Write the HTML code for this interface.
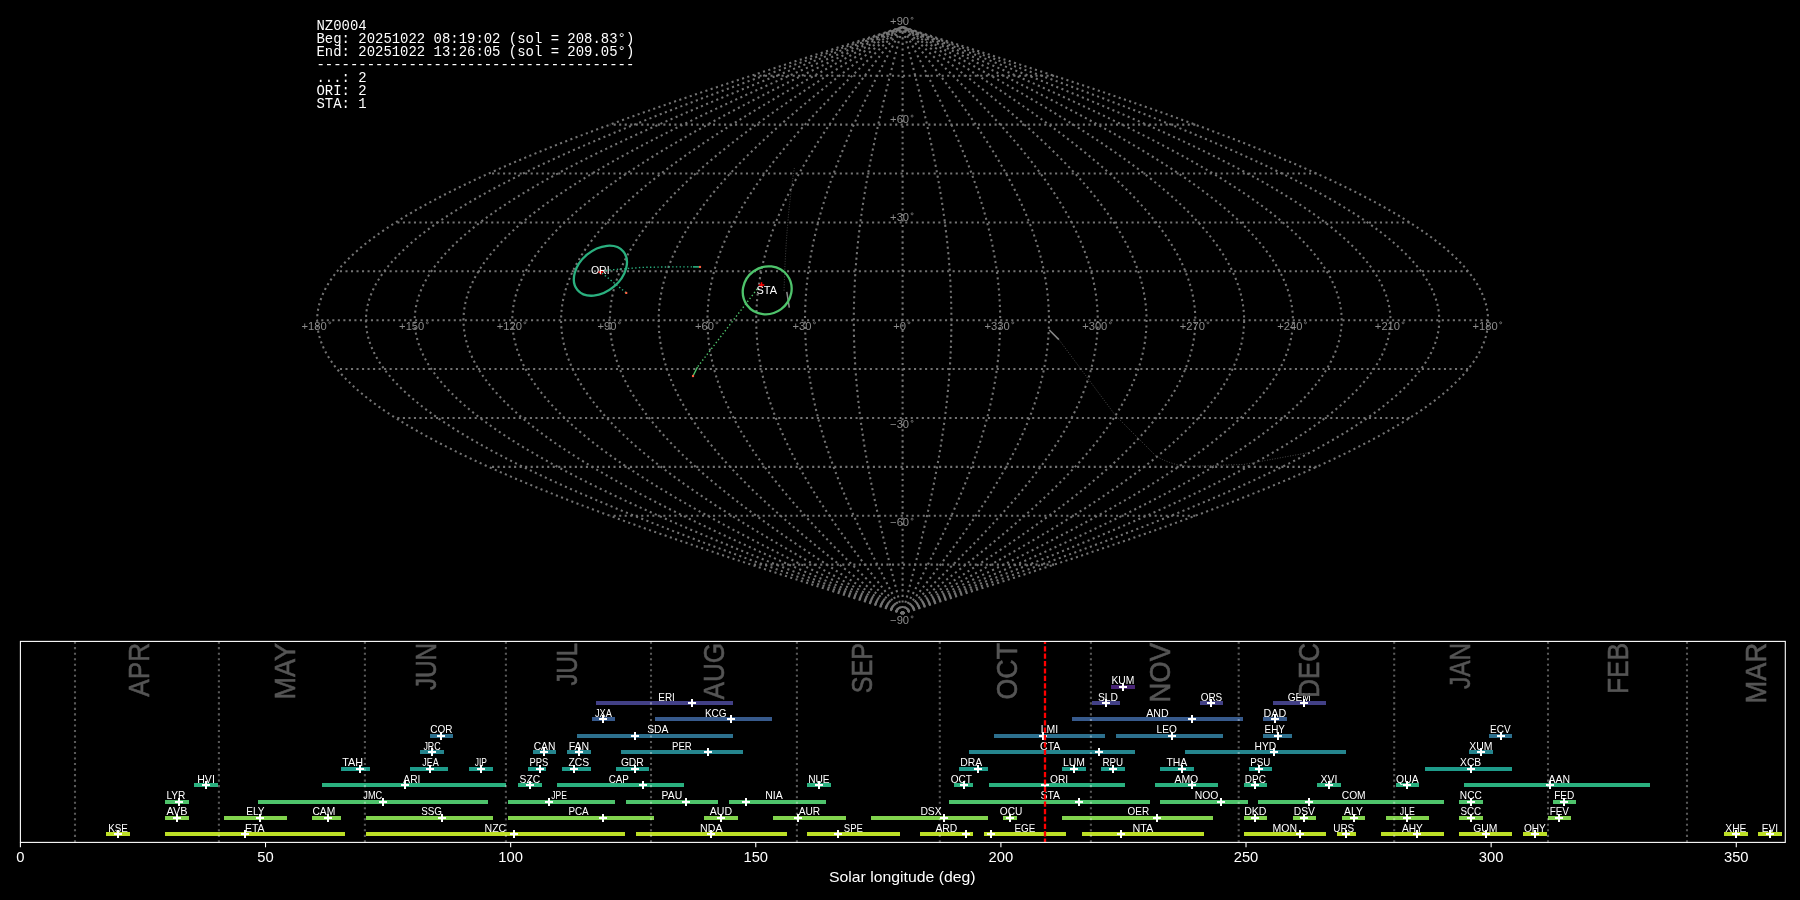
<!DOCTYPE html>
<html><head><meta charset="utf-8"><style>
html,body{margin:0;padding:0;background:#000;width:1800px;height:900px;overflow:hidden}
svg{display:block;will-change:transform}
text{font-family:"Liberation Sans",sans-serif}
</style></head><body>
<svg width="1800" height="900" viewBox="0 0 1800 900">
<rect width="1800" height="900" fill="#000"/>
<g fill="none" stroke="#737373" stroke-width="2.08" stroke-dasharray="2.08 3.44">
<path d="M902.60 613.51 L907.71 611.88 L912.82 610.25 L917.93 608.62 L923.03 606.99 L928.14 605.36 L933.24 603.73 L938.34 602.10 L943.44 600.47 L948.53 598.84 L953.63 597.21 L958.71 595.59 L963.80 593.96 L968.87 592.33 L973.95 590.70 L979.02 589.07 L984.08 587.44 L989.14 585.81 L994.18 584.18 L999.23 582.55 L1004.26 580.92 L1009.29 579.29 L1014.31 577.66 L1019.32 576.03 L1024.32 574.40 L1029.31 572.77 L1034.30 571.14 L1039.27 569.51 L1044.23 567.88 L1049.18 566.25 L1054.13 564.62 L1059.05 563.00 L1063.97 561.37 L1068.88 559.74 L1073.77 558.11 L1078.65 556.48 L1083.51 554.85 L1088.37 553.22 L1093.20 551.59 L1098.03 549.96 L1102.84 548.33 L1107.63 546.70 L1112.41 545.07 L1117.17 543.44 L1121.91 541.81 L1126.64 540.18 L1131.35 538.55 L1136.05 536.92 L1140.72 535.29 L1145.38 533.66 L1150.02 532.03 L1154.64 530.41 L1159.24 528.78 L1163.83 527.15 L1168.39 525.52 L1172.93 523.89 L1177.45 522.26 L1181.95 520.63 L1186.43 519.00 L1190.89 517.37 L1195.33 515.74 L1199.74 514.11 L1204.13 512.48 L1208.50 510.85 L1212.84 509.22 L1217.16 507.59 L1221.46 505.96 L1225.73 504.33 L1229.98 502.70 L1234.20 501.07 L1238.40 499.44 L1242.57 497.82 L1246.72 496.19 L1250.84 494.56 L1254.93 492.93 L1259.00 491.30 L1263.04 489.67 L1267.05 488.04 L1271.04 486.41 L1274.99 484.78 L1278.92 483.15 L1282.82 481.52 L1286.69 479.89 L1290.53 478.26 L1294.34 476.63 L1298.12 475.00 L1301.88 473.37 L1305.60 471.74 L1309.29 470.11 L1312.95 468.48 L1316.58 466.86 L1320.17 465.23 L1323.74 463.60 L1327.27 461.97 L1330.77 460.34 L1334.24 458.71 L1337.67 457.08 L1341.08 455.45 L1344.44 453.82 L1347.78 452.19 L1351.08 450.56 L1354.35 448.93 L1357.58 447.30 L1360.78 445.67 L1363.94 444.04 L1367.07 442.41 L1370.16 440.78 L1373.22 439.15 L1376.24 437.52 L1379.22 435.89 L1382.17 434.26 L1385.08 432.64 L1387.96 431.01 L1390.80 429.38 L1393.60 427.75 L1396.36 426.12 L1399.09 424.49 L1401.78 422.86 L1404.43 421.23 L1407.04 419.60 L1409.61 417.97 L1412.15 416.34 L1414.65 414.71 L1417.10 413.08 L1419.52 411.45 L1421.90 409.82 L1424.24 408.19 L1426.54 406.56 L1428.80 404.93 L1431.02 403.30 L1433.20 401.67 L1435.34 400.05 L1437.44 398.42 L1439.49 396.79 L1441.51 395.16 L1443.49 393.53 L1445.42 391.90 L1447.31 390.27 L1449.16 388.64 L1450.97 387.01 L1452.74 385.38 L1454.47 383.75 L1456.15 382.12 L1457.80 380.49 L1459.40 378.86 L1460.95 377.23 L1462.47 375.60 L1463.94 373.97 L1465.37 372.34 L1466.76 370.71 L1468.10 369.08 L1469.40 367.46 L1470.66 365.83 L1471.87 364.20 L1473.04 362.57 L1474.17 360.94 L1475.26 359.31 L1476.30 357.68 L1477.29 356.05 L1478.25 354.42 L1479.16 352.79 L1480.02 351.16 L1480.84 349.53 L1481.62 347.90 L1482.35 346.27 L1483.04 344.64 L1483.69 343.01 L1484.29 341.38 L1484.84 339.75 L1485.35 338.12 L1485.82 336.50 L1486.25 334.87 L1486.62 333.24 L1486.96 331.61 L1487.25 329.98 L1487.49 328.35 L1487.69 326.72 L1487.85 325.09 L1487.96 323.46 L1488.03 321.83 L1488.05 320.20 L1488.03 318.57 L1487.96 316.94 L1487.85 315.31 L1487.69 313.68 L1487.49 312.05 L1487.25 310.42 L1486.96 308.79 L1486.62 307.16 L1486.25 305.53 L1485.82 303.90 L1485.35 302.28 L1484.84 300.65 L1484.29 299.02 L1483.69 297.39 L1483.04 295.76 L1482.35 294.13 L1481.62 292.50 L1480.84 290.87 L1480.02 289.24 L1479.16 287.61 L1478.25 285.98 L1477.29 284.35 L1476.30 282.72 L1475.26 281.09 L1474.17 279.46 L1473.04 277.83 L1471.87 276.20 L1470.66 274.57 L1469.40 272.94 L1468.10 271.31 L1466.76 269.69 L1465.37 268.06 L1463.94 266.43 L1462.47 264.80 L1460.95 263.17 L1459.40 261.54 L1457.80 259.91 L1456.15 258.28 L1454.47 256.65 L1452.74 255.02 L1450.97 253.39 L1449.16 251.76 L1447.31 250.13 L1445.42 248.50 L1443.49 246.87 L1441.51 245.24 L1439.49 243.61 L1437.44 241.98 L1435.34 240.35 L1433.20 238.72 L1431.02 237.10 L1428.80 235.47 L1426.54 233.84 L1424.24 232.21 L1421.90 230.58 L1419.52 228.95 L1417.10 227.32 L1414.65 225.69 L1412.15 224.06 L1409.61 222.43 L1407.04 220.80 L1404.43 219.17 L1401.78 217.54 L1399.09 215.91 L1396.36 214.28 L1393.60 212.65 L1390.80 211.02 L1387.96 209.39 L1385.08 207.76 L1382.17 206.13 L1379.22 204.51 L1376.24 202.88 L1373.22 201.25 L1370.16 199.62 L1367.07 197.99 L1363.94 196.36 L1360.78 194.73 L1357.58 193.10 L1354.35 191.47 L1351.08 189.84 L1347.78 188.21 L1344.44 186.58 L1341.08 184.95 L1337.67 183.32 L1334.24 181.69 L1330.77 180.06 L1327.27 178.43 L1323.74 176.80 L1320.17 175.17 L1316.58 173.54 L1312.95 171.92 L1309.29 170.29 L1305.60 168.66 L1301.88 167.03 L1298.12 165.40 L1294.34 163.77 L1290.53 162.14 L1286.69 160.51 L1282.82 158.88 L1278.92 157.25 L1274.99 155.62 L1271.04 153.99 L1267.05 152.36 L1263.04 150.73 L1259.00 149.10 L1254.93 147.47 L1250.84 145.84 L1246.72 144.21 L1242.57 142.58 L1238.40 140.95 L1234.20 139.33 L1229.98 137.70 L1225.73 136.07 L1221.46 134.44 L1217.16 132.81 L1212.84 131.18 L1208.50 129.55 L1204.13 127.92 L1199.74 126.29 L1195.33 124.66 L1190.89 123.03 L1186.43 121.40 L1181.95 119.77 L1177.45 118.14 L1172.93 116.51 L1168.39 114.88 L1163.83 113.25 L1159.24 111.62 L1154.64 109.99 L1150.02 108.37 L1145.38 106.74 L1140.72 105.11 L1136.05 103.48 L1131.35 101.85 L1126.64 100.22 L1121.91 98.59 L1117.17 96.96 L1112.41 95.33 L1107.63 93.70 L1102.84 92.07 L1098.03 90.44 L1093.20 88.81 L1088.37 87.18 L1083.51 85.55 L1078.65 83.92 L1073.77 82.29 L1068.88 80.66 L1063.97 79.03 L1059.05 77.40 L1054.13 75.78 L1049.18 74.15 L1044.23 72.52 L1039.27 70.89 L1034.30 69.26 L1029.31 67.63 L1024.32 66.00 L1019.32 64.37 L1014.31 62.74 L1009.29 61.11 L1004.26 59.48 L999.23 57.85 L994.18 56.22 L989.14 54.59 L984.08 52.96 L979.02 51.33 L973.95 49.70 L968.87 48.07 L963.80 46.44 L958.71 44.81 L953.63 43.19 L948.53 41.56 L943.44 39.93 L938.34 38.30 L933.24 36.67 L928.14 35.04 L923.03 33.41 L917.93 31.78 L912.82 30.15 L907.71 28.52 L902.60 26.89"/>
<path d="M902.60 613.51 L907.28 611.88 L911.97 610.25 L916.65 608.62 L921.33 606.99 L926.01 605.36 L930.69 603.73 L935.36 602.10 L940.04 600.47 L944.71 598.84 L949.37 597.21 L954.04 595.59 L958.70 593.96 L963.35 592.33 L968.00 590.70 L972.65 589.07 L977.29 587.44 L981.92 585.81 L986.55 584.18 L991.17 582.55 L995.79 580.92 L1000.40 579.29 L1005.00 577.66 L1009.59 576.03 L1014.18 574.40 L1018.76 572.77 L1023.32 571.14 L1027.88 569.51 L1032.43 567.88 L1036.97 566.25 L1041.50 564.62 L1046.02 563.00 L1050.52 561.37 L1055.02 559.74 L1059.50 558.11 L1063.98 556.48 L1068.44 554.85 L1072.89 553.22 L1077.32 551.59 L1081.74 549.96 L1086.15 548.33 L1090.54 546.70 L1094.92 545.07 L1099.29 543.44 L1103.64 541.81 L1107.97 540.18 L1112.29 538.55 L1116.59 536.92 L1120.88 535.29 L1125.15 533.66 L1129.40 532.03 L1133.64 530.41 L1137.86 528.78 L1142.06 527.15 L1146.24 525.52 L1150.40 523.89 L1154.55 522.26 L1158.67 520.63 L1162.78 519.00 L1166.87 517.37 L1170.93 515.74 L1174.98 514.11 L1179.00 512.48 L1183.01 510.85 L1186.99 509.22 L1190.95 507.59 L1194.89 505.96 L1198.80 504.33 L1202.70 502.70 L1206.57 501.07 L1210.42 499.44 L1214.24 497.82 L1218.04 496.19 L1221.82 494.56 L1225.57 492.93 L1229.30 491.30 L1233.00 489.67 L1236.68 488.04 L1240.33 486.41 L1243.96 484.78 L1247.56 483.15 L1251.13 481.52 L1254.68 479.89 L1258.20 478.26 L1261.70 476.63 L1265.16 475.00 L1268.60 473.37 L1272.01 471.74 L1275.40 470.11 L1278.75 468.48 L1282.08 466.86 L1285.37 465.23 L1288.64 463.60 L1291.88 461.97 L1295.09 460.34 L1298.27 458.71 L1301.42 457.08 L1304.54 455.45 L1307.62 453.82 L1310.68 452.19 L1313.71 450.56 L1316.70 448.93 L1319.67 447.30 L1322.60 445.67 L1325.50 444.04 L1328.36 442.41 L1331.20 440.78 L1334.00 439.15 L1336.77 437.52 L1339.51 435.89 L1342.21 434.26 L1344.88 432.64 L1347.51 431.01 L1350.12 429.38 L1352.68 427.75 L1355.22 426.12 L1357.72 424.49 L1360.18 422.86 L1362.61 421.23 L1365.00 419.60 L1367.36 417.97 L1369.69 416.34 L1371.98 414.71 L1374.23 413.08 L1376.44 411.45 L1378.63 409.82 L1380.77 408.19 L1382.88 406.56 L1384.95 404.93 L1386.98 403.30 L1388.98 401.67 L1390.94 400.05 L1392.87 398.42 L1394.75 396.79 L1396.60 395.16 L1398.41 393.53 L1400.18 391.90 L1401.92 390.27 L1403.62 388.64 L1405.28 387.01 L1406.90 385.38 L1408.48 383.75 L1410.02 382.12 L1411.53 380.49 L1413.00 378.86 L1414.42 377.23 L1415.81 375.60 L1417.16 373.97 L1418.47 372.34 L1419.74 370.71 L1420.98 369.08 L1422.17 367.46 L1423.32 365.83 L1424.43 364.20 L1425.51 362.57 L1426.54 360.94 L1427.54 359.31 L1428.49 357.68 L1429.40 356.05 L1430.28 354.42 L1431.11 352.79 L1431.90 351.16 L1432.66 349.53 L1433.37 347.90 L1434.04 346.27 L1434.67 344.64 L1435.26 343.01 L1435.81 341.38 L1436.32 339.75 L1436.79 338.12 L1437.22 336.50 L1437.61 334.87 L1437.96 333.24 L1438.26 331.61 L1438.53 329.98 L1438.75 328.35 L1438.94 326.72 L1439.08 325.09 L1439.18 323.46 L1439.24 321.83 L1439.26 320.20 L1439.24 318.57 L1439.18 316.94 L1439.08 315.31 L1438.94 313.68 L1438.75 312.05 L1438.53 310.42 L1438.26 308.79 L1437.96 307.16 L1437.61 305.53 L1437.22 303.90 L1436.79 302.28 L1436.32 300.65 L1435.81 299.02 L1435.26 297.39 L1434.67 295.76 L1434.04 294.13 L1433.37 292.50 L1432.66 290.87 L1431.90 289.24 L1431.11 287.61 L1430.28 285.98 L1429.40 284.35 L1428.49 282.72 L1427.54 281.09 L1426.54 279.46 L1425.51 277.83 L1424.43 276.20 L1423.32 274.57 L1422.17 272.94 L1420.98 271.31 L1419.74 269.69 L1418.47 268.06 L1417.16 266.43 L1415.81 264.80 L1414.42 263.17 L1413.00 261.54 L1411.53 259.91 L1410.02 258.28 L1408.48 256.65 L1406.90 255.02 L1405.28 253.39 L1403.62 251.76 L1401.92 250.13 L1400.18 248.50 L1398.41 246.87 L1396.60 245.24 L1394.75 243.61 L1392.87 241.98 L1390.94 240.35 L1388.98 238.72 L1386.98 237.10 L1384.95 235.47 L1382.88 233.84 L1380.77 232.21 L1378.63 230.58 L1376.44 228.95 L1374.23 227.32 L1371.98 225.69 L1369.69 224.06 L1367.36 222.43 L1365.00 220.80 L1362.61 219.17 L1360.18 217.54 L1357.72 215.91 L1355.22 214.28 L1352.68 212.65 L1350.12 211.02 L1347.51 209.39 L1344.88 207.76 L1342.21 206.13 L1339.51 204.51 L1336.77 202.88 L1334.00 201.25 L1331.20 199.62 L1328.36 197.99 L1325.50 196.36 L1322.60 194.73 L1319.67 193.10 L1316.70 191.47 L1313.71 189.84 L1310.68 188.21 L1307.62 186.58 L1304.54 184.95 L1301.42 183.32 L1298.27 181.69 L1295.09 180.06 L1291.88 178.43 L1288.64 176.80 L1285.37 175.17 L1282.08 173.54 L1278.75 171.92 L1275.40 170.29 L1272.01 168.66 L1268.60 167.03 L1265.16 165.40 L1261.70 163.77 L1258.20 162.14 L1254.68 160.51 L1251.13 158.88 L1247.56 157.25 L1243.96 155.62 L1240.33 153.99 L1236.68 152.36 L1233.00 150.73 L1229.30 149.10 L1225.57 147.47 L1221.82 145.84 L1218.04 144.21 L1214.24 142.58 L1210.42 140.95 L1206.57 139.33 L1202.70 137.70 L1198.80 136.07 L1194.89 134.44 L1190.95 132.81 L1186.99 131.18 L1183.01 129.55 L1179.00 127.92 L1174.98 126.29 L1170.93 124.66 L1166.87 123.03 L1162.78 121.40 L1158.67 119.77 L1154.55 118.14 L1150.40 116.51 L1146.24 114.88 L1142.06 113.25 L1137.86 111.62 L1133.64 109.99 L1129.40 108.37 L1125.15 106.74 L1120.88 105.11 L1116.59 103.48 L1112.29 101.85 L1107.97 100.22 L1103.64 98.59 L1099.29 96.96 L1094.92 95.33 L1090.54 93.70 L1086.15 92.07 L1081.74 90.44 L1077.32 88.81 L1072.89 87.18 L1068.44 85.55 L1063.98 83.92 L1059.50 82.29 L1055.02 80.66 L1050.52 79.03 L1046.02 77.40 L1041.50 75.78 L1036.97 74.15 L1032.43 72.52 L1027.88 70.89 L1023.32 69.26 L1018.76 67.63 L1014.18 66.00 L1009.59 64.37 L1005.00 62.74 L1000.40 61.11 L995.79 59.48 L991.17 57.85 L986.55 56.22 L981.92 54.59 L977.29 52.96 L972.65 51.33 L968.00 49.70 L963.35 48.07 L958.70 46.44 L954.04 44.81 L949.37 43.19 L944.71 41.56 L940.04 39.93 L935.36 38.30 L930.69 36.67 L926.01 35.04 L921.33 33.41 L916.65 31.78 L911.97 30.15 L907.28 28.52 L902.60 26.89"/>
<path d="M902.60 613.51 L906.86 611.88 L911.11 610.25 L915.37 608.62 L919.63 606.99 L923.88 605.36 L928.13 603.73 L932.38 602.10 L936.63 600.47 L940.88 598.84 L945.12 597.21 L949.36 595.59 L953.60 593.96 L957.83 592.33 L962.06 590.70 L966.28 589.07 L970.50 587.44 L974.71 585.81 L978.92 584.18 L983.12 582.55 L987.32 580.92 L991.51 579.29 L995.69 577.66 L999.87 576.03 L1004.03 574.40 L1008.20 572.77 L1012.35 571.14 L1016.49 569.51 L1020.63 567.88 L1024.75 566.25 L1028.87 564.62 L1032.98 563.00 L1037.08 561.37 L1041.16 559.74 L1045.24 558.11 L1049.31 556.48 L1053.36 554.85 L1057.41 553.22 L1061.44 551.59 L1065.46 549.96 L1069.46 548.33 L1073.46 546.70 L1077.44 545.07 L1081.41 543.44 L1085.36 541.81 L1089.30 540.18 L1093.23 538.55 L1097.14 536.92 L1101.04 535.29 L1104.92 533.66 L1108.78 532.03 L1112.64 530.41 L1116.47 528.78 L1120.29 527.15 L1124.09 525.52 L1127.88 523.89 L1131.64 522.26 L1135.39 520.63 L1139.13 519.00 L1142.84 517.37 L1146.54 515.74 L1150.22 514.11 L1153.87 512.48 L1157.51 510.85 L1161.13 509.22 L1164.74 507.59 L1168.32 505.96 L1171.88 504.33 L1175.42 502.70 L1178.94 501.07 L1182.43 499.44 L1185.91 497.82 L1189.37 496.19 L1192.80 494.56 L1196.21 492.93 L1199.60 491.30 L1202.97 489.67 L1206.31 488.04 L1209.63 486.41 L1212.93 484.78 L1216.20 483.15 L1219.45 481.52 L1222.67 479.89 L1225.88 478.26 L1229.05 476.63 L1232.20 475.00 L1235.33 473.37 L1238.43 471.74 L1241.51 470.11 L1244.56 468.48 L1247.58 466.86 L1250.58 465.23 L1253.55 463.60 L1256.49 461.97 L1259.41 460.34 L1262.30 458.71 L1265.16 457.08 L1268.00 455.45 L1270.80 453.82 L1273.58 452.19 L1276.33 450.56 L1279.06 448.93 L1281.75 447.30 L1284.41 445.67 L1287.05 444.04 L1289.66 442.41 L1292.23 440.78 L1294.78 439.15 L1297.30 437.52 L1299.79 435.89 L1302.24 434.26 L1304.67 432.64 L1307.07 431.01 L1309.43 429.38 L1311.77 427.75 L1314.07 426.12 L1316.34 424.49 L1318.58 422.86 L1320.79 421.23 L1322.97 419.60 L1325.11 417.97 L1327.22 416.34 L1329.31 414.71 L1331.35 413.08 L1333.37 411.45 L1335.35 409.82 L1337.30 408.19 L1339.22 406.56 L1341.10 404.93 L1342.95 403.30 L1344.76 401.67 L1346.55 400.05 L1348.30 398.42 L1350.01 396.79 L1351.69 395.16 L1353.34 393.53 L1354.95 391.90 L1356.53 390.27 L1358.07 388.64 L1359.58 387.01 L1361.05 385.38 L1362.49 383.75 L1363.89 382.12 L1365.26 380.49 L1366.60 378.86 L1367.89 377.23 L1369.16 375.60 L1370.38 373.97 L1371.58 372.34 L1372.73 370.71 L1373.85 369.08 L1374.94 367.46 L1375.98 365.83 L1376.99 364.20 L1377.97 362.57 L1378.91 360.94 L1379.81 359.31 L1380.68 357.68 L1381.51 356.05 L1382.31 354.42 L1383.06 352.79 L1383.78 351.16 L1384.47 349.53 L1385.12 347.90 L1385.73 346.27 L1386.30 344.64 L1386.84 343.01 L1387.34 341.38 L1387.80 339.75 L1388.23 338.12 L1388.62 336.50 L1388.97 334.87 L1389.29 333.24 L1389.57 331.61 L1389.81 329.98 L1390.01 328.35 L1390.18 326.72 L1390.31 325.09 L1390.40 323.46 L1390.46 321.83 L1390.47 320.20 L1390.46 318.57 L1390.40 316.94 L1390.31 315.31 L1390.18 313.68 L1390.01 312.05 L1389.81 310.42 L1389.57 308.79 L1389.29 307.16 L1388.97 305.53 L1388.62 303.90 L1388.23 302.28 L1387.80 300.65 L1387.34 299.02 L1386.84 297.39 L1386.30 295.76 L1385.73 294.13 L1385.12 292.50 L1384.47 290.87 L1383.78 289.24 L1383.06 287.61 L1382.31 285.98 L1381.51 284.35 L1380.68 282.72 L1379.81 281.09 L1378.91 279.46 L1377.97 277.83 L1376.99 276.20 L1375.98 274.57 L1374.94 272.94 L1373.85 271.31 L1372.73 269.69 L1371.58 268.06 L1370.38 266.43 L1369.16 264.80 L1367.89 263.17 L1366.60 261.54 L1365.26 259.91 L1363.89 258.28 L1362.49 256.65 L1361.05 255.02 L1359.58 253.39 L1358.07 251.76 L1356.53 250.13 L1354.95 248.50 L1353.34 246.87 L1351.69 245.24 L1350.01 243.61 L1348.30 241.98 L1346.55 240.35 L1344.76 238.72 L1342.95 237.10 L1341.10 235.47 L1339.22 233.84 L1337.30 232.21 L1335.35 230.58 L1333.37 228.95 L1331.35 227.32 L1329.31 225.69 L1327.22 224.06 L1325.11 222.43 L1322.97 220.80 L1320.79 219.17 L1318.58 217.54 L1316.34 215.91 L1314.07 214.28 L1311.77 212.65 L1309.43 211.02 L1307.07 209.39 L1304.67 207.76 L1302.24 206.13 L1299.79 204.51 L1297.30 202.88 L1294.78 201.25 L1292.23 199.62 L1289.66 197.99 L1287.05 196.36 L1284.41 194.73 L1281.75 193.10 L1279.06 191.47 L1276.33 189.84 L1273.58 188.21 L1270.80 186.58 L1268.00 184.95 L1265.16 183.32 L1262.30 181.69 L1259.41 180.06 L1256.49 178.43 L1253.55 176.80 L1250.58 175.17 L1247.58 173.54 L1244.56 171.92 L1241.51 170.29 L1238.43 168.66 L1235.33 167.03 L1232.20 165.40 L1229.05 163.77 L1225.88 162.14 L1222.67 160.51 L1219.45 158.88 L1216.20 157.25 L1212.93 155.62 L1209.63 153.99 L1206.31 152.36 L1202.97 150.73 L1199.60 149.10 L1196.21 147.47 L1192.80 145.84 L1189.37 144.21 L1185.91 142.58 L1182.43 140.95 L1178.94 139.33 L1175.42 137.70 L1171.88 136.07 L1168.32 134.44 L1164.74 132.81 L1161.13 131.18 L1157.51 129.55 L1153.87 127.92 L1150.22 126.29 L1146.54 124.66 L1142.84 123.03 L1139.13 121.40 L1135.39 119.77 L1131.64 118.14 L1127.88 116.51 L1124.09 114.88 L1120.29 113.25 L1116.47 111.62 L1112.64 109.99 L1108.78 108.37 L1104.92 106.74 L1101.04 105.11 L1097.14 103.48 L1093.23 101.85 L1089.30 100.22 L1085.36 98.59 L1081.41 96.96 L1077.44 95.33 L1073.46 93.70 L1069.46 92.07 L1065.46 90.44 L1061.44 88.81 L1057.41 87.18 L1053.36 85.55 L1049.31 83.92 L1045.24 82.29 L1041.16 80.66 L1037.08 79.03 L1032.98 77.40 L1028.87 75.78 L1024.75 74.15 L1020.63 72.52 L1016.49 70.89 L1012.35 69.26 L1008.20 67.63 L1004.03 66.00 L999.87 64.37 L995.69 62.74 L991.51 61.11 L987.32 59.48 L983.12 57.85 L978.92 56.22 L974.71 54.59 L970.50 52.96 L966.28 51.33 L962.06 49.70 L957.83 48.07 L953.60 46.44 L949.36 44.81 L945.12 43.19 L940.88 41.56 L936.63 39.93 L932.38 38.30 L928.13 36.67 L923.88 35.04 L919.63 33.41 L915.37 31.78 L911.11 30.15 L906.86 28.52 L902.60 26.89"/>
<path d="M902.60 613.51 L906.43 611.88 L910.26 610.25 L914.09 608.62 L917.92 606.99 L921.75 605.36 L925.58 603.73 L929.41 602.10 L933.23 600.47 L937.05 598.84 L940.87 597.21 L944.68 595.59 L948.50 593.96 L952.31 592.33 L956.11 590.70 L959.91 589.07 L963.71 587.44 L967.50 585.81 L971.29 584.18 L975.07 582.55 L978.85 580.92 L982.62 579.29 L986.38 577.66 L990.14 576.03 L993.89 574.40 L997.64 572.77 L1001.37 571.14 L1005.10 569.51 L1008.82 567.88 L1012.54 566.25 L1016.24 564.62 L1019.94 563.00 L1023.63 561.37 L1027.31 559.74 L1030.98 558.11 L1034.64 556.48 L1038.29 554.85 L1041.92 553.22 L1045.55 551.59 L1049.17 549.96 L1052.78 548.33 L1056.37 546.70 L1059.95 545.07 L1063.53 543.44 L1067.09 541.81 L1070.63 540.18 L1074.17 538.55 L1077.69 536.92 L1081.19 535.29 L1084.69 533.66 L1088.17 532.03 L1091.63 530.41 L1095.08 528.78 L1098.52 527.15 L1101.94 525.52 L1105.35 523.89 L1108.74 522.26 L1112.11 520.63 L1115.47 519.00 L1118.82 517.37 L1122.14 515.74 L1125.45 514.11 L1128.75 512.48 L1132.02 510.85 L1135.28 509.22 L1138.52 507.59 L1141.74 505.96 L1144.95 504.33 L1148.13 502.70 L1151.30 501.07 L1154.45 499.44 L1157.58 497.82 L1160.69 496.19 L1163.78 494.56 L1166.85 492.93 L1169.90 491.30 L1172.93 489.67 L1175.94 488.04 L1178.93 486.41 L1181.89 484.78 L1184.84 483.15 L1187.76 481.52 L1190.67 479.89 L1193.55 478.26 L1196.41 476.63 L1199.24 475.00 L1202.06 473.37 L1204.85 471.74 L1207.62 470.11 L1210.36 468.48 L1213.08 466.86 L1215.78 465.23 L1218.45 463.60 L1221.10 461.97 L1223.73 460.34 L1226.33 458.71 L1228.91 457.08 L1231.46 455.45 L1233.98 453.82 L1236.48 452.19 L1238.96 450.56 L1241.41 448.93 L1243.84 447.30 L1246.23 445.67 L1248.61 444.04 L1250.95 442.41 L1253.27 440.78 L1255.56 439.15 L1257.83 437.52 L1260.07 435.89 L1262.28 434.26 L1264.46 432.64 L1266.62 431.01 L1268.75 429.38 L1270.85 427.75 L1272.92 426.12 L1274.97 424.49 L1276.98 422.86 L1278.97 421.23 L1280.93 419.60 L1282.86 417.97 L1284.76 416.34 L1286.63 414.71 L1288.48 413.08 L1290.29 411.45 L1292.08 409.82 L1293.83 408.19 L1295.55 406.56 L1297.25 404.93 L1298.91 403.30 L1300.55 401.67 L1302.15 400.05 L1303.73 398.42 L1305.27 396.79 L1306.78 395.16 L1308.26 393.53 L1309.71 391.90 L1311.13 390.27 L1312.52 388.64 L1313.88 387.01 L1315.21 385.38 L1316.50 383.75 L1317.77 382.12 L1319.00 380.49 L1320.20 378.86 L1321.37 377.23 L1322.50 375.60 L1323.61 373.97 L1324.68 372.34 L1325.72 370.71 L1326.73 369.08 L1327.70 367.46 L1328.64 365.83 L1329.56 364.20 L1330.43 362.57 L1331.28 360.94 L1332.09 359.31 L1332.87 357.68 L1333.62 356.05 L1334.33 354.42 L1335.02 352.79 L1335.67 351.16 L1336.28 349.53 L1336.86 347.90 L1337.41 346.27 L1337.93 344.64 L1338.41 343.01 L1338.86 341.38 L1339.28 339.75 L1339.67 338.12 L1340.02 336.50 L1340.33 334.87 L1340.62 333.24 L1340.87 331.61 L1341.09 329.98 L1341.27 328.35 L1341.42 326.72 L1341.54 325.09 L1341.62 323.46 L1341.67 321.83 L1341.69 320.20 L1341.67 318.57 L1341.62 316.94 L1341.54 315.31 L1341.42 313.68 L1341.27 312.05 L1341.09 310.42 L1340.87 308.79 L1340.62 307.16 L1340.33 305.53 L1340.02 303.90 L1339.67 302.28 L1339.28 300.65 L1338.86 299.02 L1338.41 297.39 L1337.93 295.76 L1337.41 294.13 L1336.86 292.50 L1336.28 290.87 L1335.67 289.24 L1335.02 287.61 L1334.33 285.98 L1333.62 284.35 L1332.87 282.72 L1332.09 281.09 L1331.28 279.46 L1330.43 277.83 L1329.56 276.20 L1328.64 274.57 L1327.70 272.94 L1326.73 271.31 L1325.72 269.69 L1324.68 268.06 L1323.61 266.43 L1322.50 264.80 L1321.37 263.17 L1320.20 261.54 L1319.00 259.91 L1317.77 258.28 L1316.50 256.65 L1315.21 255.02 L1313.88 253.39 L1312.52 251.76 L1311.13 250.13 L1309.71 248.50 L1308.26 246.87 L1306.78 245.24 L1305.27 243.61 L1303.73 241.98 L1302.15 240.35 L1300.55 238.72 L1298.91 237.10 L1297.25 235.47 L1295.55 233.84 L1293.83 232.21 L1292.08 230.58 L1290.29 228.95 L1288.48 227.32 L1286.63 225.69 L1284.76 224.06 L1282.86 222.43 L1280.93 220.80 L1278.97 219.17 L1276.98 217.54 L1274.97 215.91 L1272.92 214.28 L1270.85 212.65 L1268.75 211.02 L1266.62 209.39 L1264.46 207.76 L1262.28 206.13 L1260.07 204.51 L1257.83 202.88 L1255.56 201.25 L1253.27 199.62 L1250.95 197.99 L1248.61 196.36 L1246.23 194.73 L1243.84 193.10 L1241.41 191.47 L1238.96 189.84 L1236.48 188.21 L1233.98 186.58 L1231.46 184.95 L1228.91 183.32 L1226.33 181.69 L1223.73 180.06 L1221.10 178.43 L1218.45 176.80 L1215.78 175.17 L1213.08 173.54 L1210.36 171.92 L1207.62 170.29 L1204.85 168.66 L1202.06 167.03 L1199.24 165.40 L1196.41 163.77 L1193.55 162.14 L1190.67 160.51 L1187.76 158.88 L1184.84 157.25 L1181.89 155.62 L1178.93 153.99 L1175.94 152.36 L1172.93 150.73 L1169.90 149.10 L1166.85 147.47 L1163.78 145.84 L1160.69 144.21 L1157.58 142.58 L1154.45 140.95 L1151.30 139.33 L1148.13 137.70 L1144.95 136.07 L1141.74 134.44 L1138.52 132.81 L1135.28 131.18 L1132.02 129.55 L1128.75 127.92 L1125.45 126.29 L1122.14 124.66 L1118.82 123.03 L1115.47 121.40 L1112.11 119.77 L1108.74 118.14 L1105.35 116.51 L1101.94 114.88 L1098.52 113.25 L1095.08 111.62 L1091.63 109.99 L1088.17 108.37 L1084.69 106.74 L1081.19 105.11 L1077.69 103.48 L1074.17 101.85 L1070.63 100.22 L1067.09 98.59 L1063.53 96.96 L1059.95 95.33 L1056.37 93.70 L1052.78 92.07 L1049.17 90.44 L1045.55 88.81 L1041.92 87.18 L1038.29 85.55 L1034.64 83.92 L1030.98 82.29 L1027.31 80.66 L1023.63 79.03 L1019.94 77.40 L1016.24 75.78 L1012.54 74.15 L1008.82 72.52 L1005.10 70.89 L1001.37 69.26 L997.64 67.63 L993.89 66.00 L990.14 64.37 L986.38 62.74 L982.62 61.11 L978.85 59.48 L975.07 57.85 L971.29 56.22 L967.50 54.59 L963.71 52.96 L959.91 51.33 L956.11 49.70 L952.31 48.07 L948.50 46.44 L944.68 44.81 L940.87 43.19 L937.05 41.56 L933.23 39.93 L929.41 38.30 L925.58 36.67 L921.75 35.04 L917.92 33.41 L914.09 31.78 L910.26 30.15 L906.43 28.52 L902.60 26.89"/>
<path d="M902.60 613.51 L906.01 611.88 L909.41 610.25 L912.82 608.62 L916.22 606.99 L919.62 605.36 L923.03 603.73 L926.43 602.10 L929.83 600.47 L933.22 598.84 L936.62 597.21 L940.01 595.59 L943.40 593.96 L946.78 592.33 L950.17 590.70 L953.54 589.07 L956.92 587.44 L960.29 585.81 L963.66 584.18 L967.02 582.55 L970.37 580.92 L973.73 579.29 L977.07 577.66 L980.41 576.03 L983.75 574.40 L987.08 572.77 L990.40 571.14 L993.71 569.51 L997.02 567.88 L1000.32 566.25 L1003.62 564.62 L1006.90 563.00 L1010.18 561.37 L1013.45 559.74 L1016.71 558.11 L1019.97 556.48 L1023.21 554.85 L1026.44 553.22 L1029.67 551.59 L1032.88 549.96 L1036.09 548.33 L1039.29 546.70 L1042.47 545.07 L1045.65 543.44 L1048.81 541.81 L1051.96 540.18 L1055.10 538.55 L1058.23 536.92 L1061.35 535.29 L1064.45 533.66 L1067.55 532.03 L1070.63 530.41 L1073.70 528.78 L1076.75 527.15 L1079.79 525.52 L1082.82 523.89 L1085.83 522.26 L1088.84 520.63 L1091.82 519.00 L1094.79 517.37 L1097.75 515.74 L1100.69 514.11 L1103.62 512.48 L1106.53 510.85 L1109.43 509.22 L1112.31 507.59 L1115.17 505.96 L1118.02 504.33 L1120.85 502.70 L1123.67 501.07 L1126.47 499.44 L1129.25 497.82 L1132.01 496.19 L1134.76 494.56 L1137.49 492.93 L1140.20 491.30 L1142.89 489.67 L1145.57 488.04 L1148.22 486.41 L1150.86 484.78 L1153.48 483.15 L1156.08 481.52 L1158.66 479.89 L1161.22 478.26 L1163.76 476.63 L1166.28 475.00 L1168.78 473.37 L1171.26 471.74 L1173.73 470.11 L1176.16 468.48 L1178.58 466.86 L1180.98 465.23 L1183.36 463.60 L1185.71 461.97 L1188.05 460.34 L1190.36 458.71 L1192.65 457.08 L1194.92 455.45 L1197.16 453.82 L1199.39 452.19 L1201.59 450.56 L1203.77 448.93 L1205.92 447.30 L1208.05 445.67 L1210.16 444.04 L1212.25 442.41 L1214.31 440.78 L1216.35 439.15 L1218.36 437.52 L1220.35 435.89 L1222.32 434.26 L1224.26 432.64 L1226.17 431.01 L1228.07 429.38 L1229.93 427.75 L1231.78 426.12 L1233.59 424.49 L1235.39 422.86 L1237.15 421.23 L1238.89 419.60 L1240.61 417.97 L1242.30 416.34 L1243.96 414.71 L1245.60 413.08 L1247.21 411.45 L1248.80 409.82 L1250.36 408.19 L1251.89 406.56 L1253.40 404.93 L1254.88 403.30 L1256.33 401.67 L1257.76 400.05 L1259.16 398.42 L1260.53 396.79 L1261.87 395.16 L1263.19 393.53 L1264.48 391.90 L1265.74 390.27 L1266.98 388.64 L1268.18 387.01 L1269.36 385.38 L1270.51 383.75 L1271.64 382.12 L1272.73 380.49 L1273.80 378.86 L1274.84 377.23 L1275.85 375.60 L1276.83 373.97 L1277.78 372.34 L1278.70 370.71 L1279.60 369.08 L1280.47 367.46 L1281.31 365.83 L1282.12 364.20 L1282.90 362.57 L1283.65 360.94 L1284.37 359.31 L1285.06 357.68 L1285.73 356.05 L1286.36 354.42 L1286.97 352.79 L1287.55 351.16 L1288.09 349.53 L1288.61 347.90 L1289.10 346.27 L1289.56 344.64 L1289.99 343.01 L1290.39 341.38 L1290.76 339.75 L1291.10 338.12 L1291.41 336.50 L1291.70 334.87 L1291.95 333.24 L1292.17 331.61 L1292.37 329.98 L1292.53 328.35 L1292.66 326.72 L1292.77 325.09 L1292.84 323.46 L1292.89 321.83 L1292.90 320.20 L1292.89 318.57 L1292.84 316.94 L1292.77 315.31 L1292.66 313.68 L1292.53 312.05 L1292.37 310.42 L1292.17 308.79 L1291.95 307.16 L1291.70 305.53 L1291.41 303.90 L1291.10 302.28 L1290.76 300.65 L1290.39 299.02 L1289.99 297.39 L1289.56 295.76 L1289.10 294.13 L1288.61 292.50 L1288.09 290.87 L1287.55 289.24 L1286.97 287.61 L1286.36 285.98 L1285.73 284.35 L1285.06 282.72 L1284.37 281.09 L1283.65 279.46 L1282.90 277.83 L1282.12 276.20 L1281.31 274.57 L1280.47 272.94 L1279.60 271.31 L1278.70 269.69 L1277.78 268.06 L1276.83 266.43 L1275.85 264.80 L1274.84 263.17 L1273.80 261.54 L1272.73 259.91 L1271.64 258.28 L1270.51 256.65 L1269.36 255.02 L1268.18 253.39 L1266.98 251.76 L1265.74 250.13 L1264.48 248.50 L1263.19 246.87 L1261.87 245.24 L1260.53 243.61 L1259.16 241.98 L1257.76 240.35 L1256.33 238.72 L1254.88 237.10 L1253.40 235.47 L1251.89 233.84 L1250.36 232.21 L1248.80 230.58 L1247.21 228.95 L1245.60 227.32 L1243.96 225.69 L1242.30 224.06 L1240.61 222.43 L1238.89 220.80 L1237.15 219.17 L1235.39 217.54 L1233.59 215.91 L1231.78 214.28 L1229.93 212.65 L1228.07 211.02 L1226.17 209.39 L1224.26 207.76 L1222.32 206.13 L1220.35 204.51 L1218.36 202.88 L1216.35 201.25 L1214.31 199.62 L1212.25 197.99 L1210.16 196.36 L1208.05 194.73 L1205.92 193.10 L1203.77 191.47 L1201.59 189.84 L1199.39 188.21 L1197.16 186.58 L1194.92 184.95 L1192.65 183.32 L1190.36 181.69 L1188.05 180.06 L1185.71 178.43 L1183.36 176.80 L1180.98 175.17 L1178.58 173.54 L1176.16 171.92 L1173.73 170.29 L1171.26 168.66 L1168.78 167.03 L1166.28 165.40 L1163.76 163.77 L1161.22 162.14 L1158.66 160.51 L1156.08 158.88 L1153.48 157.25 L1150.86 155.62 L1148.22 153.99 L1145.57 152.36 L1142.89 150.73 L1140.20 149.10 L1137.49 147.47 L1134.76 145.84 L1132.01 144.21 L1129.25 142.58 L1126.47 140.95 L1123.67 139.33 L1120.85 137.70 L1118.02 136.07 L1115.17 134.44 L1112.31 132.81 L1109.43 131.18 L1106.53 129.55 L1103.62 127.92 L1100.69 126.29 L1097.75 124.66 L1094.79 123.03 L1091.82 121.40 L1088.84 119.77 L1085.83 118.14 L1082.82 116.51 L1079.79 114.88 L1076.75 113.25 L1073.70 111.62 L1070.63 109.99 L1067.55 108.37 L1064.45 106.74 L1061.35 105.11 L1058.23 103.48 L1055.10 101.85 L1051.96 100.22 L1048.81 98.59 L1045.65 96.96 L1042.47 95.33 L1039.29 93.70 L1036.09 92.07 L1032.88 90.44 L1029.67 88.81 L1026.44 87.18 L1023.21 85.55 L1019.97 83.92 L1016.71 82.29 L1013.45 80.66 L1010.18 79.03 L1006.90 77.40 L1003.62 75.78 L1000.32 74.15 L997.02 72.52 L993.71 70.89 L990.40 69.26 L987.08 67.63 L983.75 66.00 L980.41 64.37 L977.07 62.74 L973.73 61.11 L970.37 59.48 L967.02 57.85 L963.66 56.22 L960.29 54.59 L956.92 52.96 L953.54 51.33 L950.17 49.70 L946.78 48.07 L943.40 46.44 L940.01 44.81 L936.62 43.19 L933.22 41.56 L929.83 39.93 L926.43 38.30 L923.03 36.67 L919.62 35.04 L916.22 33.41 L912.82 31.78 L909.41 30.15 L906.01 28.52 L902.60 26.89"/>
<path d="M902.60 613.51 L905.58 611.88 L908.56 610.25 L911.54 608.62 L914.52 606.99 L917.50 605.36 L920.47 603.73 L923.45 602.10 L926.42 600.47 L929.39 598.84 L932.36 597.21 L935.33 595.59 L938.30 593.96 L941.26 592.33 L944.22 590.70 L947.18 589.07 L950.13 587.44 L953.08 585.81 L956.02 584.18 L958.97 582.55 L961.90 580.92 L964.84 579.29 L967.76 577.66 L970.69 576.03 L973.60 574.40 L976.52 572.77 L979.42 571.14 L982.32 569.51 L985.22 567.88 L988.11 566.25 L990.99 564.62 L993.87 563.00 L996.73 561.37 L999.59 559.74 L1002.45 558.11 L1005.29 556.48 L1008.13 554.85 L1010.96 553.22 L1013.79 551.59 L1016.60 549.96 L1019.40 548.33 L1022.20 546.70 L1024.99 545.07 L1027.76 543.44 L1030.53 541.81 L1033.29 540.18 L1036.04 538.55 L1038.78 536.92 L1041.51 535.29 L1044.22 533.66 L1046.93 532.03 L1049.62 530.41 L1052.31 528.78 L1054.98 527.15 L1057.64 525.52 L1060.29 523.89 L1062.93 522.26 L1065.56 520.63 L1068.17 519.00 L1070.77 517.37 L1073.36 515.74 L1075.93 514.11 L1078.49 512.48 L1081.04 510.85 L1083.57 509.22 L1086.09 507.59 L1088.60 505.96 L1091.09 504.33 L1093.57 502.70 L1096.03 501.07 L1098.48 499.44 L1100.92 497.82 L1103.34 496.19 L1105.74 494.56 L1108.13 492.93 L1110.50 491.30 L1112.86 489.67 L1115.20 488.04 L1117.52 486.41 L1119.83 484.78 L1122.12 483.15 L1124.39 481.52 L1126.65 479.89 L1128.89 478.26 L1131.12 476.63 L1133.32 475.00 L1135.51 473.37 L1137.68 471.74 L1139.83 470.11 L1141.97 468.48 L1144.09 466.86 L1146.18 465.23 L1148.26 463.60 L1150.32 461.97 L1152.37 460.34 L1154.39 458.71 L1156.39 457.08 L1158.38 455.45 L1160.34 453.82 L1162.29 452.19 L1164.21 450.56 L1166.12 448.93 L1168.01 447.30 L1169.87 445.67 L1171.72 444.04 L1173.54 442.41 L1175.34 440.78 L1177.13 439.15 L1178.89 437.52 L1180.63 435.89 L1182.35 434.26 L1184.05 432.64 L1185.73 431.01 L1187.38 429.38 L1189.02 427.75 L1190.63 426.12 L1192.22 424.49 L1193.79 422.86 L1195.33 421.23 L1196.86 419.60 L1198.36 417.97 L1199.84 416.34 L1201.29 414.71 L1202.73 413.08 L1204.14 411.45 L1205.53 409.82 L1206.89 408.19 L1208.23 406.56 L1209.55 404.93 L1210.84 403.30 L1212.12 401.67 L1213.36 400.05 L1214.59 398.42 L1215.79 396.79 L1216.96 395.16 L1218.12 393.53 L1219.24 391.90 L1220.35 390.27 L1221.43 388.64 L1222.49 387.01 L1223.52 385.38 L1224.52 383.75 L1225.51 382.12 L1226.46 380.49 L1227.40 378.86 L1228.31 377.23 L1229.19 375.60 L1230.05 373.97 L1230.88 372.34 L1231.69 370.71 L1232.48 369.08 L1233.23 367.46 L1233.97 365.83 L1234.68 364.20 L1235.36 362.57 L1236.02 360.94 L1236.65 359.31 L1237.26 357.68 L1237.84 356.05 L1238.39 354.42 L1238.92 352.79 L1239.43 351.16 L1239.91 349.53 L1240.36 347.90 L1240.79 346.27 L1241.19 344.64 L1241.57 343.01 L1241.92 341.38 L1242.24 339.75 L1242.54 338.12 L1242.81 336.50 L1243.06 334.87 L1243.28 333.24 L1243.48 331.61 L1243.64 329.98 L1243.79 328.35 L1243.90 326.72 L1244.00 325.09 L1244.06 323.46 L1244.10 321.83 L1244.11 320.20 L1244.10 318.57 L1244.06 316.94 L1244.00 315.31 L1243.90 313.68 L1243.79 312.05 L1243.64 310.42 L1243.48 308.79 L1243.28 307.16 L1243.06 305.53 L1242.81 303.90 L1242.54 302.28 L1242.24 300.65 L1241.92 299.02 L1241.57 297.39 L1241.19 295.76 L1240.79 294.13 L1240.36 292.50 L1239.91 290.87 L1239.43 289.24 L1238.92 287.61 L1238.39 285.98 L1237.84 284.35 L1237.26 282.72 L1236.65 281.09 L1236.02 279.46 L1235.36 277.83 L1234.68 276.20 L1233.97 274.57 L1233.23 272.94 L1232.48 271.31 L1231.69 269.69 L1230.88 268.06 L1230.05 266.43 L1229.19 264.80 L1228.31 263.17 L1227.40 261.54 L1226.46 259.91 L1225.51 258.28 L1224.52 256.65 L1223.52 255.02 L1222.49 253.39 L1221.43 251.76 L1220.35 250.13 L1219.24 248.50 L1218.12 246.87 L1216.96 245.24 L1215.79 243.61 L1214.59 241.98 L1213.36 240.35 L1212.12 238.72 L1210.84 237.10 L1209.55 235.47 L1208.23 233.84 L1206.89 232.21 L1205.53 230.58 L1204.14 228.95 L1202.73 227.32 L1201.29 225.69 L1199.84 224.06 L1198.36 222.43 L1196.86 220.80 L1195.33 219.17 L1193.79 217.54 L1192.22 215.91 L1190.63 214.28 L1189.02 212.65 L1187.38 211.02 L1185.73 209.39 L1184.05 207.76 L1182.35 206.13 L1180.63 204.51 L1178.89 202.88 L1177.13 201.25 L1175.34 199.62 L1173.54 197.99 L1171.72 196.36 L1169.87 194.73 L1168.01 193.10 L1166.12 191.47 L1164.21 189.84 L1162.29 188.21 L1160.34 186.58 L1158.38 184.95 L1156.39 183.32 L1154.39 181.69 L1152.37 180.06 L1150.32 178.43 L1148.26 176.80 L1146.18 175.17 L1144.09 173.54 L1141.97 171.92 L1139.83 170.29 L1137.68 168.66 L1135.51 167.03 L1133.32 165.40 L1131.12 163.77 L1128.89 162.14 L1126.65 160.51 L1124.39 158.88 L1122.12 157.25 L1119.83 155.62 L1117.52 153.99 L1115.20 152.36 L1112.86 150.73 L1110.50 149.10 L1108.13 147.47 L1105.74 145.84 L1103.34 144.21 L1100.92 142.58 L1098.48 140.95 L1096.03 139.33 L1093.57 137.70 L1091.09 136.07 L1088.60 134.44 L1086.09 132.81 L1083.57 131.18 L1081.04 129.55 L1078.49 127.92 L1075.93 126.29 L1073.36 124.66 L1070.77 123.03 L1068.17 121.40 L1065.56 119.77 L1062.93 118.14 L1060.29 116.51 L1057.64 114.88 L1054.98 113.25 L1052.31 111.62 L1049.62 109.99 L1046.93 108.37 L1044.22 106.74 L1041.51 105.11 L1038.78 103.48 L1036.04 101.85 L1033.29 100.22 L1030.53 98.59 L1027.76 96.96 L1024.99 95.33 L1022.20 93.70 L1019.40 92.07 L1016.60 90.44 L1013.79 88.81 L1010.96 87.18 L1008.13 85.55 L1005.29 83.92 L1002.45 82.29 L999.59 80.66 L996.73 79.03 L993.87 77.40 L990.99 75.78 L988.11 74.15 L985.22 72.52 L982.32 70.89 L979.42 69.26 L976.52 67.63 L973.60 66.00 L970.69 64.37 L967.76 62.74 L964.84 61.11 L961.90 59.48 L958.97 57.85 L956.02 56.22 L953.08 54.59 L950.13 52.96 L947.18 51.33 L944.22 49.70 L941.26 48.07 L938.30 46.44 L935.33 44.81 L932.36 43.19 L929.39 41.56 L926.42 39.93 L923.45 38.30 L920.47 36.67 L917.50 35.04 L914.52 33.41 L911.54 31.78 L908.56 30.15 L905.58 28.52 L902.60 26.89"/>
<path d="M902.60 613.51 L905.15 611.88 L907.71 610.25 L910.26 608.62 L912.82 606.99 L915.37 605.36 L917.92 603.73 L920.47 602.10 L923.02 600.47 L925.57 598.84 L928.11 597.21 L930.66 595.59 L933.20 593.96 L935.74 592.33 L938.27 590.70 L940.81 589.07 L943.34 587.44 L945.87 585.81 L948.39 584.18 L950.91 582.55 L953.43 580.92 L955.94 579.29 L958.45 577.66 L960.96 576.03 L963.46 574.40 L965.96 572.77 L968.45 571.14 L970.94 569.51 L973.42 567.88 L975.89 566.25 L978.36 564.62 L980.83 563.00 L983.29 561.37 L985.74 559.74 L988.18 558.11 L990.62 556.48 L993.06 554.85 L995.48 553.22 L997.90 551.59 L1000.31 549.96 L1002.72 548.33 L1005.11 546.70 L1007.50 545.07 L1009.88 543.44 L1012.26 541.81 L1014.62 540.18 L1016.98 538.55 L1019.32 536.92 L1021.66 535.29 L1023.99 533.66 L1026.31 532.03 L1028.62 530.41 L1030.92 528.78 L1033.21 527.15 L1035.49 525.52 L1037.77 523.89 L1040.03 522.26 L1042.28 520.63 L1044.52 519.00 L1046.74 517.37 L1048.96 515.74 L1051.17 514.11 L1053.36 512.48 L1055.55 510.85 L1057.72 509.22 L1059.88 507.59 L1062.03 505.96 L1064.17 504.33 L1066.29 502.70 L1068.40 501.07 L1070.50 499.44 L1072.59 497.82 L1074.66 496.19 L1076.72 494.56 L1078.77 492.93 L1080.80 491.30 L1082.82 489.67 L1084.83 488.04 L1086.82 486.41 L1088.80 484.78 L1090.76 483.15 L1092.71 481.52 L1094.64 479.89 L1096.57 478.26 L1098.47 476.63 L1100.36 475.00 L1102.24 473.37 L1104.10 471.74 L1105.94 470.11 L1107.77 468.48 L1109.59 466.86 L1111.39 465.23 L1113.17 463.60 L1114.94 461.97 L1116.69 460.34 L1118.42 458.71 L1120.14 457.08 L1121.84 455.45 L1123.52 453.82 L1125.19 452.19 L1126.84 450.56 L1128.47 448.93 L1130.09 447.30 L1131.69 445.67 L1133.27 444.04 L1134.83 442.41 L1136.38 440.78 L1137.91 439.15 L1139.42 437.52 L1140.91 435.89 L1142.39 434.26 L1143.84 432.64 L1145.28 431.01 L1146.70 429.38 L1148.10 427.75 L1149.48 426.12 L1150.84 424.49 L1152.19 422.86 L1153.51 421.23 L1154.82 419.60 L1156.11 417.97 L1157.37 416.34 L1158.62 414.71 L1159.85 413.08 L1161.06 411.45 L1162.25 409.82 L1163.42 408.19 L1164.57 406.56 L1165.70 404.93 L1166.81 403.30 L1167.90 401.67 L1168.97 400.05 L1170.02 398.42 L1171.05 396.79 L1172.05 395.16 L1173.04 393.53 L1174.01 391.90 L1174.96 390.27 L1175.88 388.64 L1176.79 387.01 L1177.67 385.38 L1178.53 383.75 L1179.38 382.12 L1180.20 380.49 L1181.00 378.86 L1181.78 377.23 L1182.53 375.60 L1183.27 373.97 L1183.99 372.34 L1184.68 370.71 L1185.35 369.08 L1186.00 367.46 L1186.63 365.83 L1187.24 364.20 L1187.82 362.57 L1188.39 360.94 L1188.93 359.31 L1189.45 357.68 L1189.95 356.05 L1190.42 354.42 L1190.88 352.79 L1191.31 351.16 L1191.72 349.53 L1192.11 347.90 L1192.48 346.27 L1192.82 344.64 L1193.14 343.01 L1193.44 341.38 L1193.72 339.75 L1193.98 338.12 L1194.21 336.50 L1194.42 334.87 L1194.61 333.24 L1194.78 331.61 L1194.92 329.98 L1195.05 328.35 L1195.15 326.72 L1195.22 325.09 L1195.28 323.46 L1195.31 321.83 L1195.33 320.20 L1195.31 318.57 L1195.28 316.94 L1195.22 315.31 L1195.15 313.68 L1195.05 312.05 L1194.92 310.42 L1194.78 308.79 L1194.61 307.16 L1194.42 305.53 L1194.21 303.90 L1193.98 302.28 L1193.72 300.65 L1193.44 299.02 L1193.14 297.39 L1192.82 295.76 L1192.48 294.13 L1192.11 292.50 L1191.72 290.87 L1191.31 289.24 L1190.88 287.61 L1190.42 285.98 L1189.95 284.35 L1189.45 282.72 L1188.93 281.09 L1188.39 279.46 L1187.82 277.83 L1187.24 276.20 L1186.63 274.57 L1186.00 272.94 L1185.35 271.31 L1184.68 269.69 L1183.99 268.06 L1183.27 266.43 L1182.53 264.80 L1181.78 263.17 L1181.00 261.54 L1180.20 259.91 L1179.38 258.28 L1178.53 256.65 L1177.67 255.02 L1176.79 253.39 L1175.88 251.76 L1174.96 250.13 L1174.01 248.50 L1173.04 246.87 L1172.05 245.24 L1171.05 243.61 L1170.02 241.98 L1168.97 240.35 L1167.90 238.72 L1166.81 237.10 L1165.70 235.47 L1164.57 233.84 L1163.42 232.21 L1162.25 230.58 L1161.06 228.95 L1159.85 227.32 L1158.62 225.69 L1157.37 224.06 L1156.11 222.43 L1154.82 220.80 L1153.51 219.17 L1152.19 217.54 L1150.84 215.91 L1149.48 214.28 L1148.10 212.65 L1146.70 211.02 L1145.28 209.39 L1143.84 207.76 L1142.39 206.13 L1140.91 204.51 L1139.42 202.88 L1137.91 201.25 L1136.38 199.62 L1134.83 197.99 L1133.27 196.36 L1131.69 194.73 L1130.09 193.10 L1128.47 191.47 L1126.84 189.84 L1125.19 188.21 L1123.52 186.58 L1121.84 184.95 L1120.14 183.32 L1118.42 181.69 L1116.69 180.06 L1114.94 178.43 L1113.17 176.80 L1111.39 175.17 L1109.59 173.54 L1107.77 171.92 L1105.94 170.29 L1104.10 168.66 L1102.24 167.03 L1100.36 165.40 L1098.47 163.77 L1096.57 162.14 L1094.64 160.51 L1092.71 158.88 L1090.76 157.25 L1088.80 155.62 L1086.82 153.99 L1084.83 152.36 L1082.82 150.73 L1080.80 149.10 L1078.77 147.47 L1076.72 145.84 L1074.66 144.21 L1072.59 142.58 L1070.50 140.95 L1068.40 139.33 L1066.29 137.70 L1064.17 136.07 L1062.03 134.44 L1059.88 132.81 L1057.72 131.18 L1055.55 129.55 L1053.36 127.92 L1051.17 126.29 L1048.96 124.66 L1046.74 123.03 L1044.52 121.40 L1042.28 119.77 L1040.03 118.14 L1037.77 116.51 L1035.49 114.88 L1033.21 113.25 L1030.92 111.62 L1028.62 109.99 L1026.31 108.37 L1023.99 106.74 L1021.66 105.11 L1019.32 103.48 L1016.98 101.85 L1014.62 100.22 L1012.26 98.59 L1009.88 96.96 L1007.50 95.33 L1005.11 93.70 L1002.72 92.07 L1000.31 90.44 L997.90 88.81 L995.48 87.18 L993.06 85.55 L990.62 83.92 L988.18 82.29 L985.74 80.66 L983.29 79.03 L980.83 77.40 L978.36 75.78 L975.89 74.15 L973.42 72.52 L970.94 70.89 L968.45 69.26 L965.96 67.63 L963.46 66.00 L960.96 64.37 L958.45 62.74 L955.94 61.11 L953.43 59.48 L950.91 57.85 L948.39 56.22 L945.87 54.59 L943.34 52.96 L940.81 51.33 L938.27 49.70 L935.74 48.07 L933.20 46.44 L930.66 44.81 L928.11 43.19 L925.57 41.56 L923.02 39.93 L920.47 38.30 L917.92 36.67 L915.37 35.04 L912.82 33.41 L910.26 31.78 L907.71 30.15 L905.15 28.52 L902.60 26.89"/>
<path d="M902.60 613.51 L904.73 611.88 L906.86 610.25 L908.99 608.62 L911.11 606.99 L913.24 605.36 L915.37 603.73 L917.49 602.10 L919.62 600.47 L921.74 598.84 L923.86 597.21 L925.98 595.59 L928.10 593.96 L930.21 592.33 L932.33 590.70 L934.44 589.07 L936.55 587.44 L938.66 585.81 L940.76 584.18 L942.86 582.55 L944.96 580.92 L947.05 579.29 L949.15 577.66 L951.23 576.03 L953.32 574.40 L955.40 572.77 L957.47 571.14 L959.55 569.51 L961.61 567.88 L963.68 566.25 L965.74 564.62 L967.79 563.00 L969.84 561.37 L971.88 559.74 L973.92 558.11 L975.95 556.48 L977.98 554.85 L980.00 553.22 L982.02 551.59 L984.03 549.96 L986.03 548.33 L988.03 546.70 L990.02 545.07 L992.00 543.44 L993.98 541.81 L995.95 540.18 L997.91 538.55 L999.87 536.92 L1001.82 535.29 L1003.76 533.66 L1005.69 532.03 L1007.62 530.41 L1009.54 528.78 L1011.44 527.15 L1013.35 525.52 L1015.24 523.89 L1017.12 522.26 L1019.00 520.63 L1020.86 519.00 L1022.72 517.37 L1024.57 515.74 L1026.41 514.11 L1028.24 512.48 L1030.06 510.85 L1031.87 509.22 L1033.67 507.59 L1035.46 505.96 L1037.24 504.33 L1039.01 502.70 L1040.77 501.07 L1042.52 499.44 L1044.26 497.82 L1045.98 496.19 L1047.70 494.56 L1049.41 492.93 L1051.10 491.30 L1052.78 489.67 L1054.45 488.04 L1056.11 486.41 L1057.76 484.78 L1059.40 483.15 L1061.02 481.52 L1062.64 479.89 L1064.24 478.26 L1065.83 476.63 L1067.40 475.00 L1068.96 473.37 L1070.52 471.74 L1072.05 470.11 L1073.58 468.48 L1075.09 466.86 L1076.59 465.23 L1078.07 463.60 L1079.55 461.97 L1081.00 460.34 L1082.45 458.71 L1083.88 457.08 L1085.30 455.45 L1086.70 453.82 L1088.09 452.19 L1089.47 450.56 L1090.83 448.93 L1092.18 447.30 L1093.51 445.67 L1094.83 444.04 L1096.13 442.41 L1097.42 440.78 L1098.69 439.15 L1099.95 437.52 L1101.19 435.89 L1102.42 434.26 L1103.64 432.64 L1104.83 431.01 L1106.02 429.38 L1107.18 427.75 L1108.33 426.12 L1109.47 424.49 L1110.59 422.86 L1111.70 421.23 L1112.78 419.60 L1113.86 417.97 L1114.91 416.34 L1115.95 414.71 L1116.98 413.08 L1117.98 411.45 L1118.98 409.82 L1119.95 408.19 L1120.91 406.56 L1121.85 404.93 L1122.77 403.30 L1123.68 401.67 L1124.57 400.05 L1125.45 398.42 L1126.31 396.79 L1127.15 395.16 L1127.97 393.53 L1128.77 391.90 L1129.56 390.27 L1130.34 388.64 L1131.09 387.01 L1131.83 385.38 L1132.55 383.75 L1133.25 382.12 L1133.93 380.49 L1134.60 378.86 L1135.25 377.23 L1135.88 375.60 L1136.49 373.97 L1137.09 372.34 L1137.67 370.71 L1138.23 369.08 L1138.77 367.46 L1139.29 365.83 L1139.80 364.20 L1140.29 362.57 L1140.76 360.94 L1141.21 359.31 L1141.64 357.68 L1142.06 356.05 L1142.45 354.42 L1142.83 352.79 L1143.19 351.16 L1143.53 349.53 L1143.86 347.90 L1144.16 346.27 L1144.45 344.64 L1144.72 343.01 L1144.97 341.38 L1145.20 339.75 L1145.41 338.12 L1145.61 336.50 L1145.79 334.87 L1145.94 333.24 L1146.08 331.61 L1146.20 329.98 L1146.31 328.35 L1146.39 326.72 L1146.45 325.09 L1146.50 323.46 L1146.53 321.83 L1146.54 320.20 L1146.53 318.57 L1146.50 316.94 L1146.45 315.31 L1146.39 313.68 L1146.31 312.05 L1146.20 310.42 L1146.08 308.79 L1145.94 307.16 L1145.79 305.53 L1145.61 303.90 L1145.41 302.28 L1145.20 300.65 L1144.97 299.02 L1144.72 297.39 L1144.45 295.76 L1144.16 294.13 L1143.86 292.50 L1143.53 290.87 L1143.19 289.24 L1142.83 287.61 L1142.45 285.98 L1142.06 284.35 L1141.64 282.72 L1141.21 281.09 L1140.76 279.46 L1140.29 277.83 L1139.80 276.20 L1139.29 274.57 L1138.77 272.94 L1138.23 271.31 L1137.67 269.69 L1137.09 268.06 L1136.49 266.43 L1135.88 264.80 L1135.25 263.17 L1134.60 261.54 L1133.93 259.91 L1133.25 258.28 L1132.55 256.65 L1131.83 255.02 L1131.09 253.39 L1130.34 251.76 L1129.56 250.13 L1128.77 248.50 L1127.97 246.87 L1127.15 245.24 L1126.31 243.61 L1125.45 241.98 L1124.57 240.35 L1123.68 238.72 L1122.77 237.10 L1121.85 235.47 L1120.91 233.84 L1119.95 232.21 L1118.98 230.58 L1117.98 228.95 L1116.98 227.32 L1115.95 225.69 L1114.91 224.06 L1113.86 222.43 L1112.78 220.80 L1111.70 219.17 L1110.59 217.54 L1109.47 215.91 L1108.33 214.28 L1107.18 212.65 L1106.02 211.02 L1104.83 209.39 L1103.64 207.76 L1102.42 206.13 L1101.19 204.51 L1099.95 202.88 L1098.69 201.25 L1097.42 199.62 L1096.13 197.99 L1094.83 196.36 L1093.51 194.73 L1092.18 193.10 L1090.83 191.47 L1089.47 189.84 L1088.09 188.21 L1086.70 186.58 L1085.30 184.95 L1083.88 183.32 L1082.45 181.69 L1081.00 180.06 L1079.55 178.43 L1078.07 176.80 L1076.59 175.17 L1075.09 173.54 L1073.58 171.92 L1072.05 170.29 L1070.52 168.66 L1068.96 167.03 L1067.40 165.40 L1065.83 163.77 L1064.24 162.14 L1062.64 160.51 L1061.02 158.88 L1059.40 157.25 L1057.76 155.62 L1056.11 153.99 L1054.45 152.36 L1052.78 150.73 L1051.10 149.10 L1049.41 147.47 L1047.70 145.84 L1045.98 144.21 L1044.26 142.58 L1042.52 140.95 L1040.77 139.33 L1039.01 137.70 L1037.24 136.07 L1035.46 134.44 L1033.67 132.81 L1031.87 131.18 L1030.06 129.55 L1028.24 127.92 L1026.41 126.29 L1024.57 124.66 L1022.72 123.03 L1020.86 121.40 L1019.00 119.77 L1017.12 118.14 L1015.24 116.51 L1013.35 114.88 L1011.44 113.25 L1009.54 111.62 L1007.62 109.99 L1005.69 108.37 L1003.76 106.74 L1001.82 105.11 L999.87 103.48 L997.91 101.85 L995.95 100.22 L993.98 98.59 L992.00 96.96 L990.02 95.33 L988.03 93.70 L986.03 92.07 L984.03 90.44 L982.02 88.81 L980.00 87.18 L977.98 85.55 L975.95 83.92 L973.92 82.29 L971.88 80.66 L969.84 79.03 L967.79 77.40 L965.74 75.78 L963.68 74.15 L961.61 72.52 L959.55 70.89 L957.47 69.26 L955.40 67.63 L953.32 66.00 L951.23 64.37 L949.15 62.74 L947.05 61.11 L944.96 59.48 L942.86 57.85 L940.76 56.22 L938.66 54.59 L936.55 52.96 L934.44 51.33 L932.33 49.70 L930.21 48.07 L928.10 46.44 L925.98 44.81 L923.86 43.19 L921.74 41.56 L919.62 39.93 L917.49 38.30 L915.37 36.67 L913.24 35.04 L911.11 33.41 L908.99 31.78 L906.86 30.15 L904.73 28.52 L902.60 26.89"/>
<path d="M902.60 613.51 L904.30 611.88 L906.01 610.25 L907.71 608.62 L909.41 606.99 L911.11 605.36 L912.81 603.73 L914.51 602.10 L916.21 600.47 L917.91 598.84 L919.61 597.21 L921.30 595.59 L923.00 593.96 L924.69 592.33 L926.38 590.70 L928.07 589.07 L929.76 587.44 L931.45 585.81 L933.13 584.18 L934.81 582.55 L936.49 580.92 L938.16 579.29 L939.84 577.66 L941.51 576.03 L943.17 574.40 L944.84 572.77 L946.50 571.14 L948.16 569.51 L949.81 567.88 L951.46 566.25 L953.11 564.62 L954.75 563.00 L956.39 561.37 L958.03 559.74 L959.66 558.11 L961.28 556.48 L962.90 554.85 L964.52 553.22 L966.13 551.59 L967.74 549.96 L969.35 548.33 L970.94 546.70 L972.54 545.07 L974.12 543.44 L975.70 541.81 L977.28 540.18 L978.85 538.55 L980.42 536.92 L981.97 535.29 L983.53 533.66 L985.07 532.03 L986.61 530.41 L988.15 528.78 L989.68 527.15 L991.20 525.52 L992.71 523.89 L994.22 522.26 L995.72 520.63 L997.21 519.00 L998.70 517.37 L1000.18 515.74 L1001.65 514.11 L1003.11 512.48 L1004.57 510.85 L1006.01 509.22 L1007.45 507.59 L1008.89 505.96 L1010.31 504.33 L1011.73 502.70 L1013.13 501.07 L1014.53 499.44 L1015.92 497.82 L1017.31 496.19 L1018.68 494.56 L1020.04 492.93 L1021.40 491.30 L1022.75 489.67 L1024.08 488.04 L1025.41 486.41 L1026.73 484.78 L1028.04 483.15 L1029.34 481.52 L1030.63 479.89 L1031.91 478.26 L1033.18 476.63 L1034.44 475.00 L1035.69 473.37 L1036.93 471.74 L1038.16 470.11 L1039.38 468.48 L1040.59 466.86 L1041.79 465.23 L1042.98 463.60 L1044.16 461.97 L1045.32 460.34 L1046.48 458.71 L1047.62 457.08 L1048.76 455.45 L1049.88 453.82 L1050.99 452.19 L1052.09 450.56 L1053.18 448.93 L1054.26 447.30 L1055.33 445.67 L1056.38 444.04 L1057.42 442.41 L1058.45 440.78 L1059.47 439.15 L1060.48 437.52 L1061.47 435.89 L1062.46 434.26 L1063.43 432.64 L1064.39 431.01 L1065.33 429.38 L1066.27 427.75 L1067.19 426.12 L1068.10 424.49 L1068.99 422.86 L1069.88 421.23 L1070.75 419.60 L1071.60 417.97 L1072.45 416.34 L1073.28 414.71 L1074.10 413.08 L1074.91 411.45 L1075.70 409.82 L1076.48 408.19 L1077.25 406.56 L1078.00 404.93 L1078.74 403.30 L1079.47 401.67 L1080.18 400.05 L1080.88 398.42 L1081.56 396.79 L1082.24 395.16 L1082.90 393.53 L1083.54 391.90 L1084.17 390.27 L1084.79 388.64 L1085.39 387.01 L1085.98 385.38 L1086.56 383.75 L1087.12 382.12 L1087.67 380.49 L1088.20 378.86 L1088.72 377.23 L1089.22 375.60 L1089.71 373.97 L1090.19 372.34 L1090.65 370.71 L1091.10 369.08 L1091.53 367.46 L1091.95 365.83 L1092.36 364.20 L1092.75 362.57 L1093.12 360.94 L1093.49 359.31 L1093.83 357.68 L1094.16 356.05 L1094.48 354.42 L1094.79 352.79 L1095.07 351.16 L1095.35 349.53 L1095.61 347.90 L1095.85 346.27 L1096.08 344.64 L1096.30 343.01 L1096.50 341.38 L1096.68 339.75 L1096.85 338.12 L1097.01 336.50 L1097.15 334.87 L1097.27 333.24 L1097.39 331.61 L1097.48 329.98 L1097.56 328.35 L1097.63 326.72 L1097.68 325.09 L1097.72 323.46 L1097.74 321.83 L1097.75 320.20 L1097.74 318.57 L1097.72 316.94 L1097.68 315.31 L1097.63 313.68 L1097.56 312.05 L1097.48 310.42 L1097.39 308.79 L1097.27 307.16 L1097.15 305.53 L1097.01 303.90 L1096.85 302.28 L1096.68 300.65 L1096.50 299.02 L1096.30 297.39 L1096.08 295.76 L1095.85 294.13 L1095.61 292.50 L1095.35 290.87 L1095.07 289.24 L1094.79 287.61 L1094.48 285.98 L1094.16 284.35 L1093.83 282.72 L1093.49 281.09 L1093.12 279.46 L1092.75 277.83 L1092.36 276.20 L1091.95 274.57 L1091.53 272.94 L1091.10 271.31 L1090.65 269.69 L1090.19 268.06 L1089.71 266.43 L1089.22 264.80 L1088.72 263.17 L1088.20 261.54 L1087.67 259.91 L1087.12 258.28 L1086.56 256.65 L1085.98 255.02 L1085.39 253.39 L1084.79 251.76 L1084.17 250.13 L1083.54 248.50 L1082.90 246.87 L1082.24 245.24 L1081.56 243.61 L1080.88 241.98 L1080.18 240.35 L1079.47 238.72 L1078.74 237.10 L1078.00 235.47 L1077.25 233.84 L1076.48 232.21 L1075.70 230.58 L1074.91 228.95 L1074.10 227.32 L1073.28 225.69 L1072.45 224.06 L1071.60 222.43 L1070.75 220.80 L1069.88 219.17 L1068.99 217.54 L1068.10 215.91 L1067.19 214.28 L1066.27 212.65 L1065.33 211.02 L1064.39 209.39 L1063.43 207.76 L1062.46 206.13 L1061.47 204.51 L1060.48 202.88 L1059.47 201.25 L1058.45 199.62 L1057.42 197.99 L1056.38 196.36 L1055.33 194.73 L1054.26 193.10 L1053.18 191.47 L1052.09 189.84 L1050.99 188.21 L1049.88 186.58 L1048.76 184.95 L1047.62 183.32 L1046.48 181.69 L1045.32 180.06 L1044.16 178.43 L1042.98 176.80 L1041.79 175.17 L1040.59 173.54 L1039.38 171.92 L1038.16 170.29 L1036.93 168.66 L1035.69 167.03 L1034.44 165.40 L1033.18 163.77 L1031.91 162.14 L1030.63 160.51 L1029.34 158.88 L1028.04 157.25 L1026.73 155.62 L1025.41 153.99 L1024.08 152.36 L1022.75 150.73 L1021.40 149.10 L1020.04 147.47 L1018.68 145.84 L1017.31 144.21 L1015.92 142.58 L1014.53 140.95 L1013.13 139.33 L1011.73 137.70 L1010.31 136.07 L1008.89 134.44 L1007.45 132.81 L1006.01 131.18 L1004.57 129.55 L1003.11 127.92 L1001.65 126.29 L1000.18 124.66 L998.70 123.03 L997.21 121.40 L995.72 119.77 L994.22 118.14 L992.71 116.51 L991.20 114.88 L989.68 113.25 L988.15 111.62 L986.61 109.99 L985.07 108.37 L983.53 106.74 L981.97 105.11 L980.42 103.48 L978.85 101.85 L977.28 100.22 L975.70 98.59 L974.12 96.96 L972.54 95.33 L970.94 93.70 L969.35 92.07 L967.74 90.44 L966.13 88.81 L964.52 87.18 L962.90 85.55 L961.28 83.92 L959.66 82.29 L958.03 80.66 L956.39 79.03 L954.75 77.40 L953.11 75.78 L951.46 74.15 L949.81 72.52 L948.16 70.89 L946.50 69.26 L944.84 67.63 L943.17 66.00 L941.51 64.37 L939.84 62.74 L938.16 61.11 L936.49 59.48 L934.81 57.85 L933.13 56.22 L931.45 54.59 L929.76 52.96 L928.07 51.33 L926.38 49.70 L924.69 48.07 L923.00 46.44 L921.30 44.81 L919.61 43.19 L917.91 41.56 L916.21 39.93 L914.51 38.30 L912.81 36.67 L911.11 35.04 L909.41 33.41 L907.71 31.78 L906.01 30.15 L904.30 28.52 L902.60 26.89"/>
<path d="M902.60 613.51 L903.88 611.88 L905.15 610.25 L906.43 608.62 L907.71 606.99 L908.98 605.36 L910.26 603.73 L911.54 602.10 L912.81 600.47 L914.08 598.84 L915.36 597.21 L916.63 595.59 L917.90 593.96 L919.17 592.33 L920.44 590.70 L921.70 589.07 L922.97 587.44 L924.23 585.81 L925.50 584.18 L926.76 582.55 L928.02 580.92 L929.27 579.29 L930.53 577.66 L931.78 576.03 L933.03 574.40 L934.28 572.77 L935.52 571.14 L936.77 569.51 L938.01 567.88 L939.25 566.25 L940.48 564.62 L941.71 563.00 L942.94 561.37 L944.17 559.74 L945.39 558.11 L946.61 556.48 L947.83 554.85 L949.04 553.22 L950.25 551.59 L951.46 549.96 L952.66 548.33 L953.86 546.70 L955.05 545.07 L956.24 543.44 L957.43 541.81 L958.61 540.18 L959.79 538.55 L960.96 536.92 L962.13 535.29 L963.30 533.66 L964.46 532.03 L965.61 530.41 L966.76 528.78 L967.91 527.15 L969.05 525.52 L970.18 523.89 L971.31 522.26 L972.44 520.63 L973.56 519.00 L974.67 517.37 L975.78 515.74 L976.88 514.11 L977.98 512.48 L979.07 510.85 L980.16 509.22 L981.24 507.59 L982.31 505.96 L983.38 504.33 L984.44 502.70 L985.50 501.07 L986.55 499.44 L987.59 497.82 L988.63 496.19 L989.66 494.56 L990.68 492.93 L991.70 491.30 L992.71 489.67 L993.71 488.04 L994.71 486.41 L995.70 484.78 L996.68 483.15 L997.65 481.52 L998.62 479.89 L999.58 478.26 L1000.54 476.63 L1001.48 475.00 L1002.42 473.37 L1003.35 471.74 L1004.27 470.11 L1005.19 468.48 L1006.09 466.86 L1006.99 465.23 L1007.88 463.60 L1008.77 461.97 L1009.64 460.34 L1010.51 458.71 L1011.37 457.08 L1012.22 455.45 L1013.06 453.82 L1013.89 452.19 L1014.72 450.56 L1015.54 448.93 L1016.35 447.30 L1017.14 445.67 L1017.94 444.04 L1018.72 442.41 L1019.49 440.78 L1020.25 439.15 L1021.01 437.52 L1021.76 435.89 L1022.49 434.26 L1023.22 432.64 L1023.94 431.01 L1024.65 429.38 L1025.35 427.75 L1026.04 426.12 L1026.72 424.49 L1027.39 422.86 L1028.06 421.23 L1028.71 419.60 L1029.35 417.97 L1029.99 416.34 L1030.61 414.71 L1031.23 413.08 L1031.83 411.45 L1032.43 409.82 L1033.01 408.19 L1033.58 406.56 L1034.15 404.93 L1034.70 403.30 L1035.25 401.67 L1035.78 400.05 L1036.31 398.42 L1036.82 396.79 L1037.33 395.16 L1037.82 393.53 L1038.30 391.90 L1038.78 390.27 L1039.24 388.64 L1039.69 387.01 L1040.14 385.38 L1040.57 383.75 L1040.99 382.12 L1041.40 380.49 L1041.80 378.86 L1042.19 377.23 L1042.57 375.60 L1042.94 373.97 L1043.29 372.34 L1043.64 370.71 L1043.98 369.08 L1044.30 367.46 L1044.61 365.83 L1044.92 364.20 L1045.21 362.57 L1045.49 360.94 L1045.76 359.31 L1046.02 357.68 L1046.27 356.05 L1046.51 354.42 L1046.74 352.79 L1046.96 351.16 L1047.16 349.53 L1047.35 347.90 L1047.54 346.27 L1047.71 344.64 L1047.87 343.01 L1048.02 341.38 L1048.16 339.75 L1048.29 338.12 L1048.41 336.50 L1048.51 334.87 L1048.61 333.24 L1048.69 331.61 L1048.76 329.98 L1048.82 328.35 L1048.87 326.72 L1048.91 325.09 L1048.94 323.46 L1048.96 321.83 L1048.96 320.20 L1048.96 318.57 L1048.94 316.94 L1048.91 315.31 L1048.87 313.68 L1048.82 312.05 L1048.76 310.42 L1048.69 308.79 L1048.61 307.16 L1048.51 305.53 L1048.41 303.90 L1048.29 302.28 L1048.16 300.65 L1048.02 299.02 L1047.87 297.39 L1047.71 295.76 L1047.54 294.13 L1047.35 292.50 L1047.16 290.87 L1046.96 289.24 L1046.74 287.61 L1046.51 285.98 L1046.27 284.35 L1046.02 282.72 L1045.76 281.09 L1045.49 279.46 L1045.21 277.83 L1044.92 276.20 L1044.61 274.57 L1044.30 272.94 L1043.98 271.31 L1043.64 269.69 L1043.29 268.06 L1042.94 266.43 L1042.57 264.80 L1042.19 263.17 L1041.80 261.54 L1041.40 259.91 L1040.99 258.28 L1040.57 256.65 L1040.14 255.02 L1039.69 253.39 L1039.24 251.76 L1038.78 250.13 L1038.30 248.50 L1037.82 246.87 L1037.33 245.24 L1036.82 243.61 L1036.31 241.98 L1035.78 240.35 L1035.25 238.72 L1034.70 237.10 L1034.15 235.47 L1033.58 233.84 L1033.01 232.21 L1032.43 230.58 L1031.83 228.95 L1031.23 227.32 L1030.61 225.69 L1029.99 224.06 L1029.35 222.43 L1028.71 220.80 L1028.06 219.17 L1027.39 217.54 L1026.72 215.91 L1026.04 214.28 L1025.35 212.65 L1024.65 211.02 L1023.94 209.39 L1023.22 207.76 L1022.49 206.13 L1021.76 204.51 L1021.01 202.88 L1020.25 201.25 L1019.49 199.62 L1018.72 197.99 L1017.94 196.36 L1017.14 194.73 L1016.35 193.10 L1015.54 191.47 L1014.72 189.84 L1013.89 188.21 L1013.06 186.58 L1012.22 184.95 L1011.37 183.32 L1010.51 181.69 L1009.64 180.06 L1008.77 178.43 L1007.88 176.80 L1006.99 175.17 L1006.09 173.54 L1005.19 171.92 L1004.27 170.29 L1003.35 168.66 L1002.42 167.03 L1001.48 165.40 L1000.54 163.77 L999.58 162.14 L998.62 160.51 L997.65 158.88 L996.68 157.25 L995.70 155.62 L994.71 153.99 L993.71 152.36 L992.71 150.73 L991.70 149.10 L990.68 147.47 L989.66 145.84 L988.63 144.21 L987.59 142.58 L986.55 140.95 L985.50 139.33 L984.44 137.70 L983.38 136.07 L982.31 134.44 L981.24 132.81 L980.16 131.18 L979.07 129.55 L977.98 127.92 L976.88 126.29 L975.78 124.66 L974.67 123.03 L973.56 121.40 L972.44 119.77 L971.31 118.14 L970.18 116.51 L969.05 114.88 L967.91 113.25 L966.76 111.62 L965.61 109.99 L964.46 108.37 L963.30 106.74 L962.13 105.11 L960.96 103.48 L959.79 101.85 L958.61 100.22 L957.43 98.59 L956.24 96.96 L955.05 95.33 L953.86 93.70 L952.66 92.07 L951.46 90.44 L950.25 88.81 L949.04 87.18 L947.83 85.55 L946.61 83.92 L945.39 82.29 L944.17 80.66 L942.94 79.03 L941.71 77.40 L940.48 75.78 L939.25 74.15 L938.01 72.52 L936.77 70.89 L935.52 69.26 L934.28 67.63 L933.03 66.00 L931.78 64.37 L930.53 62.74 L929.27 61.11 L928.02 59.48 L926.76 57.85 L925.50 56.22 L924.23 54.59 L922.97 52.96 L921.70 51.33 L920.44 49.70 L919.17 48.07 L917.90 46.44 L916.63 44.81 L915.36 43.19 L914.08 41.56 L912.81 39.93 L911.54 38.30 L910.26 36.67 L908.98 35.04 L907.71 33.41 L906.43 31.78 L905.15 30.15 L903.88 28.52 L902.60 26.89"/>
<path d="M902.60 613.51 L903.45 611.88 L904.30 610.25 L905.15 608.62 L906.01 606.99 L906.86 605.36 L907.71 603.73 L908.56 602.10 L909.41 600.47 L910.26 598.84 L911.10 597.21 L911.95 595.59 L912.80 593.96 L913.65 592.33 L914.49 590.70 L915.34 589.07 L916.18 587.44 L917.02 585.81 L917.86 584.18 L918.70 582.55 L919.54 580.92 L920.38 579.29 L921.22 577.66 L922.05 576.03 L922.89 574.40 L923.72 572.77 L924.55 571.14 L925.38 569.51 L926.21 567.88 L927.03 566.25 L927.85 564.62 L928.68 563.00 L929.50 561.37 L930.31 559.74 L931.13 558.11 L931.94 556.48 L932.75 554.85 L933.56 553.22 L934.37 551.59 L935.17 549.96 L935.97 548.33 L936.77 546.70 L937.57 545.07 L938.36 543.44 L939.15 541.81 L939.94 540.18 L940.73 538.55 L941.51 536.92 L942.29 535.29 L943.06 533.66 L943.84 532.03 L944.61 530.41 L945.37 528.78 L946.14 527.15 L946.90 525.52 L947.66 523.89 L948.41 522.26 L949.16 520.63 L949.91 519.00 L950.65 517.37 L951.39 515.74 L952.12 514.11 L952.85 512.48 L953.58 510.85 L954.31 509.22 L955.03 507.59 L955.74 505.96 L956.46 504.33 L957.16 502.70 L957.87 501.07 L958.57 499.44 L959.26 497.82 L959.95 496.19 L960.64 494.56 L961.32 492.93 L962.00 491.30 L962.67 489.67 L963.34 488.04 L964.01 486.41 L964.67 484.78 L965.32 483.15 L965.97 481.52 L966.61 479.89 L967.26 478.26 L967.89 476.63 L968.52 475.00 L969.15 473.37 L969.77 471.74 L970.38 470.11 L970.99 468.48 L971.60 466.86 L972.20 465.23 L972.79 463.60 L973.38 461.97 L973.96 460.34 L974.54 458.71 L975.11 457.08 L975.68 455.45 L976.24 453.82 L976.80 452.19 L977.35 450.56 L977.89 448.93 L978.43 447.30 L978.96 445.67 L979.49 444.04 L980.01 442.41 L980.53 440.78 L981.04 439.15 L981.54 437.52 L982.04 435.89 L982.53 434.26 L983.01 432.64 L983.49 431.01 L983.97 429.38 L984.43 427.75 L984.89 426.12 L985.35 424.49 L985.80 422.86 L986.24 421.23 L986.67 419.60 L987.10 417.97 L987.52 416.34 L987.94 414.71 L988.35 413.08 L988.75 411.45 L989.15 409.82 L989.54 408.19 L989.92 406.56 L990.30 404.93 L990.67 403.30 L991.03 401.67 L991.39 400.05 L991.74 398.42 L992.08 396.79 L992.42 395.16 L992.75 393.53 L993.07 391.90 L993.39 390.27 L993.69 388.64 L994.00 387.01 L994.29 385.38 L994.58 383.75 L994.86 382.12 L995.13 380.49 L995.40 378.86 L995.66 377.23 L995.91 375.60 L996.16 373.97 L996.40 372.34 L996.63 370.71 L996.85 369.08 L997.07 367.46 L997.28 365.83 L997.48 364.20 L997.67 362.57 L997.86 360.94 L998.04 359.31 L998.22 357.68 L998.38 356.05 L998.54 354.42 L998.69 352.79 L998.84 351.16 L998.97 349.53 L999.10 347.90 L999.23 346.27 L999.34 344.64 L999.45 343.01 L999.55 341.38 L999.64 339.75 L999.73 338.12 L999.80 336.50 L999.87 334.87 L999.94 333.24 L999.99 331.61 L1000.04 329.98 L1000.08 328.35 L1000.12 326.72 L1000.14 325.09 L1000.16 323.46 L1000.17 321.83 L1000.18 320.20 L1000.17 318.57 L1000.16 316.94 L1000.14 315.31 L1000.12 313.68 L1000.08 312.05 L1000.04 310.42 L999.99 308.79 L999.94 307.16 L999.87 305.53 L999.80 303.90 L999.73 302.28 L999.64 300.65 L999.55 299.02 L999.45 297.39 L999.34 295.76 L999.23 294.13 L999.10 292.50 L998.97 290.87 L998.84 289.24 L998.69 287.61 L998.54 285.98 L998.38 284.35 L998.22 282.72 L998.04 281.09 L997.86 279.46 L997.67 277.83 L997.48 276.20 L997.28 274.57 L997.07 272.94 L996.85 271.31 L996.63 269.69 L996.40 268.06 L996.16 266.43 L995.91 264.80 L995.66 263.17 L995.40 261.54 L995.13 259.91 L994.86 258.28 L994.58 256.65 L994.29 255.02 L994.00 253.39 L993.69 251.76 L993.39 250.13 L993.07 248.50 L992.75 246.87 L992.42 245.24 L992.08 243.61 L991.74 241.98 L991.39 240.35 L991.03 238.72 L990.67 237.10 L990.30 235.47 L989.92 233.84 L989.54 232.21 L989.15 230.58 L988.75 228.95 L988.35 227.32 L987.94 225.69 L987.52 224.06 L987.10 222.43 L986.67 220.80 L986.24 219.17 L985.80 217.54 L985.35 215.91 L984.89 214.28 L984.43 212.65 L983.97 211.02 L983.49 209.39 L983.01 207.76 L982.53 206.13 L982.04 204.51 L981.54 202.88 L981.04 201.25 L980.53 199.62 L980.01 197.99 L979.49 196.36 L978.96 194.73 L978.43 193.10 L977.89 191.47 L977.35 189.84 L976.80 188.21 L976.24 186.58 L975.68 184.95 L975.11 183.32 L974.54 181.69 L973.96 180.06 L973.38 178.43 L972.79 176.80 L972.20 175.17 L971.60 173.54 L970.99 171.92 L970.38 170.29 L969.77 168.66 L969.15 167.03 L968.52 165.40 L967.89 163.77 L967.26 162.14 L966.61 160.51 L965.97 158.88 L965.32 157.25 L964.67 155.62 L964.01 153.99 L963.34 152.36 L962.67 150.73 L962.00 149.10 L961.32 147.47 L960.64 145.84 L959.95 144.21 L959.26 142.58 L958.57 140.95 L957.87 139.33 L957.16 137.70 L956.46 136.07 L955.74 134.44 L955.03 132.81 L954.31 131.18 L953.58 129.55 L952.85 127.92 L952.12 126.29 L951.39 124.66 L950.65 123.03 L949.91 121.40 L949.16 119.77 L948.41 118.14 L947.66 116.51 L946.90 114.88 L946.14 113.25 L945.37 111.62 L944.61 109.99 L943.84 108.37 L943.06 106.74 L942.29 105.11 L941.51 103.48 L940.73 101.85 L939.94 100.22 L939.15 98.59 L938.36 96.96 L937.57 95.33 L936.77 93.70 L935.97 92.07 L935.17 90.44 L934.37 88.81 L933.56 87.18 L932.75 85.55 L931.94 83.92 L931.13 82.29 L930.31 80.66 L929.50 79.03 L928.68 77.40 L927.85 75.78 L927.03 74.15 L926.21 72.52 L925.38 70.89 L924.55 69.26 L923.72 67.63 L922.89 66.00 L922.05 64.37 L921.22 62.74 L920.38 61.11 L919.54 59.48 L918.70 57.85 L917.86 56.22 L917.02 54.59 L916.18 52.96 L915.34 51.33 L914.49 49.70 L913.65 48.07 L912.80 46.44 L911.95 44.81 L911.10 43.19 L910.26 41.56 L909.41 39.93 L908.56 38.30 L907.71 36.67 L906.86 35.04 L906.01 33.41 L905.15 31.78 L904.30 30.15 L903.45 28.52 L902.60 26.89"/>
<path d="M902.60 613.51 L903.03 611.88 L903.45 610.25 L903.88 608.62 L904.30 606.99 L904.73 605.36 L905.15 603.73 L905.58 602.10 L906.00 600.47 L906.43 598.84 L906.85 597.21 L907.28 595.59 L907.70 593.96 L908.12 592.33 L908.55 590.70 L908.97 589.07 L909.39 587.44 L909.81 585.81 L910.23 584.18 L910.65 582.55 L911.07 580.92 L911.49 579.29 L911.91 577.66 L912.33 576.03 L912.74 574.40 L913.16 572.77 L913.57 571.14 L913.99 569.51 L914.40 567.88 L914.82 566.25 L915.23 564.62 L915.64 563.00 L916.05 561.37 L916.46 559.74 L916.86 558.11 L917.27 556.48 L917.68 554.85 L918.08 553.22 L918.48 551.59 L918.89 549.96 L919.29 548.33 L919.69 546.70 L920.08 545.07 L920.48 543.44 L920.88 541.81 L921.27 540.18 L921.66 538.55 L922.05 536.92 L922.44 535.29 L922.83 533.66 L923.22 532.03 L923.60 530.41 L923.99 528.78 L924.37 527.15 L924.75 525.52 L925.13 523.89 L925.50 522.26 L925.88 520.63 L926.25 519.00 L926.62 517.37 L926.99 515.74 L927.36 514.11 L927.73 512.48 L928.09 510.85 L928.45 509.22 L928.81 507.59 L929.17 505.96 L929.53 504.33 L929.88 502.70 L930.23 501.07 L930.58 499.44 L930.93 497.82 L931.28 496.19 L931.62 494.56 L931.96 492.93 L932.30 491.30 L932.64 489.67 L932.97 488.04 L933.30 486.41 L933.63 484.78 L933.96 483.15 L934.28 481.52 L934.61 479.89 L934.93 478.26 L935.25 476.63 L935.56 475.00 L935.87 473.37 L936.18 471.74 L936.49 470.11 L936.80 468.48 L937.10 466.86 L937.40 465.23 L937.69 463.60 L937.99 461.97 L938.28 460.34 L938.57 458.71 L938.86 457.08 L939.14 455.45 L939.42 453.82 L939.70 452.19 L939.97 450.56 L940.25 448.93 L940.52 447.30 L940.78 445.67 L941.05 444.04 L941.31 442.41 L941.56 440.78 L941.82 439.15 L942.07 437.52 L942.32 435.89 L942.56 434.26 L942.81 432.64 L943.05 431.01 L943.28 429.38 L943.52 427.75 L943.75 426.12 L943.97 424.49 L944.20 422.86 L944.42 421.23 L944.64 419.60 L944.85 417.97 L945.06 416.34 L945.27 414.71 L945.48 413.08 L945.68 411.45 L945.88 409.82 L946.07 408.19 L946.26 406.56 L946.45 404.93 L946.63 403.30 L946.82 401.67 L946.99 400.05 L947.17 398.42 L947.34 396.79 L947.51 395.16 L947.67 393.53 L947.83 391.90 L947.99 390.27 L948.15 388.64 L948.30 387.01 L948.45 385.38 L948.59 383.75 L948.73 382.12 L948.87 380.49 L949.00 378.86 L949.13 377.23 L949.26 375.60 L949.38 373.97 L949.50 372.34 L949.61 370.71 L949.73 369.08 L949.83 367.46 L949.94 365.83 L950.04 364.20 L950.14 362.57 L950.23 360.94 L950.32 359.31 L950.41 357.68 L950.49 356.05 L950.57 354.42 L950.65 352.79 L950.72 351.16 L950.79 349.53 L950.85 347.90 L950.91 346.27 L950.97 344.64 L951.02 343.01 L951.07 341.38 L951.12 339.75 L951.16 338.12 L951.20 336.50 L951.24 334.87 L951.27 333.24 L951.30 331.61 L951.32 329.98 L951.34 328.35 L951.36 326.72 L951.37 325.09 L951.38 323.46 L951.39 321.83 L951.39 320.20 L951.39 318.57 L951.38 316.94 L951.37 315.31 L951.36 313.68 L951.34 312.05 L951.32 310.42 L951.30 308.79 L951.27 307.16 L951.24 305.53 L951.20 303.90 L951.16 302.28 L951.12 300.65 L951.07 299.02 L951.02 297.39 L950.97 295.76 L950.91 294.13 L950.85 292.50 L950.79 290.87 L950.72 289.24 L950.65 287.61 L950.57 285.98 L950.49 284.35 L950.41 282.72 L950.32 281.09 L950.23 279.46 L950.14 277.83 L950.04 276.20 L949.94 274.57 L949.83 272.94 L949.73 271.31 L949.61 269.69 L949.50 268.06 L949.38 266.43 L949.26 264.80 L949.13 263.17 L949.00 261.54 L948.87 259.91 L948.73 258.28 L948.59 256.65 L948.45 255.02 L948.30 253.39 L948.15 251.76 L947.99 250.13 L947.83 248.50 L947.67 246.87 L947.51 245.24 L947.34 243.61 L947.17 241.98 L946.99 240.35 L946.82 238.72 L946.63 237.10 L946.45 235.47 L946.26 233.84 L946.07 232.21 L945.88 230.58 L945.68 228.95 L945.48 227.32 L945.27 225.69 L945.06 224.06 L944.85 222.43 L944.64 220.80 L944.42 219.17 L944.20 217.54 L943.97 215.91 L943.75 214.28 L943.52 212.65 L943.28 211.02 L943.05 209.39 L942.81 207.76 L942.56 206.13 L942.32 204.51 L942.07 202.88 L941.82 201.25 L941.56 199.62 L941.31 197.99 L941.05 196.36 L940.78 194.73 L940.52 193.10 L940.25 191.47 L939.97 189.84 L939.70 188.21 L939.42 186.58 L939.14 184.95 L938.86 183.32 L938.57 181.69 L938.28 180.06 L937.99 178.43 L937.69 176.80 L937.40 175.17 L937.10 173.54 L936.80 171.92 L936.49 170.29 L936.18 168.66 L935.87 167.03 L935.56 165.40 L935.25 163.77 L934.93 162.14 L934.61 160.51 L934.28 158.88 L933.96 157.25 L933.63 155.62 L933.30 153.99 L932.97 152.36 L932.64 150.73 L932.30 149.10 L931.96 147.47 L931.62 145.84 L931.28 144.21 L930.93 142.58 L930.58 140.95 L930.23 139.33 L929.88 137.70 L929.53 136.07 L929.17 134.44 L928.81 132.81 L928.45 131.18 L928.09 129.55 L927.73 127.92 L927.36 126.29 L926.99 124.66 L926.62 123.03 L926.25 121.40 L925.88 119.77 L925.50 118.14 L925.13 116.51 L924.75 114.88 L924.37 113.25 L923.99 111.62 L923.60 109.99 L923.22 108.37 L922.83 106.74 L922.44 105.11 L922.05 103.48 L921.66 101.85 L921.27 100.22 L920.88 98.59 L920.48 96.96 L920.08 95.33 L919.69 93.70 L919.29 92.07 L918.89 90.44 L918.48 88.81 L918.08 87.18 L917.68 85.55 L917.27 83.92 L916.86 82.29 L916.46 80.66 L916.05 79.03 L915.64 77.40 L915.23 75.78 L914.82 74.15 L914.40 72.52 L913.99 70.89 L913.57 69.26 L913.16 67.63 L912.74 66.00 L912.33 64.37 L911.91 62.74 L911.49 61.11 L911.07 59.48 L910.65 57.85 L910.23 56.22 L909.81 54.59 L909.39 52.96 L908.97 51.33 L908.55 49.70 L908.12 48.07 L907.70 46.44 L907.28 44.81 L906.85 43.19 L906.43 41.56 L906.00 39.93 L905.58 38.30 L905.15 36.67 L904.73 35.04 L904.30 33.41 L903.88 31.78 L903.45 30.15 L903.03 28.52 L902.60 26.89"/>
<path d="M902.60 613.51 L902.60 611.88 L902.60 610.25 L902.60 608.62 L902.60 606.99 L902.60 605.36 L902.60 603.73 L902.60 602.10 L902.60 600.47 L902.60 598.84 L902.60 597.21 L902.60 595.59 L902.60 593.96 L902.60 592.33 L902.60 590.70 L902.60 589.07 L902.60 587.44 L902.60 585.81 L902.60 584.18 L902.60 582.55 L902.60 580.92 L902.60 579.29 L902.60 577.66 L902.60 576.03 L902.60 574.40 L902.60 572.77 L902.60 571.14 L902.60 569.51 L902.60 567.88 L902.60 566.25 L902.60 564.62 L902.60 563.00 L902.60 561.37 L902.60 559.74 L902.60 558.11 L902.60 556.48 L902.60 554.85 L902.60 553.22 L902.60 551.59 L902.60 549.96 L902.60 548.33 L902.60 546.70 L902.60 545.07 L902.60 543.44 L902.60 541.81 L902.60 540.18 L902.60 538.55 L902.60 536.92 L902.60 535.29 L902.60 533.66 L902.60 532.03 L902.60 530.41 L902.60 528.78 L902.60 527.15 L902.60 525.52 L902.60 523.89 L902.60 522.26 L902.60 520.63 L902.60 519.00 L902.60 517.37 L902.60 515.74 L902.60 514.11 L902.60 512.48 L902.60 510.85 L902.60 509.22 L902.60 507.59 L902.60 505.96 L902.60 504.33 L902.60 502.70 L902.60 501.07 L902.60 499.44 L902.60 497.82 L902.60 496.19 L902.60 494.56 L902.60 492.93 L902.60 491.30 L902.60 489.67 L902.60 488.04 L902.60 486.41 L902.60 484.78 L902.60 483.15 L902.60 481.52 L902.60 479.89 L902.60 478.26 L902.60 476.63 L902.60 475.00 L902.60 473.37 L902.60 471.74 L902.60 470.11 L902.60 468.48 L902.60 466.86 L902.60 465.23 L902.60 463.60 L902.60 461.97 L902.60 460.34 L902.60 458.71 L902.60 457.08 L902.60 455.45 L902.60 453.82 L902.60 452.19 L902.60 450.56 L902.60 448.93 L902.60 447.30 L902.60 445.67 L902.60 444.04 L902.60 442.41 L902.60 440.78 L902.60 439.15 L902.60 437.52 L902.60 435.89 L902.60 434.26 L902.60 432.64 L902.60 431.01 L902.60 429.38 L902.60 427.75 L902.60 426.12 L902.60 424.49 L902.60 422.86 L902.60 421.23 L902.60 419.60 L902.60 417.97 L902.60 416.34 L902.60 414.71 L902.60 413.08 L902.60 411.45 L902.60 409.82 L902.60 408.19 L902.60 406.56 L902.60 404.93 L902.60 403.30 L902.60 401.67 L902.60 400.05 L902.60 398.42 L902.60 396.79 L902.60 395.16 L902.60 393.53 L902.60 391.90 L902.60 390.27 L902.60 388.64 L902.60 387.01 L902.60 385.38 L902.60 383.75 L902.60 382.12 L902.60 380.49 L902.60 378.86 L902.60 377.23 L902.60 375.60 L902.60 373.97 L902.60 372.34 L902.60 370.71 L902.60 369.08 L902.60 367.46 L902.60 365.83 L902.60 364.20 L902.60 362.57 L902.60 360.94 L902.60 359.31 L902.60 357.68 L902.60 356.05 L902.60 354.42 L902.60 352.79 L902.60 351.16 L902.60 349.53 L902.60 347.90 L902.60 346.27 L902.60 344.64 L902.60 343.01 L902.60 341.38 L902.60 339.75 L902.60 338.12 L902.60 336.50 L902.60 334.87 L902.60 333.24 L902.60 331.61 L902.60 329.98 L902.60 328.35 L902.60 326.72 L902.60 325.09 L902.60 323.46 L902.60 321.83 L902.60 320.20 L902.60 318.57 L902.60 316.94 L902.60 315.31 L902.60 313.68 L902.60 312.05 L902.60 310.42 L902.60 308.79 L902.60 307.16 L902.60 305.53 L902.60 303.90 L902.60 302.28 L902.60 300.65 L902.60 299.02 L902.60 297.39 L902.60 295.76 L902.60 294.13 L902.60 292.50 L902.60 290.87 L902.60 289.24 L902.60 287.61 L902.60 285.98 L902.60 284.35 L902.60 282.72 L902.60 281.09 L902.60 279.46 L902.60 277.83 L902.60 276.20 L902.60 274.57 L902.60 272.94 L902.60 271.31 L902.60 269.69 L902.60 268.06 L902.60 266.43 L902.60 264.80 L902.60 263.17 L902.60 261.54 L902.60 259.91 L902.60 258.28 L902.60 256.65 L902.60 255.02 L902.60 253.39 L902.60 251.76 L902.60 250.13 L902.60 248.50 L902.60 246.87 L902.60 245.24 L902.60 243.61 L902.60 241.98 L902.60 240.35 L902.60 238.72 L902.60 237.10 L902.60 235.47 L902.60 233.84 L902.60 232.21 L902.60 230.58 L902.60 228.95 L902.60 227.32 L902.60 225.69 L902.60 224.06 L902.60 222.43 L902.60 220.80 L902.60 219.17 L902.60 217.54 L902.60 215.91 L902.60 214.28 L902.60 212.65 L902.60 211.02 L902.60 209.39 L902.60 207.76 L902.60 206.13 L902.60 204.51 L902.60 202.88 L902.60 201.25 L902.60 199.62 L902.60 197.99 L902.60 196.36 L902.60 194.73 L902.60 193.10 L902.60 191.47 L902.60 189.84 L902.60 188.21 L902.60 186.58 L902.60 184.95 L902.60 183.32 L902.60 181.69 L902.60 180.06 L902.60 178.43 L902.60 176.80 L902.60 175.17 L902.60 173.54 L902.60 171.92 L902.60 170.29 L902.60 168.66 L902.60 167.03 L902.60 165.40 L902.60 163.77 L902.60 162.14 L902.60 160.51 L902.60 158.88 L902.60 157.25 L902.60 155.62 L902.60 153.99 L902.60 152.36 L902.60 150.73 L902.60 149.10 L902.60 147.47 L902.60 145.84 L902.60 144.21 L902.60 142.58 L902.60 140.95 L902.60 139.33 L902.60 137.70 L902.60 136.07 L902.60 134.44 L902.60 132.81 L902.60 131.18 L902.60 129.55 L902.60 127.92 L902.60 126.29 L902.60 124.66 L902.60 123.03 L902.60 121.40 L902.60 119.77 L902.60 118.14 L902.60 116.51 L902.60 114.88 L902.60 113.25 L902.60 111.62 L902.60 109.99 L902.60 108.37 L902.60 106.74 L902.60 105.11 L902.60 103.48 L902.60 101.85 L902.60 100.22 L902.60 98.59 L902.60 96.96 L902.60 95.33 L902.60 93.70 L902.60 92.07 L902.60 90.44 L902.60 88.81 L902.60 87.18 L902.60 85.55 L902.60 83.92 L902.60 82.29 L902.60 80.66 L902.60 79.03 L902.60 77.40 L902.60 75.78 L902.60 74.15 L902.60 72.52 L902.60 70.89 L902.60 69.26 L902.60 67.63 L902.60 66.00 L902.60 64.37 L902.60 62.74 L902.60 61.11 L902.60 59.48 L902.60 57.85 L902.60 56.22 L902.60 54.59 L902.60 52.96 L902.60 51.33 L902.60 49.70 L902.60 48.07 L902.60 46.44 L902.60 44.81 L902.60 43.19 L902.60 41.56 L902.60 39.93 L902.60 38.30 L902.60 36.67 L902.60 35.04 L902.60 33.41 L902.60 31.78 L902.60 30.15 L902.60 28.52 L902.60 26.89"/>
<path d="M902.60 613.51 L902.17 611.88 L901.75 610.25 L901.32 608.62 L900.90 606.99 L900.47 605.36 L900.05 603.73 L899.62 602.10 L899.20 600.47 L898.77 598.84 L898.35 597.21 L897.92 595.59 L897.50 593.96 L897.08 592.33 L896.65 590.70 L896.23 589.07 L895.81 587.44 L895.39 585.81 L894.97 584.18 L894.55 582.55 L894.13 580.92 L893.71 579.29 L893.29 577.66 L892.87 576.03 L892.46 574.40 L892.04 572.77 L891.63 571.14 L891.21 569.51 L890.80 567.88 L890.38 566.25 L889.97 564.62 L889.56 563.00 L889.15 561.37 L888.74 559.74 L888.34 558.11 L887.93 556.48 L887.52 554.85 L887.12 553.22 L886.72 551.59 L886.31 549.96 L885.91 548.33 L885.51 546.70 L885.12 545.07 L884.72 543.44 L884.32 541.81 L883.93 540.18 L883.54 538.55 L883.15 536.92 L882.76 535.29 L882.37 533.66 L881.98 532.03 L881.60 530.41 L881.21 528.78 L880.83 527.15 L880.45 525.52 L880.07 523.89 L879.70 522.26 L879.32 520.63 L878.95 519.00 L878.58 517.37 L878.21 515.74 L877.84 514.11 L877.47 512.48 L877.11 510.85 L876.75 509.22 L876.39 507.59 L876.03 505.96 L875.67 504.33 L875.32 502.70 L874.97 501.07 L874.62 499.44 L874.27 497.82 L873.92 496.19 L873.58 494.56 L873.24 492.93 L872.90 491.30 L872.56 489.67 L872.23 488.04 L871.90 486.41 L871.57 484.78 L871.24 483.15 L870.92 481.52 L870.59 479.89 L870.27 478.26 L869.95 476.63 L869.64 475.00 L869.33 473.37 L869.02 471.74 L868.71 470.11 L868.40 468.48 L868.10 466.86 L867.80 465.23 L867.51 463.60 L867.21 461.97 L866.92 460.34 L866.63 458.71 L866.34 457.08 L866.06 455.45 L865.78 453.82 L865.50 452.19 L865.23 450.56 L864.95 448.93 L864.68 447.30 L864.42 445.67 L864.15 444.04 L863.89 442.41 L863.64 440.78 L863.38 439.15 L863.13 437.52 L862.88 435.89 L862.64 434.26 L862.39 432.64 L862.15 431.01 L861.92 429.38 L861.68 427.75 L861.45 426.12 L861.23 424.49 L861.00 422.86 L860.78 421.23 L860.56 419.60 L860.35 417.97 L860.14 416.34 L859.93 414.71 L859.72 413.08 L859.52 411.45 L859.32 409.82 L859.13 408.19 L858.94 406.56 L858.75 404.93 L858.57 403.30 L858.38 401.67 L858.21 400.05 L858.03 398.42 L857.86 396.79 L857.69 395.16 L857.53 393.53 L857.37 391.90 L857.21 390.27 L857.05 388.64 L856.90 387.01 L856.75 385.38 L856.61 383.75 L856.47 382.12 L856.33 380.49 L856.20 378.86 L856.07 377.23 L855.94 375.60 L855.82 373.97 L855.70 372.34 L855.59 370.71 L855.47 369.08 L855.37 367.46 L855.26 365.83 L855.16 364.20 L855.06 362.57 L854.97 360.94 L854.88 359.31 L854.79 357.68 L854.71 356.05 L854.63 354.42 L854.55 352.79 L854.48 351.16 L854.41 349.53 L854.35 347.90 L854.29 346.27 L854.23 344.64 L854.18 343.01 L854.13 341.38 L854.08 339.75 L854.04 338.12 L854.00 336.50 L853.96 334.87 L853.93 333.24 L853.90 331.61 L853.88 329.98 L853.86 328.35 L853.84 326.72 L853.83 325.09 L853.82 323.46 L853.81 321.83 L853.81 320.20 L853.81 318.57 L853.82 316.94 L853.83 315.31 L853.84 313.68 L853.86 312.05 L853.88 310.42 L853.90 308.79 L853.93 307.16 L853.96 305.53 L854.00 303.90 L854.04 302.28 L854.08 300.65 L854.13 299.02 L854.18 297.39 L854.23 295.76 L854.29 294.13 L854.35 292.50 L854.41 290.87 L854.48 289.24 L854.55 287.61 L854.63 285.98 L854.71 284.35 L854.79 282.72 L854.88 281.09 L854.97 279.46 L855.06 277.83 L855.16 276.20 L855.26 274.57 L855.37 272.94 L855.47 271.31 L855.59 269.69 L855.70 268.06 L855.82 266.43 L855.94 264.80 L856.07 263.17 L856.20 261.54 L856.33 259.91 L856.47 258.28 L856.61 256.65 L856.75 255.02 L856.90 253.39 L857.05 251.76 L857.21 250.13 L857.37 248.50 L857.53 246.87 L857.69 245.24 L857.86 243.61 L858.03 241.98 L858.21 240.35 L858.38 238.72 L858.57 237.10 L858.75 235.47 L858.94 233.84 L859.13 232.21 L859.32 230.58 L859.52 228.95 L859.72 227.32 L859.93 225.69 L860.14 224.06 L860.35 222.43 L860.56 220.80 L860.78 219.17 L861.00 217.54 L861.23 215.91 L861.45 214.28 L861.68 212.65 L861.92 211.02 L862.15 209.39 L862.39 207.76 L862.64 206.13 L862.88 204.51 L863.13 202.88 L863.38 201.25 L863.64 199.62 L863.89 197.99 L864.15 196.36 L864.42 194.73 L864.68 193.10 L864.95 191.47 L865.23 189.84 L865.50 188.21 L865.78 186.58 L866.06 184.95 L866.34 183.32 L866.63 181.69 L866.92 180.06 L867.21 178.43 L867.51 176.80 L867.80 175.17 L868.10 173.54 L868.40 171.92 L868.71 170.29 L869.02 168.66 L869.33 167.03 L869.64 165.40 L869.95 163.77 L870.27 162.14 L870.59 160.51 L870.92 158.88 L871.24 157.25 L871.57 155.62 L871.90 153.99 L872.23 152.36 L872.56 150.73 L872.90 149.10 L873.24 147.47 L873.58 145.84 L873.92 144.21 L874.27 142.58 L874.62 140.95 L874.97 139.33 L875.32 137.70 L875.67 136.07 L876.03 134.44 L876.39 132.81 L876.75 131.18 L877.11 129.55 L877.47 127.92 L877.84 126.29 L878.21 124.66 L878.58 123.03 L878.95 121.40 L879.32 119.77 L879.70 118.14 L880.07 116.51 L880.45 114.88 L880.83 113.25 L881.21 111.62 L881.60 109.99 L881.98 108.37 L882.37 106.74 L882.76 105.11 L883.15 103.48 L883.54 101.85 L883.93 100.22 L884.32 98.59 L884.72 96.96 L885.12 95.33 L885.51 93.70 L885.91 92.07 L886.31 90.44 L886.72 88.81 L887.12 87.18 L887.52 85.55 L887.93 83.92 L888.34 82.29 L888.74 80.66 L889.15 79.03 L889.56 77.40 L889.97 75.78 L890.38 74.15 L890.80 72.52 L891.21 70.89 L891.63 69.26 L892.04 67.63 L892.46 66.00 L892.87 64.37 L893.29 62.74 L893.71 61.11 L894.13 59.48 L894.55 57.85 L894.97 56.22 L895.39 54.59 L895.81 52.96 L896.23 51.33 L896.65 49.70 L897.08 48.07 L897.50 46.44 L897.92 44.81 L898.35 43.19 L898.77 41.56 L899.20 39.93 L899.62 38.30 L900.05 36.67 L900.47 35.04 L900.90 33.41 L901.32 31.78 L901.75 30.15 L902.17 28.52 L902.60 26.89"/>
<path d="M902.60 613.51 L901.75 611.88 L900.90 610.25 L900.05 608.62 L899.19 606.99 L898.34 605.36 L897.49 603.73 L896.64 602.10 L895.79 600.47 L894.94 598.84 L894.10 597.21 L893.25 595.59 L892.40 593.96 L891.55 592.33 L890.71 590.70 L889.86 589.07 L889.02 587.44 L888.18 585.81 L887.34 584.18 L886.50 582.55 L885.66 580.92 L884.82 579.29 L883.98 577.66 L883.15 576.03 L882.31 574.40 L881.48 572.77 L880.65 571.14 L879.82 569.51 L878.99 567.88 L878.17 566.25 L877.35 564.62 L876.52 563.00 L875.70 561.37 L874.89 559.74 L874.07 558.11 L873.26 556.48 L872.45 554.85 L871.64 553.22 L870.83 551.59 L870.03 549.96 L869.23 548.33 L868.43 546.70 L867.63 545.07 L866.84 543.44 L866.05 541.81 L865.26 540.18 L864.47 538.55 L863.69 536.92 L862.91 535.29 L862.14 533.66 L861.36 532.03 L860.59 530.41 L859.83 528.78 L859.06 527.15 L858.30 525.52 L857.54 523.89 L856.79 522.26 L856.04 520.63 L855.29 519.00 L854.55 517.37 L853.81 515.74 L853.08 514.11 L852.35 512.48 L851.62 510.85 L850.89 509.22 L850.17 507.59 L849.46 505.96 L848.74 504.33 L848.04 502.70 L847.33 501.07 L846.63 499.44 L845.94 497.82 L845.25 496.19 L844.56 494.56 L843.88 492.93 L843.20 491.30 L842.53 489.67 L841.86 488.04 L841.19 486.41 L840.53 484.78 L839.88 483.15 L839.23 481.52 L838.59 479.89 L837.94 478.26 L837.31 476.63 L836.68 475.00 L836.05 473.37 L835.43 471.74 L834.82 470.11 L834.21 468.48 L833.60 466.86 L833.00 465.23 L832.41 463.60 L831.82 461.97 L831.24 460.34 L830.66 458.71 L830.09 457.08 L829.52 455.45 L828.96 453.82 L828.40 452.19 L827.85 450.56 L827.31 448.93 L826.77 447.30 L826.24 445.67 L825.71 444.04 L825.19 442.41 L824.67 440.78 L824.16 439.15 L823.66 437.52 L823.16 435.89 L822.67 434.26 L822.19 432.64 L821.71 431.01 L821.23 429.38 L820.77 427.75 L820.31 426.12 L819.85 424.49 L819.40 422.86 L818.96 421.23 L818.53 419.60 L818.10 417.97 L817.68 416.34 L817.26 414.71 L816.85 413.08 L816.45 411.45 L816.05 409.82 L815.66 408.19 L815.28 406.56 L814.90 404.93 L814.53 403.30 L814.17 401.67 L813.81 400.05 L813.46 398.42 L813.12 396.79 L812.78 395.16 L812.45 393.53 L812.13 391.90 L811.81 390.27 L811.51 388.64 L811.20 387.01 L810.91 385.38 L810.62 383.75 L810.34 382.12 L810.07 380.49 L809.80 378.86 L809.54 377.23 L809.29 375.60 L809.04 373.97 L808.80 372.34 L808.57 370.71 L808.35 369.08 L808.13 367.46 L807.92 365.83 L807.72 364.20 L807.53 362.57 L807.34 360.94 L807.16 359.31 L806.98 357.68 L806.82 356.05 L806.66 354.42 L806.51 352.79 L806.36 351.16 L806.23 349.53 L806.10 347.90 L805.97 346.27 L805.86 344.64 L805.75 343.01 L805.65 341.38 L805.56 339.75 L805.47 338.12 L805.40 336.50 L805.33 334.87 L805.26 333.24 L805.21 331.61 L805.16 329.98 L805.12 328.35 L805.08 326.72 L805.06 325.09 L805.04 323.46 L805.03 321.83 L805.02 320.20 L805.03 318.57 L805.04 316.94 L805.06 315.31 L805.08 313.68 L805.12 312.05 L805.16 310.42 L805.21 308.79 L805.26 307.16 L805.33 305.53 L805.40 303.90 L805.47 302.28 L805.56 300.65 L805.65 299.02 L805.75 297.39 L805.86 295.76 L805.97 294.13 L806.10 292.50 L806.23 290.87 L806.36 289.24 L806.51 287.61 L806.66 285.98 L806.82 284.35 L806.98 282.72 L807.16 281.09 L807.34 279.46 L807.53 277.83 L807.72 276.20 L807.92 274.57 L808.13 272.94 L808.35 271.31 L808.57 269.69 L808.80 268.06 L809.04 266.43 L809.29 264.80 L809.54 263.17 L809.80 261.54 L810.07 259.91 L810.34 258.28 L810.62 256.65 L810.91 255.02 L811.20 253.39 L811.51 251.76 L811.81 250.13 L812.13 248.50 L812.45 246.87 L812.78 245.24 L813.12 243.61 L813.46 241.98 L813.81 240.35 L814.17 238.72 L814.53 237.10 L814.90 235.47 L815.28 233.84 L815.66 232.21 L816.05 230.58 L816.45 228.95 L816.85 227.32 L817.26 225.69 L817.68 224.06 L818.10 222.43 L818.53 220.80 L818.96 219.17 L819.40 217.54 L819.85 215.91 L820.31 214.28 L820.77 212.65 L821.23 211.02 L821.71 209.39 L822.19 207.76 L822.67 206.13 L823.16 204.51 L823.66 202.88 L824.16 201.25 L824.67 199.62 L825.19 197.99 L825.71 196.36 L826.24 194.73 L826.77 193.10 L827.31 191.47 L827.85 189.84 L828.40 188.21 L828.96 186.58 L829.52 184.95 L830.09 183.32 L830.66 181.69 L831.24 180.06 L831.82 178.43 L832.41 176.80 L833.00 175.17 L833.60 173.54 L834.21 171.92 L834.82 170.29 L835.43 168.66 L836.05 167.03 L836.68 165.40 L837.31 163.77 L837.94 162.14 L838.59 160.51 L839.23 158.88 L839.88 157.25 L840.53 155.62 L841.19 153.99 L841.86 152.36 L842.53 150.73 L843.20 149.10 L843.88 147.47 L844.56 145.84 L845.25 144.21 L845.94 142.58 L846.63 140.95 L847.33 139.33 L848.04 137.70 L848.74 136.07 L849.46 134.44 L850.17 132.81 L850.89 131.18 L851.62 129.55 L852.35 127.92 L853.08 126.29 L853.81 124.66 L854.55 123.03 L855.29 121.40 L856.04 119.77 L856.79 118.14 L857.54 116.51 L858.30 114.88 L859.06 113.25 L859.83 111.62 L860.59 109.99 L861.36 108.37 L862.14 106.74 L862.91 105.11 L863.69 103.48 L864.47 101.85 L865.26 100.22 L866.05 98.59 L866.84 96.96 L867.63 95.33 L868.43 93.70 L869.23 92.07 L870.03 90.44 L870.83 88.81 L871.64 87.18 L872.45 85.55 L873.26 83.92 L874.07 82.29 L874.89 80.66 L875.70 79.03 L876.52 77.40 L877.35 75.78 L878.17 74.15 L878.99 72.52 L879.82 70.89 L880.65 69.26 L881.48 67.63 L882.31 66.00 L883.15 64.37 L883.98 62.74 L884.82 61.11 L885.66 59.48 L886.50 57.85 L887.34 56.22 L888.18 54.59 L889.02 52.96 L889.86 51.33 L890.71 49.70 L891.55 48.07 L892.40 46.44 L893.25 44.81 L894.10 43.19 L894.94 41.56 L895.79 39.93 L896.64 38.30 L897.49 36.67 L898.34 35.04 L899.19 33.41 L900.05 31.78 L900.90 30.15 L901.75 28.52 L902.60 26.89"/>
<path d="M902.60 613.51 L901.32 611.88 L900.05 610.25 L898.77 608.62 L897.49 606.99 L896.22 605.36 L894.94 603.73 L893.66 602.10 L892.39 600.47 L891.12 598.84 L889.84 597.21 L888.57 595.59 L887.30 593.96 L886.03 592.33 L884.76 590.70 L883.50 589.07 L882.23 587.44 L880.97 585.81 L879.70 584.18 L878.44 582.55 L877.18 580.92 L875.93 579.29 L874.67 577.66 L873.42 576.03 L872.17 574.40 L870.92 572.77 L869.68 571.14 L868.43 569.51 L867.19 567.88 L865.95 566.25 L864.72 564.62 L863.49 563.00 L862.26 561.37 L861.03 559.74 L859.81 558.11 L858.59 556.48 L857.37 554.85 L856.16 553.22 L854.95 551.59 L853.74 549.96 L852.54 548.33 L851.34 546.70 L850.15 545.07 L848.96 543.44 L847.77 541.81 L846.59 540.18 L845.41 538.55 L844.24 536.92 L843.07 535.29 L841.90 533.66 L840.74 532.03 L839.59 530.41 L838.44 528.78 L837.29 527.15 L836.15 525.52 L835.02 523.89 L833.89 522.26 L832.76 520.63 L831.64 519.00 L830.53 517.37 L829.42 515.74 L828.32 514.11 L827.22 512.48 L826.13 510.85 L825.04 509.22 L823.96 507.59 L822.89 505.96 L821.82 504.33 L820.76 502.70 L819.70 501.07 L818.65 499.44 L817.61 497.82 L816.57 496.19 L815.54 494.56 L814.52 492.93 L813.50 491.30 L812.49 489.67 L811.49 488.04 L810.49 486.41 L809.50 484.78 L808.52 483.15 L807.55 481.52 L806.58 479.89 L805.62 478.26 L804.66 476.63 L803.72 475.00 L802.78 473.37 L801.85 471.74 L800.93 470.11 L800.01 468.48 L799.11 466.86 L798.21 465.23 L797.32 463.60 L796.43 461.97 L795.56 460.34 L794.69 458.71 L793.83 457.08 L792.98 455.45 L792.14 453.82 L791.31 452.19 L790.48 450.56 L789.66 448.93 L788.85 447.30 L788.06 445.67 L787.26 444.04 L786.48 442.41 L785.71 440.78 L784.95 439.15 L784.19 437.52 L783.44 435.89 L782.71 434.26 L781.98 432.64 L781.26 431.01 L780.55 429.38 L779.85 427.75 L779.16 426.12 L778.48 424.49 L777.81 422.86 L777.14 421.23 L776.49 419.60 L775.85 417.97 L775.21 416.34 L774.59 414.71 L773.97 413.08 L773.37 411.45 L772.77 409.82 L772.19 408.19 L771.62 406.56 L771.05 404.93 L770.50 403.30 L769.95 401.67 L769.42 400.05 L768.89 398.42 L768.38 396.79 L767.87 395.16 L767.38 393.53 L766.90 391.90 L766.42 390.27 L765.96 388.64 L765.51 387.01 L765.06 385.38 L764.63 383.75 L764.21 382.12 L763.80 380.49 L763.40 378.86 L763.01 377.23 L762.63 375.60 L762.26 373.97 L761.91 372.34 L761.56 370.71 L761.22 369.08 L760.90 367.46 L760.59 365.83 L760.28 364.20 L759.99 362.57 L759.71 360.94 L759.44 359.31 L759.18 357.68 L758.93 356.05 L758.69 354.42 L758.46 352.79 L758.24 351.16 L758.04 349.53 L757.85 347.90 L757.66 346.27 L757.49 344.64 L757.33 343.01 L757.18 341.38 L757.04 339.75 L756.91 338.12 L756.79 336.50 L756.69 334.87 L756.59 333.24 L756.51 331.61 L756.44 329.98 L756.38 328.35 L756.33 326.72 L756.29 325.09 L756.26 323.46 L756.24 321.83 L756.24 320.20 L756.24 318.57 L756.26 316.94 L756.29 315.31 L756.33 313.68 L756.38 312.05 L756.44 310.42 L756.51 308.79 L756.59 307.16 L756.69 305.53 L756.79 303.90 L756.91 302.28 L757.04 300.65 L757.18 299.02 L757.33 297.39 L757.49 295.76 L757.66 294.13 L757.85 292.50 L758.04 290.87 L758.24 289.24 L758.46 287.61 L758.69 285.98 L758.93 284.35 L759.18 282.72 L759.44 281.09 L759.71 279.46 L759.99 277.83 L760.28 276.20 L760.59 274.57 L760.90 272.94 L761.22 271.31 L761.56 269.69 L761.91 268.06 L762.26 266.43 L762.63 264.80 L763.01 263.17 L763.40 261.54 L763.80 259.91 L764.21 258.28 L764.63 256.65 L765.06 255.02 L765.51 253.39 L765.96 251.76 L766.42 250.13 L766.90 248.50 L767.38 246.87 L767.87 245.24 L768.38 243.61 L768.89 241.98 L769.42 240.35 L769.95 238.72 L770.50 237.10 L771.05 235.47 L771.62 233.84 L772.19 232.21 L772.77 230.58 L773.37 228.95 L773.97 227.32 L774.59 225.69 L775.21 224.06 L775.85 222.43 L776.49 220.80 L777.14 219.17 L777.81 217.54 L778.48 215.91 L779.16 214.28 L779.85 212.65 L780.55 211.02 L781.26 209.39 L781.98 207.76 L782.71 206.13 L783.44 204.51 L784.19 202.88 L784.95 201.25 L785.71 199.62 L786.48 197.99 L787.26 196.36 L788.06 194.73 L788.85 193.10 L789.66 191.47 L790.48 189.84 L791.31 188.21 L792.14 186.58 L792.98 184.95 L793.83 183.32 L794.69 181.69 L795.56 180.06 L796.43 178.43 L797.32 176.80 L798.21 175.17 L799.11 173.54 L800.01 171.92 L800.93 170.29 L801.85 168.66 L802.78 167.03 L803.72 165.40 L804.66 163.77 L805.62 162.14 L806.58 160.51 L807.55 158.88 L808.52 157.25 L809.50 155.62 L810.49 153.99 L811.49 152.36 L812.49 150.73 L813.50 149.10 L814.52 147.47 L815.54 145.84 L816.57 144.21 L817.61 142.58 L818.65 140.95 L819.70 139.33 L820.76 137.70 L821.82 136.07 L822.89 134.44 L823.96 132.81 L825.04 131.18 L826.13 129.55 L827.22 127.92 L828.32 126.29 L829.42 124.66 L830.53 123.03 L831.64 121.40 L832.76 119.77 L833.89 118.14 L835.02 116.51 L836.15 114.88 L837.29 113.25 L838.44 111.62 L839.59 109.99 L840.74 108.37 L841.90 106.74 L843.07 105.11 L844.24 103.48 L845.41 101.85 L846.59 100.22 L847.77 98.59 L848.96 96.96 L850.15 95.33 L851.34 93.70 L852.54 92.07 L853.74 90.44 L854.95 88.81 L856.16 87.18 L857.37 85.55 L858.59 83.92 L859.81 82.29 L861.03 80.66 L862.26 79.03 L863.49 77.40 L864.72 75.78 L865.95 74.15 L867.19 72.52 L868.43 70.89 L869.68 69.26 L870.92 67.63 L872.17 66.00 L873.42 64.37 L874.67 62.74 L875.93 61.11 L877.18 59.48 L878.44 57.85 L879.70 56.22 L880.97 54.59 L882.23 52.96 L883.50 51.33 L884.76 49.70 L886.03 48.07 L887.30 46.44 L888.57 44.81 L889.84 43.19 L891.12 41.56 L892.39 39.93 L893.66 38.30 L894.94 36.67 L896.22 35.04 L897.49 33.41 L898.77 31.78 L900.05 30.15 L901.32 28.52 L902.60 26.89"/>
<path d="M902.60 613.51 L900.90 611.88 L899.19 610.25 L897.49 608.62 L895.79 606.99 L894.09 605.36 L892.39 603.73 L890.69 602.10 L888.99 600.47 L887.29 598.84 L885.59 597.21 L883.90 595.59 L882.20 593.96 L880.51 592.33 L878.82 590.70 L877.13 589.07 L875.44 587.44 L873.75 585.81 L872.07 584.18 L870.39 582.55 L868.71 580.92 L867.04 579.29 L865.36 577.66 L863.69 576.03 L862.03 574.40 L860.36 572.77 L858.70 571.14 L857.04 569.51 L855.39 567.88 L853.74 566.25 L852.09 564.62 L850.45 563.00 L848.81 561.37 L847.17 559.74 L845.54 558.11 L843.92 556.48 L842.30 554.85 L840.68 553.22 L839.07 551.59 L837.46 549.96 L835.85 548.33 L834.26 546.70 L832.66 545.07 L831.08 543.44 L829.50 541.81 L827.92 540.18 L826.35 538.55 L824.78 536.92 L823.23 535.29 L821.67 533.66 L820.13 532.03 L818.59 530.41 L817.05 528.78 L815.52 527.15 L814.00 525.52 L812.49 523.89 L810.98 522.26 L809.48 520.63 L807.99 519.00 L806.50 517.37 L805.02 515.74 L803.55 514.11 L802.09 512.48 L800.63 510.85 L799.19 509.22 L797.75 507.59 L796.31 505.96 L794.89 504.33 L793.47 502.70 L792.07 501.07 L790.67 499.44 L789.28 497.82 L787.89 496.19 L786.52 494.56 L785.16 492.93 L783.80 491.30 L782.45 489.67 L781.12 488.04 L779.79 486.41 L778.47 484.78 L777.16 483.15 L775.86 481.52 L774.57 479.89 L773.29 478.26 L772.02 476.63 L770.76 475.00 L769.51 473.37 L768.27 471.74 L767.04 470.11 L765.82 468.48 L764.61 466.86 L763.41 465.23 L762.22 463.60 L761.04 461.97 L759.88 460.34 L758.72 458.71 L757.58 457.08 L756.44 455.45 L755.32 453.82 L754.21 452.19 L753.11 450.56 L752.02 448.93 L750.94 447.30 L749.87 445.67 L748.82 444.04 L747.78 442.41 L746.75 440.78 L745.73 439.15 L744.72 437.52 L743.73 435.89 L742.74 434.26 L741.77 432.64 L740.81 431.01 L739.87 429.38 L738.93 427.75 L738.01 426.12 L737.10 424.49 L736.21 422.86 L735.32 421.23 L734.45 419.60 L733.60 417.97 L732.75 416.34 L731.92 414.71 L731.10 413.08 L730.29 411.45 L729.50 409.82 L728.72 408.19 L727.95 406.56 L727.20 404.93 L726.46 403.30 L725.73 401.67 L725.02 400.05 L724.32 398.42 L723.64 396.79 L722.96 395.16 L722.30 393.53 L721.66 391.90 L721.03 390.27 L720.41 388.64 L719.81 387.01 L719.22 385.38 L718.64 383.75 L718.08 382.12 L717.53 380.49 L717.00 378.86 L716.48 377.23 L715.98 375.60 L715.49 373.97 L715.01 372.34 L714.55 370.71 L714.10 369.08 L713.67 367.46 L713.25 365.83 L712.84 364.20 L712.45 362.57 L712.08 360.94 L711.71 359.31 L711.37 357.68 L711.04 356.05 L710.72 354.42 L710.41 352.79 L710.13 351.16 L709.85 349.53 L709.59 347.90 L709.35 346.27 L709.12 344.64 L708.90 343.01 L708.70 341.38 L708.52 339.75 L708.35 338.12 L708.19 336.50 L708.05 334.87 L707.93 333.24 L707.81 331.61 L707.72 329.98 L707.64 328.35 L707.57 326.72 L707.52 325.09 L707.48 323.46 L707.46 321.83 L707.45 320.20 L707.46 318.57 L707.48 316.94 L707.52 315.31 L707.57 313.68 L707.64 312.05 L707.72 310.42 L707.81 308.79 L707.93 307.16 L708.05 305.53 L708.19 303.90 L708.35 302.28 L708.52 300.65 L708.70 299.02 L708.90 297.39 L709.12 295.76 L709.35 294.13 L709.59 292.50 L709.85 290.87 L710.13 289.24 L710.41 287.61 L710.72 285.98 L711.04 284.35 L711.37 282.72 L711.71 281.09 L712.08 279.46 L712.45 277.83 L712.84 276.20 L713.25 274.57 L713.67 272.94 L714.10 271.31 L714.55 269.69 L715.01 268.06 L715.49 266.43 L715.98 264.80 L716.48 263.17 L717.00 261.54 L717.53 259.91 L718.08 258.28 L718.64 256.65 L719.22 255.02 L719.81 253.39 L720.41 251.76 L721.03 250.13 L721.66 248.50 L722.30 246.87 L722.96 245.24 L723.64 243.61 L724.32 241.98 L725.02 240.35 L725.73 238.72 L726.46 237.10 L727.20 235.47 L727.95 233.84 L728.72 232.21 L729.50 230.58 L730.29 228.95 L731.10 227.32 L731.92 225.69 L732.75 224.06 L733.60 222.43 L734.45 220.80 L735.32 219.17 L736.21 217.54 L737.10 215.91 L738.01 214.28 L738.93 212.65 L739.87 211.02 L740.81 209.39 L741.77 207.76 L742.74 206.13 L743.73 204.51 L744.72 202.88 L745.73 201.25 L746.75 199.62 L747.78 197.99 L748.82 196.36 L749.87 194.73 L750.94 193.10 L752.02 191.47 L753.11 189.84 L754.21 188.21 L755.32 186.58 L756.44 184.95 L757.58 183.32 L758.72 181.69 L759.88 180.06 L761.04 178.43 L762.22 176.80 L763.41 175.17 L764.61 173.54 L765.82 171.92 L767.04 170.29 L768.27 168.66 L769.51 167.03 L770.76 165.40 L772.02 163.77 L773.29 162.14 L774.57 160.51 L775.86 158.88 L777.16 157.25 L778.47 155.62 L779.79 153.99 L781.12 152.36 L782.45 150.73 L783.80 149.10 L785.16 147.47 L786.52 145.84 L787.89 144.21 L789.28 142.58 L790.67 140.95 L792.07 139.33 L793.47 137.70 L794.89 136.07 L796.31 134.44 L797.75 132.81 L799.19 131.18 L800.63 129.55 L802.09 127.92 L803.55 126.29 L805.02 124.66 L806.50 123.03 L807.99 121.40 L809.48 119.77 L810.98 118.14 L812.49 116.51 L814.00 114.88 L815.52 113.25 L817.05 111.62 L818.59 109.99 L820.13 108.37 L821.67 106.74 L823.23 105.11 L824.78 103.48 L826.35 101.85 L827.92 100.22 L829.50 98.59 L831.08 96.96 L832.66 95.33 L834.26 93.70 L835.85 92.07 L837.46 90.44 L839.07 88.81 L840.68 87.18 L842.30 85.55 L843.92 83.92 L845.54 82.29 L847.17 80.66 L848.81 79.03 L850.45 77.40 L852.09 75.78 L853.74 74.15 L855.39 72.52 L857.04 70.89 L858.70 69.26 L860.36 67.63 L862.03 66.00 L863.69 64.37 L865.36 62.74 L867.04 61.11 L868.71 59.48 L870.39 57.85 L872.07 56.22 L873.75 54.59 L875.44 52.96 L877.13 51.33 L878.82 49.70 L880.51 48.07 L882.20 46.44 L883.90 44.81 L885.59 43.19 L887.29 41.56 L888.99 39.93 L890.69 38.30 L892.39 36.67 L894.09 35.04 L895.79 33.41 L897.49 31.78 L899.19 30.15 L900.90 28.52 L902.60 26.89"/>
<path d="M902.60 613.51 L900.47 611.88 L898.34 610.25 L896.21 608.62 L894.09 606.99 L891.96 605.36 L889.83 603.73 L887.71 602.10 L885.58 600.47 L883.46 598.84 L881.34 597.21 L879.22 595.59 L877.10 593.96 L874.99 592.33 L872.87 590.70 L870.76 589.07 L868.65 587.44 L866.54 585.81 L864.44 584.18 L862.34 582.55 L860.24 580.92 L858.15 579.29 L856.05 577.66 L853.97 576.03 L851.88 574.40 L849.80 572.77 L847.73 571.14 L845.65 569.51 L843.59 567.88 L841.52 566.25 L839.46 564.62 L837.41 563.00 L835.36 561.37 L833.32 559.74 L831.28 558.11 L829.25 556.48 L827.22 554.85 L825.20 553.22 L823.18 551.59 L821.17 549.96 L819.17 548.33 L817.17 546.70 L815.18 545.07 L813.20 543.44 L811.22 541.81 L809.25 540.18 L807.29 538.55 L805.33 536.92 L803.38 535.29 L801.44 533.66 L799.51 532.03 L797.58 530.41 L795.66 528.78 L793.76 527.15 L791.85 525.52 L789.96 523.89 L788.08 522.26 L786.20 520.63 L784.34 519.00 L782.48 517.37 L780.63 515.74 L778.79 514.11 L776.96 512.48 L775.14 510.85 L773.33 509.22 L771.53 507.59 L769.74 505.96 L767.96 504.33 L766.19 502.70 L764.43 501.07 L762.68 499.44 L760.94 497.82 L759.22 496.19 L757.50 494.56 L755.79 492.93 L754.10 491.30 L752.42 489.67 L750.75 488.04 L749.09 486.41 L747.44 484.78 L745.80 483.15 L744.18 481.52 L742.56 479.89 L740.96 478.26 L739.37 476.63 L737.80 475.00 L736.24 473.37 L734.68 471.74 L733.15 470.11 L731.62 468.48 L730.11 466.86 L728.61 465.23 L727.13 463.60 L725.65 461.97 L724.20 460.34 L722.75 458.71 L721.32 457.08 L719.90 455.45 L718.50 453.82 L717.11 452.19 L715.73 450.56 L714.37 448.93 L713.02 447.30 L711.69 445.67 L710.37 444.04 L709.07 442.41 L707.78 440.78 L706.51 439.15 L705.25 437.52 L704.01 435.89 L702.78 434.26 L701.56 432.64 L700.37 431.01 L699.18 429.38 L698.02 427.75 L696.87 426.12 L695.73 424.49 L694.61 422.86 L693.50 421.23 L692.42 419.60 L691.34 417.97 L690.29 416.34 L689.25 414.71 L688.22 413.08 L687.22 411.45 L686.22 409.82 L685.25 408.19 L684.29 406.56 L683.35 404.93 L682.43 403.30 L681.52 401.67 L680.63 400.05 L679.75 398.42 L678.89 396.79 L678.05 395.16 L677.23 393.53 L676.43 391.90 L675.64 390.27 L674.86 388.64 L674.11 387.01 L673.37 385.38 L672.65 383.75 L671.95 382.12 L671.27 380.49 L670.60 378.86 L669.95 377.23 L669.32 375.60 L668.71 373.97 L668.11 372.34 L667.53 370.71 L666.97 369.08 L666.43 367.46 L665.91 365.83 L665.40 364.20 L664.91 362.57 L664.44 360.94 L663.99 359.31 L663.56 357.68 L663.14 356.05 L662.75 354.42 L662.37 352.79 L662.01 351.16 L661.67 349.53 L661.34 347.90 L661.04 346.27 L660.75 344.64 L660.48 343.01 L660.23 341.38 L660.00 339.75 L659.79 338.12 L659.59 336.50 L659.41 334.87 L659.26 333.24 L659.12 331.61 L659.00 329.98 L658.89 328.35 L658.81 326.72 L658.75 325.09 L658.70 323.46 L658.67 321.83 L658.66 320.20 L658.67 318.57 L658.70 316.94 L658.75 315.31 L658.81 313.68 L658.89 312.05 L659.00 310.42 L659.12 308.79 L659.26 307.16 L659.41 305.53 L659.59 303.90 L659.79 302.28 L660.00 300.65 L660.23 299.02 L660.48 297.39 L660.75 295.76 L661.04 294.13 L661.34 292.50 L661.67 290.87 L662.01 289.24 L662.37 287.61 L662.75 285.98 L663.14 284.35 L663.56 282.72 L663.99 281.09 L664.44 279.46 L664.91 277.83 L665.40 276.20 L665.91 274.57 L666.43 272.94 L666.97 271.31 L667.53 269.69 L668.11 268.06 L668.71 266.43 L669.32 264.80 L669.95 263.17 L670.60 261.54 L671.27 259.91 L671.95 258.28 L672.65 256.65 L673.37 255.02 L674.11 253.39 L674.86 251.76 L675.64 250.13 L676.43 248.50 L677.23 246.87 L678.05 245.24 L678.89 243.61 L679.75 241.98 L680.63 240.35 L681.52 238.72 L682.43 237.10 L683.35 235.47 L684.29 233.84 L685.25 232.21 L686.22 230.58 L687.22 228.95 L688.22 227.32 L689.25 225.69 L690.29 224.06 L691.34 222.43 L692.42 220.80 L693.50 219.17 L694.61 217.54 L695.73 215.91 L696.87 214.28 L698.02 212.65 L699.18 211.02 L700.37 209.39 L701.56 207.76 L702.78 206.13 L704.01 204.51 L705.25 202.88 L706.51 201.25 L707.78 199.62 L709.07 197.99 L710.37 196.36 L711.69 194.73 L713.02 193.10 L714.37 191.47 L715.73 189.84 L717.11 188.21 L718.50 186.58 L719.90 184.95 L721.32 183.32 L722.75 181.69 L724.20 180.06 L725.65 178.43 L727.13 176.80 L728.61 175.17 L730.11 173.54 L731.62 171.92 L733.15 170.29 L734.68 168.66 L736.24 167.03 L737.80 165.40 L739.37 163.77 L740.96 162.14 L742.56 160.51 L744.18 158.88 L745.80 157.25 L747.44 155.62 L749.09 153.99 L750.75 152.36 L752.42 150.73 L754.10 149.10 L755.79 147.47 L757.50 145.84 L759.22 144.21 L760.94 142.58 L762.68 140.95 L764.43 139.33 L766.19 137.70 L767.96 136.07 L769.74 134.44 L771.53 132.81 L773.33 131.18 L775.14 129.55 L776.96 127.92 L778.79 126.29 L780.63 124.66 L782.48 123.03 L784.34 121.40 L786.20 119.77 L788.08 118.14 L789.96 116.51 L791.85 114.88 L793.76 113.25 L795.66 111.62 L797.58 109.99 L799.51 108.37 L801.44 106.74 L803.38 105.11 L805.33 103.48 L807.29 101.85 L809.25 100.22 L811.22 98.59 L813.20 96.96 L815.18 95.33 L817.17 93.70 L819.17 92.07 L821.17 90.44 L823.18 88.81 L825.20 87.18 L827.22 85.55 L829.25 83.92 L831.28 82.29 L833.32 80.66 L835.36 79.03 L837.41 77.40 L839.46 75.78 L841.52 74.15 L843.59 72.52 L845.65 70.89 L847.73 69.26 L849.80 67.63 L851.88 66.00 L853.97 64.37 L856.05 62.74 L858.15 61.11 L860.24 59.48 L862.34 57.85 L864.44 56.22 L866.54 54.59 L868.65 52.96 L870.76 51.33 L872.87 49.70 L874.99 48.07 L877.10 46.44 L879.22 44.81 L881.34 43.19 L883.46 41.56 L885.58 39.93 L887.71 38.30 L889.83 36.67 L891.96 35.04 L894.09 33.41 L896.21 31.78 L898.34 30.15 L900.47 28.52 L902.60 26.89"/>
<path d="M902.60 613.51 L900.05 611.88 L897.49 610.25 L894.94 608.62 L892.38 606.99 L889.83 605.36 L887.28 603.73 L884.73 602.10 L882.18 600.47 L879.63 598.84 L877.09 597.21 L874.54 595.59 L872.00 593.96 L869.46 592.33 L866.93 590.70 L864.39 589.07 L861.86 587.44 L859.33 585.81 L856.81 584.18 L854.29 582.55 L851.77 580.92 L849.26 579.29 L846.75 577.66 L844.24 576.03 L841.74 574.40 L839.24 572.77 L836.75 571.14 L834.26 569.51 L831.78 567.88 L829.31 566.25 L826.84 564.62 L824.37 563.00 L821.91 561.37 L819.46 559.74 L817.02 558.11 L814.58 556.48 L812.14 554.85 L809.72 553.22 L807.30 551.59 L804.89 549.96 L802.48 548.33 L800.09 546.70 L797.70 545.07 L795.32 543.44 L792.94 541.81 L790.58 540.18 L788.22 538.55 L785.88 536.92 L783.54 535.29 L781.21 533.66 L778.89 532.03 L776.58 530.41 L774.28 528.78 L771.99 527.15 L769.71 525.52 L767.43 523.89 L765.17 522.26 L762.92 520.63 L760.68 519.00 L758.46 517.37 L756.24 515.74 L754.03 514.11 L751.84 512.48 L749.65 510.85 L747.48 509.22 L745.32 507.59 L743.17 505.96 L741.03 504.33 L738.91 502.70 L736.80 501.07 L734.70 499.44 L732.61 497.82 L730.54 496.19 L728.48 494.56 L726.43 492.93 L724.40 491.30 L722.38 489.67 L720.37 488.04 L718.38 486.41 L716.40 484.78 L714.44 483.15 L712.49 481.52 L710.56 479.89 L708.63 478.26 L706.73 476.63 L704.84 475.00 L702.96 473.37 L701.10 471.74 L699.26 470.11 L697.43 468.48 L695.61 466.86 L693.81 465.23 L692.03 463.60 L690.26 461.97 L688.51 460.34 L686.78 458.71 L685.06 457.08 L683.36 455.45 L681.68 453.82 L680.01 452.19 L678.36 450.56 L676.73 448.93 L675.11 447.30 L673.51 445.67 L671.93 444.04 L670.37 442.41 L668.82 440.78 L667.29 439.15 L665.78 437.52 L664.29 435.89 L662.81 434.26 L661.36 432.64 L659.92 431.01 L658.50 429.38 L657.10 427.75 L655.72 426.12 L654.36 424.49 L653.01 422.86 L651.69 421.23 L650.38 419.60 L649.09 417.97 L647.83 416.34 L646.58 414.71 L645.35 413.08 L644.14 411.45 L642.95 409.82 L641.78 408.19 L640.63 406.56 L639.50 404.93 L638.39 403.30 L637.30 401.67 L636.23 400.05 L635.18 398.42 L634.15 396.79 L633.15 395.16 L632.16 393.53 L631.19 391.90 L630.24 390.27 L629.32 388.64 L628.41 387.01 L627.53 385.38 L626.67 383.75 L625.82 382.12 L625.00 380.49 L624.20 378.86 L623.42 377.23 L622.67 375.60 L621.93 373.97 L621.21 372.34 L620.52 370.71 L619.85 369.08 L619.20 367.46 L618.57 365.83 L617.96 364.20 L617.38 362.57 L616.81 360.94 L616.27 359.31 L615.75 357.68 L615.25 356.05 L614.78 354.42 L614.32 352.79 L613.89 351.16 L613.48 349.53 L613.09 347.90 L612.72 346.27 L612.38 344.64 L612.06 343.01 L611.76 341.38 L611.48 339.75 L611.22 338.12 L610.99 336.50 L610.78 334.87 L610.59 333.24 L610.42 331.61 L610.28 329.98 L610.15 328.35 L610.05 326.72 L609.98 325.09 L609.92 323.46 L609.89 321.83 L609.88 320.20 L609.89 318.57 L609.92 316.94 L609.98 315.31 L610.05 313.68 L610.15 312.05 L610.28 310.42 L610.42 308.79 L610.59 307.16 L610.78 305.53 L610.99 303.90 L611.22 302.28 L611.48 300.65 L611.76 299.02 L612.06 297.39 L612.38 295.76 L612.72 294.13 L613.09 292.50 L613.48 290.87 L613.89 289.24 L614.32 287.61 L614.78 285.98 L615.25 284.35 L615.75 282.72 L616.27 281.09 L616.81 279.46 L617.38 277.83 L617.96 276.20 L618.57 274.57 L619.20 272.94 L619.85 271.31 L620.52 269.69 L621.21 268.06 L621.93 266.43 L622.67 264.80 L623.42 263.17 L624.20 261.54 L625.00 259.91 L625.82 258.28 L626.67 256.65 L627.53 255.02 L628.41 253.39 L629.32 251.76 L630.24 250.13 L631.19 248.50 L632.16 246.87 L633.15 245.24 L634.15 243.61 L635.18 241.98 L636.23 240.35 L637.30 238.72 L638.39 237.10 L639.50 235.47 L640.63 233.84 L641.78 232.21 L642.95 230.58 L644.14 228.95 L645.35 227.32 L646.58 225.69 L647.83 224.06 L649.09 222.43 L650.38 220.80 L651.69 219.17 L653.01 217.54 L654.36 215.91 L655.72 214.28 L657.10 212.65 L658.50 211.02 L659.92 209.39 L661.36 207.76 L662.81 206.13 L664.29 204.51 L665.78 202.88 L667.29 201.25 L668.82 199.62 L670.37 197.99 L671.93 196.36 L673.51 194.73 L675.11 193.10 L676.73 191.47 L678.36 189.84 L680.01 188.21 L681.68 186.58 L683.36 184.95 L685.06 183.32 L686.78 181.69 L688.51 180.06 L690.26 178.43 L692.03 176.80 L693.81 175.17 L695.61 173.54 L697.43 171.92 L699.26 170.29 L701.10 168.66 L702.96 167.03 L704.84 165.40 L706.73 163.77 L708.63 162.14 L710.56 160.51 L712.49 158.88 L714.44 157.25 L716.40 155.62 L718.38 153.99 L720.37 152.36 L722.38 150.73 L724.40 149.10 L726.43 147.47 L728.48 145.84 L730.54 144.21 L732.61 142.58 L734.70 140.95 L736.80 139.33 L738.91 137.70 L741.03 136.07 L743.17 134.44 L745.32 132.81 L747.48 131.18 L749.65 129.55 L751.84 127.92 L754.03 126.29 L756.24 124.66 L758.46 123.03 L760.68 121.40 L762.92 119.77 L765.17 118.14 L767.43 116.51 L769.71 114.88 L771.99 113.25 L774.28 111.62 L776.58 109.99 L778.89 108.37 L781.21 106.74 L783.54 105.11 L785.88 103.48 L788.22 101.85 L790.58 100.22 L792.94 98.59 L795.32 96.96 L797.70 95.33 L800.09 93.70 L802.48 92.07 L804.89 90.44 L807.30 88.81 L809.72 87.18 L812.14 85.55 L814.58 83.92 L817.02 82.29 L819.46 80.66 L821.91 79.03 L824.37 77.40 L826.84 75.78 L829.31 74.15 L831.78 72.52 L834.26 70.89 L836.75 69.26 L839.24 67.63 L841.74 66.00 L844.24 64.37 L846.75 62.74 L849.26 61.11 L851.77 59.48 L854.29 57.85 L856.81 56.22 L859.33 54.59 L861.86 52.96 L864.39 51.33 L866.93 49.70 L869.46 48.07 L872.00 46.44 L874.54 44.81 L877.09 43.19 L879.63 41.56 L882.18 39.93 L884.73 38.30 L887.28 36.67 L889.83 35.04 L892.38 33.41 L894.94 31.78 L897.49 30.15 L900.05 28.52 L902.60 26.89"/>
<path d="M902.60 613.51 L899.62 611.88 L896.64 610.25 L893.66 608.62 L890.68 606.99 L887.70 605.36 L884.73 603.73 L881.75 602.10 L878.78 600.47 L875.81 598.84 L872.84 597.21 L869.87 595.59 L866.90 593.96 L863.94 592.33 L860.98 590.70 L858.02 589.07 L855.07 587.44 L852.12 585.81 L849.18 584.18 L846.23 582.55 L843.30 580.92 L840.36 579.29 L837.44 577.66 L834.51 576.03 L831.60 574.40 L828.68 572.77 L825.78 571.14 L822.88 569.51 L819.98 567.88 L817.09 566.25 L814.21 564.62 L811.33 563.00 L808.47 561.37 L805.61 559.74 L802.75 558.11 L799.91 556.48 L797.07 554.85 L794.24 553.22 L791.41 551.59 L788.60 549.96 L785.80 548.33 L783.00 546.70 L780.21 545.07 L777.44 543.44 L774.67 541.81 L771.91 540.18 L769.16 538.55 L766.42 536.92 L763.69 535.29 L760.98 533.66 L758.27 532.03 L755.58 530.41 L752.89 528.78 L750.22 527.15 L747.56 525.52 L744.91 523.89 L742.27 522.26 L739.64 520.63 L737.03 519.00 L734.43 517.37 L731.84 515.74 L729.27 514.11 L726.71 512.48 L724.16 510.85 L721.63 509.22 L719.11 507.59 L716.60 505.96 L714.11 504.33 L711.63 502.70 L709.17 501.07 L706.72 499.44 L704.28 497.82 L701.86 496.19 L699.46 494.56 L697.07 492.93 L694.70 491.30 L692.34 489.67 L690.00 488.04 L687.68 486.41 L685.37 484.78 L683.08 483.15 L680.81 481.52 L678.55 479.89 L676.31 478.26 L674.08 476.63 L671.88 475.00 L669.69 473.37 L667.52 471.74 L665.37 470.11 L663.23 468.48 L661.11 466.86 L659.02 465.23 L656.94 463.60 L654.88 461.97 L652.83 460.34 L650.81 458.71 L648.81 457.08 L646.82 455.45 L644.86 453.82 L642.91 452.19 L640.99 450.56 L639.08 448.93 L637.19 447.30 L635.33 445.67 L633.48 444.04 L631.66 442.41 L629.86 440.78 L628.07 439.15 L626.31 437.52 L624.57 435.89 L622.85 434.26 L621.15 432.64 L619.47 431.01 L617.82 429.38 L616.18 427.75 L614.57 426.12 L612.98 424.49 L611.41 422.86 L609.87 421.23 L608.34 419.60 L606.84 417.97 L605.36 416.34 L603.91 414.71 L602.47 413.08 L601.06 411.45 L599.67 409.82 L598.31 408.19 L596.97 406.56 L595.65 404.93 L594.36 403.30 L593.08 401.67 L591.84 400.05 L590.61 398.42 L589.41 396.79 L588.24 395.16 L587.08 393.53 L585.96 391.90 L584.85 390.27 L583.77 388.64 L582.71 387.01 L581.68 385.38 L580.68 383.75 L579.69 382.12 L578.74 380.49 L577.80 378.86 L576.89 377.23 L576.01 375.60 L575.15 373.97 L574.32 372.34 L573.51 370.71 L572.72 369.08 L571.97 367.46 L571.23 365.83 L570.52 364.20 L569.84 362.57 L569.18 360.94 L568.55 359.31 L567.94 357.68 L567.36 356.05 L566.81 354.42 L566.28 352.79 L565.77 351.16 L565.29 349.53 L564.84 347.90 L564.41 346.27 L564.01 344.64 L563.63 343.01 L563.28 341.38 L562.96 339.75 L562.66 338.12 L562.39 336.50 L562.14 334.87 L561.92 333.24 L561.72 331.61 L561.56 329.98 L561.41 328.35 L561.30 326.72 L561.20 325.09 L561.14 323.46 L561.10 321.83 L561.09 320.20 L561.10 318.57 L561.14 316.94 L561.20 315.31 L561.30 313.68 L561.41 312.05 L561.56 310.42 L561.72 308.79 L561.92 307.16 L562.14 305.53 L562.39 303.90 L562.66 302.28 L562.96 300.65 L563.28 299.02 L563.63 297.39 L564.01 295.76 L564.41 294.13 L564.84 292.50 L565.29 290.87 L565.77 289.24 L566.28 287.61 L566.81 285.98 L567.36 284.35 L567.94 282.72 L568.55 281.09 L569.18 279.46 L569.84 277.83 L570.52 276.20 L571.23 274.57 L571.97 272.94 L572.72 271.31 L573.51 269.69 L574.32 268.06 L575.15 266.43 L576.01 264.80 L576.89 263.17 L577.80 261.54 L578.74 259.91 L579.69 258.28 L580.68 256.65 L581.68 255.02 L582.71 253.39 L583.77 251.76 L584.85 250.13 L585.96 248.50 L587.08 246.87 L588.24 245.24 L589.41 243.61 L590.61 241.98 L591.84 240.35 L593.08 238.72 L594.36 237.10 L595.65 235.47 L596.97 233.84 L598.31 232.21 L599.67 230.58 L601.06 228.95 L602.47 227.32 L603.91 225.69 L605.36 224.06 L606.84 222.43 L608.34 220.80 L609.87 219.17 L611.41 217.54 L612.98 215.91 L614.57 214.28 L616.18 212.65 L617.82 211.02 L619.47 209.39 L621.15 207.76 L622.85 206.13 L624.57 204.51 L626.31 202.88 L628.07 201.25 L629.86 199.62 L631.66 197.99 L633.48 196.36 L635.33 194.73 L637.19 193.10 L639.08 191.47 L640.99 189.84 L642.91 188.21 L644.86 186.58 L646.82 184.95 L648.81 183.32 L650.81 181.69 L652.83 180.06 L654.88 178.43 L656.94 176.80 L659.02 175.17 L661.11 173.54 L663.23 171.92 L665.37 170.29 L667.52 168.66 L669.69 167.03 L671.88 165.40 L674.08 163.77 L676.31 162.14 L678.55 160.51 L680.81 158.88 L683.08 157.25 L685.37 155.62 L687.68 153.99 L690.00 152.36 L692.34 150.73 L694.70 149.10 L697.07 147.47 L699.46 145.84 L701.86 144.21 L704.28 142.58 L706.72 140.95 L709.17 139.33 L711.63 137.70 L714.11 136.07 L716.60 134.44 L719.11 132.81 L721.63 131.18 L724.16 129.55 L726.71 127.92 L729.27 126.29 L731.84 124.66 L734.43 123.03 L737.03 121.40 L739.64 119.77 L742.27 118.14 L744.91 116.51 L747.56 114.88 L750.22 113.25 L752.89 111.62 L755.58 109.99 L758.27 108.37 L760.98 106.74 L763.69 105.11 L766.42 103.48 L769.16 101.85 L771.91 100.22 L774.67 98.59 L777.44 96.96 L780.21 95.33 L783.00 93.70 L785.80 92.07 L788.60 90.44 L791.41 88.81 L794.24 87.18 L797.07 85.55 L799.91 83.92 L802.75 82.29 L805.61 80.66 L808.47 79.03 L811.33 77.40 L814.21 75.78 L817.09 74.15 L819.98 72.52 L822.88 70.89 L825.78 69.26 L828.68 67.63 L831.60 66.00 L834.51 64.37 L837.44 62.74 L840.36 61.11 L843.30 59.48 L846.23 57.85 L849.18 56.22 L852.12 54.59 L855.07 52.96 L858.02 51.33 L860.98 49.70 L863.94 48.07 L866.90 46.44 L869.87 44.81 L872.84 43.19 L875.81 41.56 L878.78 39.93 L881.75 38.30 L884.73 36.67 L887.70 35.04 L890.68 33.41 L893.66 31.78 L896.64 30.15 L899.62 28.52 L902.60 26.89"/>
<path d="M902.60 613.51 L899.19 611.88 L895.79 610.25 L892.38 608.62 L888.98 606.99 L885.58 605.36 L882.17 603.73 L878.77 602.10 L875.37 600.47 L871.98 598.84 L868.58 597.21 L865.19 595.59 L861.80 593.96 L858.42 592.33 L855.03 590.70 L851.66 589.07 L848.28 587.44 L844.91 585.81 L841.54 584.18 L838.18 582.55 L834.83 580.92 L831.47 579.29 L828.13 577.66 L824.79 576.03 L821.45 574.40 L818.12 572.77 L814.80 571.14 L811.49 569.51 L808.18 567.88 L804.88 566.25 L801.58 564.62 L798.30 563.00 L795.02 561.37 L791.75 559.74 L788.49 558.11 L785.23 556.48 L781.99 554.85 L778.76 553.22 L775.53 551.59 L772.32 549.96 L769.11 548.33 L765.91 546.70 L762.73 545.07 L759.55 543.44 L756.39 541.81 L753.24 540.18 L750.10 538.55 L746.97 536.92 L743.85 535.29 L740.75 533.66 L737.65 532.03 L734.57 530.41 L731.50 528.78 L728.45 527.15 L725.41 525.52 L722.38 523.89 L719.37 522.26 L716.36 520.63 L713.38 519.00 L710.41 517.37 L707.45 515.74 L704.51 514.11 L701.58 512.48 L698.67 510.85 L695.77 509.22 L692.89 507.59 L690.03 505.96 L687.18 504.33 L684.35 502.70 L681.53 501.07 L678.73 499.44 L675.95 497.82 L673.19 496.19 L670.44 494.56 L667.71 492.93 L665.00 491.30 L662.31 489.67 L659.63 488.04 L656.98 486.41 L654.34 484.78 L651.72 483.15 L649.12 481.52 L646.54 479.89 L643.98 478.26 L641.44 476.63 L638.92 475.00 L636.42 473.37 L633.94 471.74 L631.47 470.11 L629.04 468.48 L626.62 466.86 L624.22 465.23 L621.84 463.60 L619.49 461.97 L617.15 460.34 L614.84 458.71 L612.55 457.08 L610.28 455.45 L608.04 453.82 L605.81 452.19 L603.61 450.56 L601.43 448.93 L599.28 447.30 L597.15 445.67 L595.04 444.04 L592.95 442.41 L590.89 440.78 L588.85 439.15 L586.84 437.52 L584.85 435.89 L582.88 434.26 L580.94 432.64 L579.03 431.01 L577.13 429.38 L575.27 427.75 L573.42 426.12 L571.61 424.49 L569.81 422.86 L568.05 421.23 L566.31 419.60 L564.59 417.97 L562.90 416.34 L561.24 414.71 L559.60 413.08 L557.99 411.45 L556.40 409.82 L554.84 408.19 L553.31 406.56 L551.80 404.93 L550.32 403.30 L548.87 401.67 L547.44 400.05 L546.04 398.42 L544.67 396.79 L543.33 395.16 L542.01 393.53 L540.72 391.90 L539.46 390.27 L538.22 388.64 L537.02 387.01 L535.84 385.38 L534.69 383.75 L533.56 382.12 L532.47 380.49 L531.40 378.86 L530.36 377.23 L529.35 375.60 L528.37 373.97 L527.42 372.34 L526.50 370.71 L525.60 369.08 L524.73 367.46 L523.89 365.83 L523.08 364.20 L522.30 362.57 L521.55 360.94 L520.83 359.31 L520.14 357.68 L519.47 356.05 L518.84 354.42 L518.23 352.79 L517.65 351.16 L517.11 349.53 L516.59 347.90 L516.10 346.27 L515.64 344.64 L515.21 343.01 L514.81 341.38 L514.44 339.75 L514.10 338.12 L513.79 336.50 L513.50 334.87 L513.25 333.24 L513.03 331.61 L512.83 329.98 L512.67 328.35 L512.54 326.72 L512.43 325.09 L512.36 323.46 L512.31 321.83 L512.30 320.20 L512.31 318.57 L512.36 316.94 L512.43 315.31 L512.54 313.68 L512.67 312.05 L512.83 310.42 L513.03 308.79 L513.25 307.16 L513.50 305.53 L513.79 303.90 L514.10 302.28 L514.44 300.65 L514.81 299.02 L515.21 297.39 L515.64 295.76 L516.10 294.13 L516.59 292.50 L517.11 290.87 L517.65 289.24 L518.23 287.61 L518.84 285.98 L519.47 284.35 L520.14 282.72 L520.83 281.09 L521.55 279.46 L522.30 277.83 L523.08 276.20 L523.89 274.57 L524.73 272.94 L525.60 271.31 L526.50 269.69 L527.42 268.06 L528.37 266.43 L529.35 264.80 L530.36 263.17 L531.40 261.54 L532.47 259.91 L533.56 258.28 L534.69 256.65 L535.84 255.02 L537.02 253.39 L538.22 251.76 L539.46 250.13 L540.72 248.50 L542.01 246.87 L543.33 245.24 L544.67 243.61 L546.04 241.98 L547.44 240.35 L548.87 238.72 L550.32 237.10 L551.80 235.47 L553.31 233.84 L554.84 232.21 L556.40 230.58 L557.99 228.95 L559.60 227.32 L561.24 225.69 L562.90 224.06 L564.59 222.43 L566.31 220.80 L568.05 219.17 L569.81 217.54 L571.61 215.91 L573.42 214.28 L575.27 212.65 L577.13 211.02 L579.03 209.39 L580.94 207.76 L582.88 206.13 L584.85 204.51 L586.84 202.88 L588.85 201.25 L590.89 199.62 L592.95 197.99 L595.04 196.36 L597.15 194.73 L599.28 193.10 L601.43 191.47 L603.61 189.84 L605.81 188.21 L608.04 186.58 L610.28 184.95 L612.55 183.32 L614.84 181.69 L617.15 180.06 L619.49 178.43 L621.84 176.80 L624.22 175.17 L626.62 173.54 L629.04 171.92 L631.47 170.29 L633.94 168.66 L636.42 167.03 L638.92 165.40 L641.44 163.77 L643.98 162.14 L646.54 160.51 L649.12 158.88 L651.72 157.25 L654.34 155.62 L656.98 153.99 L659.63 152.36 L662.31 150.73 L665.00 149.10 L667.71 147.47 L670.44 145.84 L673.19 144.21 L675.95 142.58 L678.73 140.95 L681.53 139.33 L684.35 137.70 L687.18 136.07 L690.03 134.44 L692.89 132.81 L695.77 131.18 L698.67 129.55 L701.58 127.92 L704.51 126.29 L707.45 124.66 L710.41 123.03 L713.38 121.40 L716.36 119.77 L719.37 118.14 L722.38 116.51 L725.41 114.88 L728.45 113.25 L731.50 111.62 L734.57 109.99 L737.65 108.37 L740.75 106.74 L743.85 105.11 L746.97 103.48 L750.10 101.85 L753.24 100.22 L756.39 98.59 L759.55 96.96 L762.73 95.33 L765.91 93.70 L769.11 92.07 L772.32 90.44 L775.53 88.81 L778.76 87.18 L781.99 85.55 L785.23 83.92 L788.49 82.29 L791.75 80.66 L795.02 79.03 L798.30 77.40 L801.58 75.78 L804.88 74.15 L808.18 72.52 L811.49 70.89 L814.80 69.26 L818.12 67.63 L821.45 66.00 L824.79 64.37 L828.13 62.74 L831.47 61.11 L834.83 59.48 L838.18 57.85 L841.54 56.22 L844.91 54.59 L848.28 52.96 L851.66 51.33 L855.03 49.70 L858.42 48.07 L861.80 46.44 L865.19 44.81 L868.58 43.19 L871.98 41.56 L875.37 39.93 L878.77 38.30 L882.17 36.67 L885.58 35.04 L888.98 33.41 L892.38 31.78 L895.79 30.15 L899.19 28.52 L902.60 26.89"/>
<path d="M902.60 613.51 L898.77 611.88 L894.94 610.25 L891.11 608.62 L887.28 606.99 L883.45 605.36 L879.62 603.73 L875.79 602.10 L871.97 600.47 L868.15 598.84 L864.33 597.21 L860.52 595.59 L856.70 593.96 L852.89 592.33 L849.09 590.70 L845.29 589.07 L841.49 587.44 L837.70 585.81 L833.91 584.18 L830.13 582.55 L826.35 580.92 L822.58 579.29 L818.82 577.66 L815.06 576.03 L811.31 574.40 L807.56 572.77 L803.83 571.14 L800.10 569.51 L796.38 567.88 L792.66 566.25 L788.96 564.62 L785.26 563.00 L781.57 561.37 L777.89 559.74 L774.22 558.11 L770.56 556.48 L766.91 554.85 L763.28 553.22 L759.65 551.59 L756.03 549.96 L752.42 548.33 L748.83 546.70 L745.25 545.07 L741.67 543.44 L738.11 541.81 L734.57 540.18 L731.03 538.55 L727.51 536.92 L724.01 535.29 L720.51 533.66 L717.03 532.03 L713.57 530.41 L710.12 528.78 L706.68 527.15 L703.26 525.52 L699.85 523.89 L696.46 522.26 L693.09 520.63 L689.73 519.00 L686.38 517.37 L683.06 515.74 L679.75 514.11 L676.45 512.48 L673.18 510.85 L669.92 509.22 L666.68 507.59 L663.46 505.96 L660.25 504.33 L657.07 502.70 L653.90 501.07 L650.75 499.44 L647.62 497.82 L644.51 496.19 L641.42 494.56 L638.35 492.93 L635.30 491.30 L632.27 489.67 L629.26 488.04 L626.27 486.41 L623.31 484.78 L620.36 483.15 L617.44 481.52 L614.53 479.89 L611.65 478.26 L608.79 476.63 L605.96 475.00 L603.14 473.37 L600.35 471.74 L597.58 470.11 L594.84 468.48 L592.12 466.86 L589.42 465.23 L586.75 463.60 L584.10 461.97 L581.47 460.34 L578.87 458.71 L576.29 457.08 L573.74 455.45 L571.22 453.82 L568.72 452.19 L566.24 450.56 L563.79 448.93 L561.36 447.30 L558.97 445.67 L556.59 444.04 L554.25 442.41 L551.93 440.78 L549.64 439.15 L547.37 437.52 L545.13 435.89 L542.92 434.26 L540.74 432.64 L538.58 431.01 L536.45 429.38 L534.35 427.75 L532.28 426.12 L530.23 424.49 L528.22 422.86 L526.23 421.23 L524.27 419.60 L522.34 417.97 L520.44 416.34 L518.57 414.71 L516.72 413.08 L514.91 411.45 L513.12 409.82 L511.37 408.19 L509.65 406.56 L507.95 404.93 L506.29 403.30 L504.65 401.67 L503.05 400.05 L501.47 398.42 L499.93 396.79 L498.42 395.16 L496.94 393.53 L495.49 391.90 L494.07 390.27 L492.68 388.64 L491.32 387.01 L489.99 385.38 L488.70 383.75 L487.43 382.12 L486.20 380.49 L485.00 378.86 L483.83 377.23 L482.70 375.60 L481.59 373.97 L480.52 372.34 L479.48 370.71 L478.47 369.08 L477.50 367.46 L476.56 365.83 L475.64 364.20 L474.77 362.57 L473.92 360.94 L473.11 359.31 L472.33 357.68 L471.58 356.05 L470.87 354.42 L470.18 352.79 L469.53 351.16 L468.92 349.53 L468.34 347.90 L467.79 346.27 L467.27 344.64 L466.79 343.01 L466.34 341.38 L465.92 339.75 L465.53 338.12 L465.18 336.50 L464.87 334.87 L464.58 333.24 L464.33 331.61 L464.11 329.98 L463.93 328.35 L463.78 326.72 L463.66 325.09 L463.58 323.46 L463.53 321.83 L463.51 320.20 L463.53 318.57 L463.58 316.94 L463.66 315.31 L463.78 313.68 L463.93 312.05 L464.11 310.42 L464.33 308.79 L464.58 307.16 L464.87 305.53 L465.18 303.90 L465.53 302.28 L465.92 300.65 L466.34 299.02 L466.79 297.39 L467.27 295.76 L467.79 294.13 L468.34 292.50 L468.92 290.87 L469.53 289.24 L470.18 287.61 L470.87 285.98 L471.58 284.35 L472.33 282.72 L473.11 281.09 L473.92 279.46 L474.77 277.83 L475.64 276.20 L476.56 274.57 L477.50 272.94 L478.47 271.31 L479.48 269.69 L480.52 268.06 L481.59 266.43 L482.70 264.80 L483.83 263.17 L485.00 261.54 L486.20 259.91 L487.43 258.28 L488.70 256.65 L489.99 255.02 L491.32 253.39 L492.68 251.76 L494.07 250.13 L495.49 248.50 L496.94 246.87 L498.42 245.24 L499.93 243.61 L501.47 241.98 L503.05 240.35 L504.65 238.72 L506.29 237.10 L507.95 235.47 L509.65 233.84 L511.37 232.21 L513.12 230.58 L514.91 228.95 L516.72 227.32 L518.57 225.69 L520.44 224.06 L522.34 222.43 L524.27 220.80 L526.23 219.17 L528.22 217.54 L530.23 215.91 L532.28 214.28 L534.35 212.65 L536.45 211.02 L538.58 209.39 L540.74 207.76 L542.92 206.13 L545.13 204.51 L547.37 202.88 L549.64 201.25 L551.93 199.62 L554.25 197.99 L556.59 196.36 L558.97 194.73 L561.36 193.10 L563.79 191.47 L566.24 189.84 L568.72 188.21 L571.22 186.58 L573.74 184.95 L576.29 183.32 L578.87 181.69 L581.47 180.06 L584.10 178.43 L586.75 176.80 L589.42 175.17 L592.12 173.54 L594.84 171.92 L597.58 170.29 L600.35 168.66 L603.14 167.03 L605.96 165.40 L608.79 163.77 L611.65 162.14 L614.53 160.51 L617.44 158.88 L620.36 157.25 L623.31 155.62 L626.27 153.99 L629.26 152.36 L632.27 150.73 L635.30 149.10 L638.35 147.47 L641.42 145.84 L644.51 144.21 L647.62 142.58 L650.75 140.95 L653.90 139.33 L657.07 137.70 L660.25 136.07 L663.46 134.44 L666.68 132.81 L669.92 131.18 L673.18 129.55 L676.45 127.92 L679.75 126.29 L683.06 124.66 L686.38 123.03 L689.73 121.40 L693.09 119.77 L696.46 118.14 L699.85 116.51 L703.26 114.88 L706.68 113.25 L710.12 111.62 L713.57 109.99 L717.03 108.37 L720.51 106.74 L724.01 105.11 L727.51 103.48 L731.03 101.85 L734.57 100.22 L738.11 98.59 L741.67 96.96 L745.25 95.33 L748.83 93.70 L752.42 92.07 L756.03 90.44 L759.65 88.81 L763.28 87.18 L766.91 85.55 L770.56 83.92 L774.22 82.29 L777.89 80.66 L781.57 79.03 L785.26 77.40 L788.96 75.78 L792.66 74.15 L796.38 72.52 L800.10 70.89 L803.83 69.26 L807.56 67.63 L811.31 66.00 L815.06 64.37 L818.82 62.74 L822.58 61.11 L826.35 59.48 L830.13 57.85 L833.91 56.22 L837.70 54.59 L841.49 52.96 L845.29 51.33 L849.09 49.70 L852.89 48.07 L856.70 46.44 L860.52 44.81 L864.33 43.19 L868.15 41.56 L871.97 39.93 L875.79 38.30 L879.62 36.67 L883.45 35.04 L887.28 33.41 L891.11 31.78 L894.94 30.15 L898.77 28.52 L902.60 26.89"/>
<path d="M902.60 613.51 L898.34 611.88 L894.09 610.25 L889.83 608.62 L885.57 606.99 L881.32 605.36 L877.07 603.73 L872.82 602.10 L868.57 600.47 L864.32 598.84 L860.08 597.21 L855.84 595.59 L851.60 593.96 L847.37 592.33 L843.14 590.70 L838.92 589.07 L834.70 587.44 L830.49 585.81 L826.28 584.18 L822.08 582.55 L817.88 580.92 L813.69 579.29 L809.51 577.66 L805.33 576.03 L801.17 574.40 L797.00 572.77 L792.85 571.14 L788.71 569.51 L784.57 567.88 L780.45 566.25 L776.33 564.62 L772.22 563.00 L768.12 561.37 L764.04 559.74 L759.96 558.11 L755.89 556.48 L751.84 554.85 L747.79 553.22 L743.76 551.59 L739.74 549.96 L735.74 548.33 L731.74 546.70 L727.76 545.07 L723.79 543.44 L719.84 541.81 L715.90 540.18 L711.97 538.55 L708.06 536.92 L704.16 535.29 L700.28 533.66 L696.42 532.03 L692.56 530.41 L688.73 528.78 L684.91 527.15 L681.11 525.52 L677.32 523.89 L673.56 522.26 L669.81 520.63 L666.07 519.00 L662.36 517.37 L658.66 515.74 L654.98 514.11 L651.33 512.48 L647.69 510.85 L644.07 509.22 L640.46 507.59 L636.88 505.96 L633.32 504.33 L629.78 502.70 L626.26 501.07 L622.77 499.44 L619.29 497.82 L615.83 496.19 L612.40 494.56 L608.99 492.93 L605.60 491.30 L602.23 489.67 L598.89 488.04 L595.57 486.41 L592.27 484.78 L589.00 483.15 L585.75 481.52 L582.53 479.89 L579.32 478.26 L576.15 476.63 L573.00 475.00 L569.87 473.37 L566.77 471.74 L563.69 470.11 L560.64 468.48 L557.62 466.86 L554.62 465.23 L551.65 463.60 L548.71 461.97 L545.79 460.34 L542.90 458.71 L540.04 457.08 L537.20 455.45 L534.40 453.82 L531.62 452.19 L528.87 450.56 L526.14 448.93 L523.45 447.30 L520.79 445.67 L518.15 444.04 L515.54 442.41 L512.97 440.78 L510.42 439.15 L507.90 437.52 L505.41 435.89 L502.96 434.26 L500.53 432.64 L498.13 431.01 L495.77 429.38 L493.43 427.75 L491.13 426.12 L488.86 424.49 L486.62 422.86 L484.41 421.23 L482.23 419.60 L480.09 417.97 L477.98 416.34 L475.89 414.71 L473.85 413.08 L471.83 411.45 L469.85 409.82 L467.90 408.19 L465.98 406.56 L464.10 404.93 L462.25 403.30 L460.44 401.67 L458.65 400.05 L456.90 398.42 L455.19 396.79 L453.51 395.16 L451.86 393.53 L450.25 391.90 L448.67 390.27 L447.13 388.64 L445.62 387.01 L444.15 385.38 L442.71 383.75 L441.31 382.12 L439.94 380.49 L438.60 378.86 L437.31 377.23 L436.04 375.60 L434.82 373.97 L433.62 372.34 L432.47 370.71 L431.35 369.08 L430.26 367.46 L429.22 365.83 L428.21 364.20 L427.23 362.57 L426.29 360.94 L425.39 359.31 L424.52 357.68 L423.69 356.05 L422.89 354.42 L422.14 352.79 L421.42 351.16 L420.73 349.53 L420.08 347.90 L419.47 346.27 L418.90 344.64 L418.36 343.01 L417.86 341.38 L417.40 339.75 L416.97 338.12 L416.58 336.50 L416.23 334.87 L415.91 333.24 L415.63 331.61 L415.39 329.98 L415.19 328.35 L415.02 326.72 L414.89 325.09 L414.80 323.46 L414.74 321.83 L414.73 320.20 L414.74 318.57 L414.80 316.94 L414.89 315.31 L415.02 313.68 L415.19 312.05 L415.39 310.42 L415.63 308.79 L415.91 307.16 L416.23 305.53 L416.58 303.90 L416.97 302.28 L417.40 300.65 L417.86 299.02 L418.36 297.39 L418.90 295.76 L419.47 294.13 L420.08 292.50 L420.73 290.87 L421.42 289.24 L422.14 287.61 L422.89 285.98 L423.69 284.35 L424.52 282.72 L425.39 281.09 L426.29 279.46 L427.23 277.83 L428.21 276.20 L429.22 274.57 L430.26 272.94 L431.35 271.31 L432.47 269.69 L433.62 268.06 L434.82 266.43 L436.04 264.80 L437.31 263.17 L438.60 261.54 L439.94 259.91 L441.31 258.28 L442.71 256.65 L444.15 255.02 L445.62 253.39 L447.13 251.76 L448.67 250.13 L450.25 248.50 L451.86 246.87 L453.51 245.24 L455.19 243.61 L456.90 241.98 L458.65 240.35 L460.44 238.72 L462.25 237.10 L464.10 235.47 L465.98 233.84 L467.90 232.21 L469.85 230.58 L471.83 228.95 L473.85 227.32 L475.89 225.69 L477.98 224.06 L480.09 222.43 L482.23 220.80 L484.41 219.17 L486.62 217.54 L488.86 215.91 L491.13 214.28 L493.43 212.65 L495.77 211.02 L498.13 209.39 L500.53 207.76 L502.96 206.13 L505.41 204.51 L507.90 202.88 L510.42 201.25 L512.97 199.62 L515.54 197.99 L518.15 196.36 L520.79 194.73 L523.45 193.10 L526.14 191.47 L528.87 189.84 L531.62 188.21 L534.40 186.58 L537.20 184.95 L540.04 183.32 L542.90 181.69 L545.79 180.06 L548.71 178.43 L551.65 176.80 L554.62 175.17 L557.62 173.54 L560.64 171.92 L563.69 170.29 L566.77 168.66 L569.87 167.03 L573.00 165.40 L576.15 163.77 L579.32 162.14 L582.53 160.51 L585.75 158.88 L589.00 157.25 L592.27 155.62 L595.57 153.99 L598.89 152.36 L602.23 150.73 L605.60 149.10 L608.99 147.47 L612.40 145.84 L615.83 144.21 L619.29 142.58 L622.77 140.95 L626.26 139.33 L629.78 137.70 L633.32 136.07 L636.88 134.44 L640.46 132.81 L644.07 131.18 L647.69 129.55 L651.33 127.92 L654.98 126.29 L658.66 124.66 L662.36 123.03 L666.07 121.40 L669.81 119.77 L673.56 118.14 L677.32 116.51 L681.11 114.88 L684.91 113.25 L688.73 111.62 L692.56 109.99 L696.42 108.37 L700.28 106.74 L704.16 105.11 L708.06 103.48 L711.97 101.85 L715.90 100.22 L719.84 98.59 L723.79 96.96 L727.76 95.33 L731.74 93.70 L735.74 92.07 L739.74 90.44 L743.76 88.81 L747.79 87.18 L751.84 85.55 L755.89 83.92 L759.96 82.29 L764.04 80.66 L768.12 79.03 L772.22 77.40 L776.33 75.78 L780.45 74.15 L784.57 72.52 L788.71 70.89 L792.85 69.26 L797.00 67.63 L801.17 66.00 L805.33 64.37 L809.51 62.74 L813.69 61.11 L817.88 59.48 L822.08 57.85 L826.28 56.22 L830.49 54.59 L834.70 52.96 L838.92 51.33 L843.14 49.70 L847.37 48.07 L851.60 46.44 L855.84 44.81 L860.08 43.19 L864.32 41.56 L868.57 39.93 L872.82 38.30 L877.07 36.67 L881.32 35.04 L885.57 33.41 L889.83 31.78 L894.09 30.15 L898.34 28.52 L902.60 26.89"/>
<path d="M902.60 613.51 L897.92 611.88 L893.23 610.25 L888.55 608.62 L883.87 606.99 L879.19 605.36 L874.51 603.73 L869.84 602.10 L865.16 600.47 L860.49 598.84 L855.83 597.21 L851.16 595.59 L846.50 593.96 L841.85 592.33 L837.20 590.70 L832.55 589.07 L827.91 587.44 L823.28 585.81 L818.65 584.18 L814.03 582.55 L809.41 580.92 L804.80 579.29 L800.20 577.66 L795.61 576.03 L791.02 574.40 L786.44 572.77 L781.88 571.14 L777.32 569.51 L772.77 567.88 L768.23 566.25 L763.70 564.62 L759.18 563.00 L754.68 561.37 L750.18 559.74 L745.70 558.11 L741.22 556.48 L736.76 554.85 L732.31 553.22 L727.88 551.59 L723.46 549.96 L719.05 548.33 L714.66 546.70 L710.28 545.07 L705.91 543.44 L701.56 541.81 L697.23 540.18 L692.91 538.55 L688.61 536.92 L684.32 535.29 L680.05 533.66 L675.80 532.03 L671.56 530.41 L667.34 528.78 L663.14 527.15 L658.96 525.52 L654.80 523.89 L650.65 522.26 L646.53 520.63 L642.42 519.00 L638.33 517.37 L634.27 515.74 L630.22 514.11 L626.20 512.48 L622.19 510.85 L618.21 509.22 L614.25 507.59 L610.31 505.96 L606.40 504.33 L602.50 502.70 L598.63 501.07 L594.78 499.44 L590.96 497.82 L587.16 496.19 L583.38 494.56 L579.63 492.93 L575.90 491.30 L572.20 489.67 L568.52 488.04 L564.87 486.41 L561.24 484.78 L557.64 483.15 L554.07 481.52 L550.52 479.89 L547.00 478.26 L543.50 476.63 L540.04 475.00 L536.60 473.37 L533.19 471.74 L529.80 470.11 L526.45 468.48 L523.12 466.86 L519.83 465.23 L516.56 463.60 L513.32 461.97 L510.11 460.34 L506.93 458.71 L503.78 457.08 L500.66 455.45 L497.58 453.82 L494.52 452.19 L491.49 450.56 L488.50 448.93 L485.53 447.30 L482.60 445.67 L479.70 444.04 L476.84 442.41 L474.00 440.78 L471.20 439.15 L468.43 437.52 L465.69 435.89 L462.99 434.26 L460.32 432.64 L457.69 431.01 L455.08 429.38 L452.52 427.75 L449.98 426.12 L447.48 424.49 L445.02 422.86 L442.59 421.23 L440.20 419.60 L437.84 417.97 L435.51 416.34 L433.22 414.71 L430.97 413.08 L428.76 411.45 L426.57 409.82 L424.43 408.19 L422.32 406.56 L420.25 404.93 L418.22 403.30 L416.22 401.67 L414.26 400.05 L412.33 398.42 L410.45 396.79 L408.60 395.16 L406.79 393.53 L405.02 391.90 L403.28 390.27 L401.58 388.64 L399.92 387.01 L398.30 385.38 L396.72 383.75 L395.18 382.12 L393.67 380.49 L392.20 378.86 L390.78 377.23 L389.39 375.60 L388.04 373.97 L386.73 372.34 L385.46 370.71 L384.22 369.08 L383.03 367.46 L381.88 365.83 L380.77 364.20 L379.69 362.57 L378.66 360.94 L377.66 359.31 L376.71 357.68 L375.80 356.05 L374.92 354.42 L374.09 352.79 L373.30 351.16 L372.54 349.53 L371.83 347.90 L371.16 346.27 L370.53 344.64 L369.94 343.01 L369.39 341.38 L368.88 339.75 L368.41 338.12 L367.98 336.50 L367.59 334.87 L367.24 333.24 L366.94 331.61 L366.67 329.98 L366.45 328.35 L366.26 326.72 L366.12 325.09 L366.02 323.46 L365.96 321.83 L365.94 320.20 L365.96 318.57 L366.02 316.94 L366.12 315.31 L366.26 313.68 L366.45 312.05 L366.67 310.42 L366.94 308.79 L367.24 307.16 L367.59 305.53 L367.98 303.90 L368.41 302.28 L368.88 300.65 L369.39 299.02 L369.94 297.39 L370.53 295.76 L371.16 294.13 L371.83 292.50 L372.54 290.87 L373.30 289.24 L374.09 287.61 L374.92 285.98 L375.80 284.35 L376.71 282.72 L377.66 281.09 L378.66 279.46 L379.69 277.83 L380.77 276.20 L381.88 274.57 L383.03 272.94 L384.22 271.31 L385.46 269.69 L386.73 268.06 L388.04 266.43 L389.39 264.80 L390.78 263.17 L392.20 261.54 L393.67 259.91 L395.18 258.28 L396.72 256.65 L398.30 255.02 L399.92 253.39 L401.58 251.76 L403.28 250.13 L405.02 248.50 L406.79 246.87 L408.60 245.24 L410.45 243.61 L412.33 241.98 L414.26 240.35 L416.22 238.72 L418.22 237.10 L420.25 235.47 L422.32 233.84 L424.43 232.21 L426.57 230.58 L428.76 228.95 L430.97 227.32 L433.22 225.69 L435.51 224.06 L437.84 222.43 L440.20 220.80 L442.59 219.17 L445.02 217.54 L447.48 215.91 L449.98 214.28 L452.52 212.65 L455.08 211.02 L457.69 209.39 L460.32 207.76 L462.99 206.13 L465.69 204.51 L468.43 202.88 L471.20 201.25 L474.00 199.62 L476.84 197.99 L479.70 196.36 L482.60 194.73 L485.53 193.10 L488.50 191.47 L491.49 189.84 L494.52 188.21 L497.58 186.58 L500.66 184.95 L503.78 183.32 L506.93 181.69 L510.11 180.06 L513.32 178.43 L516.56 176.80 L519.83 175.17 L523.12 173.54 L526.45 171.92 L529.80 170.29 L533.19 168.66 L536.60 167.03 L540.04 165.40 L543.50 163.77 L547.00 162.14 L550.52 160.51 L554.07 158.88 L557.64 157.25 L561.24 155.62 L564.87 153.99 L568.52 152.36 L572.20 150.73 L575.90 149.10 L579.63 147.47 L583.38 145.84 L587.16 144.21 L590.96 142.58 L594.78 140.95 L598.63 139.33 L602.50 137.70 L606.40 136.07 L610.31 134.44 L614.25 132.81 L618.21 131.18 L622.19 129.55 L626.20 127.92 L630.22 126.29 L634.27 124.66 L638.33 123.03 L642.42 121.40 L646.53 119.77 L650.65 118.14 L654.80 116.51 L658.96 114.88 L663.14 113.25 L667.34 111.62 L671.56 109.99 L675.80 108.37 L680.05 106.74 L684.32 105.11 L688.61 103.48 L692.91 101.85 L697.23 100.22 L701.56 98.59 L705.91 96.96 L710.28 95.33 L714.66 93.70 L719.05 92.07 L723.46 90.44 L727.88 88.81 L732.31 87.18 L736.76 85.55 L741.22 83.92 L745.70 82.29 L750.18 80.66 L754.68 79.03 L759.18 77.40 L763.70 75.78 L768.23 74.15 L772.77 72.52 L777.32 70.89 L781.88 69.26 L786.44 67.63 L791.02 66.00 L795.61 64.37 L800.20 62.74 L804.80 61.11 L809.41 59.48 L814.03 57.85 L818.65 56.22 L823.28 54.59 L827.91 52.96 L832.55 51.33 L837.20 49.70 L841.85 48.07 L846.50 46.44 L851.16 44.81 L855.83 43.19 L860.49 41.56 L865.16 39.93 L869.84 38.30 L874.51 36.67 L879.19 35.04 L883.87 33.41 L888.55 31.78 L893.23 30.15 L897.92 28.52 L902.60 26.89"/>
<path d="M902.60 613.51 L897.49 611.88 L892.38 610.25 L887.27 608.62 L882.17 606.99 L877.06 605.36 L871.96 603.73 L866.86 602.10 L861.76 600.47 L856.67 598.84 L851.57 597.21 L846.49 595.59 L841.40 593.96 L836.33 592.33 L831.25 590.70 L826.18 589.07 L821.12 587.44 L816.06 585.81 L811.02 584.18 L805.97 582.55 L800.94 580.92 L795.91 579.29 L790.89 577.66 L785.88 576.03 L780.88 574.40 L775.89 572.77 L770.90 571.14 L765.93 569.51 L760.97 567.88 L756.02 566.25 L751.07 564.62 L746.15 563.00 L741.23 561.37 L736.32 559.74 L731.43 558.11 L726.55 556.48 L721.69 554.85 L716.83 553.22 L712.00 551.59 L707.17 549.96 L702.36 548.33 L697.57 546.70 L692.79 545.07 L688.03 543.44 L683.29 541.81 L678.56 540.18 L673.85 538.55 L669.15 536.92 L664.48 535.29 L659.82 533.66 L655.18 532.03 L650.56 530.41 L645.96 528.78 L641.37 527.15 L636.81 525.52 L632.27 523.89 L627.75 522.26 L623.25 520.63 L618.77 519.00 L614.31 517.37 L609.88 515.74 L605.46 514.11 L601.07 512.48 L596.70 510.85 L592.36 509.22 L588.04 507.59 L583.74 505.96 L579.47 504.33 L575.22 502.70 L571.00 501.07 L566.80 499.44 L562.63 497.82 L558.48 496.19 L554.36 494.56 L550.27 492.93 L546.20 491.30 L542.16 489.67 L538.15 488.04 L534.16 486.41 L530.21 484.78 L526.28 483.15 L522.38 481.52 L518.51 479.89 L514.67 478.26 L510.86 476.63 L507.08 475.00 L503.32 473.37 L499.60 471.74 L495.91 470.11 L492.25 468.48 L488.62 466.86 L485.03 465.23 L481.46 463.60 L477.93 461.97 L474.43 460.34 L470.96 458.71 L467.53 457.08 L464.12 455.45 L460.76 453.82 L457.42 452.19 L454.12 450.56 L450.85 448.93 L447.62 447.30 L444.42 445.67 L441.26 444.04 L438.13 442.41 L435.04 440.78 L431.98 439.15 L428.96 437.52 L425.98 435.89 L423.03 434.26 L420.12 432.64 L417.24 431.01 L414.40 429.38 L411.60 427.75 L408.84 426.12 L406.11 424.49 L403.42 422.86 L400.77 421.23 L398.16 419.60 L395.59 417.97 L393.05 416.34 L390.55 414.71 L388.10 413.08 L385.68 411.45 L383.30 409.82 L380.96 408.19 L378.66 406.56 L376.40 404.93 L374.18 403.30 L372.00 401.67 L369.86 400.05 L367.76 398.42 L365.71 396.79 L363.69 395.16 L361.71 393.53 L359.78 391.90 L357.89 390.27 L356.04 388.64 L354.23 387.01 L352.46 385.38 L350.73 383.75 L349.05 382.12 L347.40 380.49 L345.80 378.86 L344.25 377.23 L342.73 375.60 L341.26 373.97 L339.83 372.34 L338.44 370.71 L337.10 369.08 L335.80 367.46 L334.54 365.83 L333.33 364.20 L332.16 362.57 L331.03 360.94 L329.94 359.31 L328.90 357.68 L327.91 356.05 L326.95 354.42 L326.04 352.79 L325.18 351.16 L324.36 349.53 L323.58 347.90 L322.85 346.27 L322.16 344.64 L321.51 343.01 L320.91 341.38 L320.36 339.75 L319.85 338.12 L319.38 336.50 L318.95 334.87 L318.58 333.24 L318.24 331.61 L317.95 329.98 L317.71 328.35 L317.51 326.72 L317.35 325.09 L317.24 323.46 L317.17 321.83 L317.15 320.20 L317.17 318.57 L317.24 316.94 L317.35 315.31 L317.51 313.68 L317.71 312.05 L317.95 310.42 L318.24 308.79 L318.58 307.16 L318.95 305.53 L319.38 303.90 L319.85 302.28 L320.36 300.65 L320.91 299.02 L321.51 297.39 L322.16 295.76 L322.85 294.13 L323.58 292.50 L324.36 290.87 L325.18 289.24 L326.04 287.61 L326.95 285.98 L327.91 284.35 L328.90 282.72 L329.94 281.09 L331.03 279.46 L332.16 277.83 L333.33 276.20 L334.54 274.57 L335.80 272.94 L337.10 271.31 L338.44 269.69 L339.83 268.06 L341.26 266.43 L342.73 264.80 L344.25 263.17 L345.80 261.54 L347.40 259.91 L349.05 258.28 L350.73 256.65 L352.46 255.02 L354.23 253.39 L356.04 251.76 L357.89 250.13 L359.78 248.50 L361.71 246.87 L363.69 245.24 L365.71 243.61 L367.76 241.98 L369.86 240.35 L372.00 238.72 L374.18 237.10 L376.40 235.47 L378.66 233.84 L380.96 232.21 L383.30 230.58 L385.68 228.95 L388.10 227.32 L390.55 225.69 L393.05 224.06 L395.59 222.43 L398.16 220.80 L400.77 219.17 L403.42 217.54 L406.11 215.91 L408.84 214.28 L411.60 212.65 L414.40 211.02 L417.24 209.39 L420.12 207.76 L423.03 206.13 L425.98 204.51 L428.96 202.88 L431.98 201.25 L435.04 199.62 L438.13 197.99 L441.26 196.36 L444.42 194.73 L447.62 193.10 L450.85 191.47 L454.12 189.84 L457.42 188.21 L460.76 186.58 L464.12 184.95 L467.53 183.32 L470.96 181.69 L474.43 180.06 L477.93 178.43 L481.46 176.80 L485.03 175.17 L488.62 173.54 L492.25 171.92 L495.91 170.29 L499.60 168.66 L503.32 167.03 L507.08 165.40 L510.86 163.77 L514.67 162.14 L518.51 160.51 L522.38 158.88 L526.28 157.25 L530.21 155.62 L534.16 153.99 L538.15 152.36 L542.16 150.73 L546.20 149.10 L550.27 147.47 L554.36 145.84 L558.48 144.21 L562.63 142.58 L566.80 140.95 L571.00 139.33 L575.22 137.70 L579.47 136.07 L583.74 134.44 L588.04 132.81 L592.36 131.18 L596.70 129.55 L601.07 127.92 L605.46 126.29 L609.88 124.66 L614.31 123.03 L618.77 121.40 L623.25 119.77 L627.75 118.14 L632.27 116.51 L636.81 114.88 L641.37 113.25 L645.96 111.62 L650.56 109.99 L655.18 108.37 L659.82 106.74 L664.48 105.11 L669.15 103.48 L673.85 101.85 L678.56 100.22 L683.29 98.59 L688.03 96.96 L692.79 95.33 L697.57 93.70 L702.36 92.07 L707.17 90.44 L712.00 88.81 L716.83 87.18 L721.69 85.55 L726.55 83.92 L731.43 82.29 L736.32 80.66 L741.23 79.03 L746.15 77.40 L751.07 75.78 L756.02 74.15 L760.97 72.52 L765.93 70.89 L770.90 69.26 L775.89 67.63 L780.88 66.00 L785.88 64.37 L790.89 62.74 L795.91 61.11 L800.94 59.48 L805.97 57.85 L811.02 56.22 L816.06 54.59 L821.12 52.96 L826.18 51.33 L831.25 49.70 L836.33 48.07 L841.40 46.44 L846.49 44.81 L851.57 43.19 L856.67 41.56 L861.76 39.93 L866.86 38.30 L871.96 36.67 L877.06 35.04 L882.17 33.41 L887.27 31.78 L892.38 30.15 L897.49 28.52 L902.60 26.89"/>
<path d="M1054.13 564.62 L1053.28 564.62 L1052.44 564.62 L1051.60 564.62 L1050.76 564.62 L1049.92 564.62 L1049.07 564.62 L1048.23 564.62 L1047.39 564.62 L1046.55 564.62 L1045.71 564.62 L1044.87 564.62 L1044.02 564.62 L1043.18 564.62 L1042.34 564.62 L1041.50 564.62 L1040.66 564.62 L1039.81 564.62 L1038.97 564.62 L1038.13 564.62 L1037.29 564.62 L1036.45 564.62 L1035.61 564.62 L1034.76 564.62 L1033.92 564.62 L1033.08 564.62 L1032.24 564.62 L1031.40 564.62 L1030.55 564.62 L1029.71 564.62 L1028.87 564.62 L1028.03 564.62 L1027.19 564.62 L1026.35 564.62 L1025.50 564.62 L1024.66 564.62 L1023.82 564.62 L1022.98 564.62 L1022.14 564.62 L1021.30 564.62 L1020.45 564.62 L1019.61 564.62 L1018.77 564.62 L1017.93 564.62 L1017.09 564.62 L1016.24 564.62 L1015.40 564.62 L1014.56 564.62 L1013.72 564.62 L1012.88 564.62 L1012.04 564.62 L1011.19 564.62 L1010.35 564.62 L1009.51 564.62 L1008.67 564.62 L1007.83 564.62 L1006.98 564.62 L1006.14 564.62 L1005.30 564.62 L1004.46 564.62 L1003.62 564.62 L1002.78 564.62 L1001.93 564.62 L1001.09 564.62 L1000.25 564.62 L999.41 564.62 L998.57 564.62 L997.72 564.62 L996.88 564.62 L996.04 564.62 L995.20 564.62 L994.36 564.62 L993.52 564.62 L992.67 564.62 L991.83 564.62 L990.99 564.62 L990.15 564.62 L989.31 564.62 L988.46 564.62 L987.62 564.62 L986.78 564.62 L985.94 564.62 L985.10 564.62 L984.26 564.62 L983.41 564.62 L982.57 564.62 L981.73 564.62 L980.89 564.62 L980.05 564.62 L979.20 564.62 L978.36 564.62 L977.52 564.62 L976.68 564.62 L975.84 564.62 L975.00 564.62 L974.15 564.62 L973.31 564.62 L972.47 564.62 L971.63 564.62 L970.79 564.62 L969.94 564.62 L969.10 564.62 L968.26 564.62 L967.42 564.62 L966.58 564.62 L965.74 564.62 L964.89 564.62 L964.05 564.62 L963.21 564.62 L962.37 564.62 L961.53 564.62 L960.68 564.62 L959.84 564.62 L959.00 564.62 L958.16 564.62 L957.32 564.62 L956.48 564.62 L955.63 564.62 L954.79 564.62 L953.95 564.62 L953.11 564.62 L952.27 564.62 L951.42 564.62 L950.58 564.62 L949.74 564.62 L948.90 564.62 L948.06 564.62 L947.22 564.62 L946.37 564.62 L945.53 564.62 L944.69 564.62 L943.85 564.62 L943.01 564.62 L942.17 564.62 L941.32 564.62 L940.48 564.62 L939.64 564.62 L938.80 564.62 L937.96 564.62 L937.11 564.62 L936.27 564.62 L935.43 564.62 L934.59 564.62 L933.75 564.62 L932.91 564.62 L932.06 564.62 L931.22 564.62 L930.38 564.62 L929.54 564.62 L928.70 564.62 L927.85 564.62 L927.01 564.62 L926.17 564.62 L925.33 564.62 L924.49 564.62 L923.65 564.62 L922.80 564.62 L921.96 564.62 L921.12 564.62 L920.28 564.62 L919.44 564.62 L918.59 564.62 L917.75 564.62 L916.91 564.62 L916.07 564.62 L915.23 564.62 L914.39 564.62 L913.54 564.62 L912.70 564.62 L911.86 564.62 L911.02 564.62 L910.18 564.62 L909.33 564.62 L908.49 564.62 L907.65 564.62 L906.81 564.62 L905.97 564.62 L905.13 564.62 L904.28 564.62 L903.44 564.62 L902.60 564.62 L901.76 564.62 L900.92 564.62 L900.07 564.62 L899.23 564.62 L898.39 564.62 L897.55 564.62 L896.71 564.62 L895.87 564.62 L895.02 564.62 L894.18 564.62 L893.34 564.62 L892.50 564.62 L891.66 564.62 L890.81 564.62 L889.97 564.62 L889.13 564.62 L888.29 564.62 L887.45 564.62 L886.61 564.62 L885.76 564.62 L884.92 564.62 L884.08 564.62 L883.24 564.62 L882.40 564.62 L881.55 564.62 L880.71 564.62 L879.87 564.62 L879.03 564.62 L878.19 564.62 L877.35 564.62 L876.50 564.62 L875.66 564.62 L874.82 564.62 L873.98 564.62 L873.14 564.62 L872.29 564.62 L871.45 564.62 L870.61 564.62 L869.77 564.62 L868.93 564.62 L868.09 564.62 L867.24 564.62 L866.40 564.62 L865.56 564.62 L864.72 564.62 L863.88 564.62 L863.03 564.62 L862.19 564.62 L861.35 564.62 L860.51 564.62 L859.67 564.62 L858.83 564.62 L857.98 564.62 L857.14 564.62 L856.30 564.62 L855.46 564.62 L854.62 564.62 L853.78 564.62 L852.93 564.62 L852.09 564.62 L851.25 564.62 L850.41 564.62 L849.57 564.62 L848.72 564.62 L847.88 564.62 L847.04 564.62 L846.20 564.62 L845.36 564.62 L844.52 564.62 L843.67 564.62 L842.83 564.62 L841.99 564.62 L841.15 564.62 L840.31 564.62 L839.46 564.62 L838.62 564.62 L837.78 564.62 L836.94 564.62 L836.10 564.62 L835.26 564.62 L834.41 564.62 L833.57 564.62 L832.73 564.62 L831.89 564.62 L831.05 564.62 L830.20 564.62 L829.36 564.62 L828.52 564.62 L827.68 564.62 L826.84 564.62 L826.00 564.62 L825.15 564.62 L824.31 564.62 L823.47 564.62 L822.63 564.62 L821.79 564.62 L820.94 564.62 L820.10 564.62 L819.26 564.62 L818.42 564.62 L817.58 564.62 L816.74 564.62 L815.89 564.62 L815.05 564.62 L814.21 564.62 L813.37 564.62 L812.53 564.62 L811.68 564.62 L810.84 564.62 L810.00 564.62 L809.16 564.62 L808.32 564.62 L807.48 564.62 L806.63 564.62 L805.79 564.62 L804.95 564.62 L804.11 564.62 L803.27 564.62 L802.42 564.62 L801.58 564.62 L800.74 564.62 L799.90 564.62 L799.06 564.62 L798.22 564.62 L797.37 564.62 L796.53 564.62 L795.69 564.62 L794.85 564.62 L794.01 564.62 L793.16 564.62 L792.32 564.62 L791.48 564.62 L790.64 564.62 L789.80 564.62 L788.96 564.62 L788.11 564.62 L787.27 564.62 L786.43 564.62 L785.59 564.62 L784.75 564.62 L783.90 564.62 L783.06 564.62 L782.22 564.62 L781.38 564.62 L780.54 564.62 L779.70 564.62 L778.85 564.62 L778.01 564.62 L777.17 564.62 L776.33 564.62 L775.49 564.62 L774.65 564.62 L773.80 564.62 L772.96 564.62 L772.12 564.62 L771.28 564.62 L770.44 564.62 L769.59 564.62 L768.75 564.62 L767.91 564.62 L767.07 564.62 L766.23 564.62 L765.39 564.62 L764.54 564.62 L763.70 564.62 L762.86 564.62 L762.02 564.62 L761.18 564.62 L760.33 564.62 L759.49 564.62 L758.65 564.62 L757.81 564.62 L756.97 564.62 L756.13 564.62 L755.28 564.62 L754.44 564.62 L753.60 564.62 L752.76 564.62 L751.92 564.62 L751.07 564.62"/>
<path d="M1195.33 515.74 L1193.70 515.74 L1192.07 515.74 L1190.45 515.74 L1188.82 515.74 L1187.19 515.74 L1185.57 515.74 L1183.94 515.74 L1182.32 515.74 L1180.69 515.74 L1179.06 515.74 L1177.44 515.74 L1175.81 515.74 L1174.18 515.74 L1172.56 515.74 L1170.93 515.74 L1169.31 515.74 L1167.68 515.74 L1166.05 515.74 L1164.43 515.74 L1162.80 515.74 L1161.17 515.74 L1159.55 515.74 L1157.92 515.74 L1156.30 515.74 L1154.67 515.74 L1153.04 515.74 L1151.42 515.74 L1149.79 515.74 L1148.16 515.74 L1146.54 515.74 L1144.91 515.74 L1143.29 515.74 L1141.66 515.74 L1140.03 515.74 L1138.41 515.74 L1136.78 515.74 L1135.15 515.74 L1133.53 515.74 L1131.90 515.74 L1130.28 515.74 L1128.65 515.74 L1127.02 515.74 L1125.40 515.74 L1123.77 515.74 L1122.14 515.74 L1120.52 515.74 L1118.89 515.74 L1117.27 515.74 L1115.64 515.74 L1114.01 515.74 L1112.39 515.74 L1110.76 515.74 L1109.13 515.74 L1107.51 515.74 L1105.88 515.74 L1104.26 515.74 L1102.63 515.74 L1101.00 515.74 L1099.38 515.74 L1097.75 515.74 L1096.12 515.74 L1094.50 515.74 L1092.87 515.74 L1091.25 515.74 L1089.62 515.74 L1087.99 515.74 L1086.37 515.74 L1084.74 515.74 L1083.11 515.74 L1081.49 515.74 L1079.86 515.74 L1078.24 515.74 L1076.61 515.74 L1074.98 515.74 L1073.36 515.74 L1071.73 515.74 L1070.10 515.74 L1068.48 515.74 L1066.85 515.74 L1065.23 515.74 L1063.60 515.74 L1061.97 515.74 L1060.35 515.74 L1058.72 515.74 L1057.09 515.74 L1055.47 515.74 L1053.84 515.74 L1052.22 515.74 L1050.59 515.74 L1048.96 515.74 L1047.34 515.74 L1045.71 515.74 L1044.08 515.74 L1042.46 515.74 L1040.83 515.74 L1039.20 515.74 L1037.58 515.74 L1035.95 515.74 L1034.33 515.74 L1032.70 515.74 L1031.07 515.74 L1029.45 515.74 L1027.82 515.74 L1026.20 515.74 L1024.57 515.74 L1022.94 515.74 L1021.32 515.74 L1019.69 515.74 L1018.06 515.74 L1016.44 515.74 L1014.81 515.74 L1013.19 515.74 L1011.56 515.74 L1009.93 515.74 L1008.31 515.74 L1006.68 515.74 L1005.05 515.74 L1003.43 515.74 L1001.80 515.74 L1000.18 515.74 L998.55 515.74 L996.92 515.74 L995.30 515.74 L993.67 515.74 L992.04 515.74 L990.42 515.74 L988.79 515.74 L987.17 515.74 L985.54 515.74 L983.91 515.74 L982.29 515.74 L980.66 515.74 L979.03 515.74 L977.41 515.74 L975.78 515.74 L974.15 515.74 L972.53 515.74 L970.90 515.74 L969.28 515.74 L967.65 515.74 L966.02 515.74 L964.40 515.74 L962.77 515.74 L961.14 515.74 L959.52 515.74 L957.89 515.74 L956.27 515.74 L954.64 515.74 L953.01 515.74 L951.39 515.74 L949.76 515.74 L948.13 515.74 L946.51 515.74 L944.88 515.74 L943.26 515.74 L941.63 515.74 L940.00 515.74 L938.38 515.74 L936.75 515.74 L935.12 515.74 L933.50 515.74 L931.87 515.74 L930.25 515.74 L928.62 515.74 L926.99 515.74 L925.37 515.74 L923.74 515.74 L922.12 515.74 L920.49 515.74 L918.86 515.74 L917.24 515.74 L915.61 515.74 L913.98 515.74 L912.36 515.74 L910.73 515.74 L909.11 515.74 L907.48 515.74 L905.85 515.74 L904.23 515.74 L902.60 515.74 L900.97 515.74 L899.35 515.74 L897.72 515.74 L896.10 515.74 L894.47 515.74 L892.84 515.74 L891.22 515.74 L889.59 515.74 L887.96 515.74 L886.34 515.74 L884.71 515.74 L883.09 515.74 L881.46 515.74 L879.83 515.74 L878.21 515.74 L876.58 515.74 L874.95 515.74 L873.33 515.74 L871.70 515.74 L870.08 515.74 L868.45 515.74 L866.82 515.74 L865.20 515.74 L863.57 515.74 L861.94 515.74 L860.32 515.74 L858.69 515.74 L857.07 515.74 L855.44 515.74 L853.81 515.74 L852.19 515.74 L850.56 515.74 L848.93 515.74 L847.31 515.74 L845.68 515.74 L844.06 515.74 L842.43 515.74 L840.80 515.74 L839.18 515.74 L837.55 515.74 L835.92 515.74 L834.30 515.74 L832.67 515.74 L831.05 515.74 L829.42 515.74 L827.79 515.74 L826.17 515.74 L824.54 515.74 L822.91 515.74 L821.29 515.74 L819.66 515.74 L818.03 515.74 L816.41 515.74 L814.78 515.74 L813.16 515.74 L811.53 515.74 L809.90 515.74 L808.28 515.74 L806.65 515.74 L805.02 515.74 L803.40 515.74 L801.77 515.74 L800.15 515.74 L798.52 515.74 L796.89 515.74 L795.27 515.74 L793.64 515.74 L792.01 515.74 L790.39 515.74 L788.76 515.74 L787.14 515.74 L785.51 515.74 L783.88 515.74 L782.26 515.74 L780.63 515.74 L779.00 515.74 L777.38 515.74 L775.75 515.74 L774.13 515.74 L772.50 515.74 L770.87 515.74 L769.25 515.74 L767.62 515.74 L766.00 515.74 L764.37 515.74 L762.74 515.74 L761.12 515.74 L759.49 515.74 L757.86 515.74 L756.24 515.74 L754.61 515.74 L752.99 515.74 L751.36 515.74 L749.73 515.74 L748.11 515.74 L746.48 515.74 L744.85 515.74 L743.23 515.74 L741.60 515.74 L739.98 515.74 L738.35 515.74 L736.72 515.74 L735.10 515.74 L733.47 515.74 L731.84 515.74 L730.22 515.74 L728.59 515.74 L726.97 515.74 L725.34 515.74 L723.71 515.74 L722.09 515.74 L720.46 515.74 L718.83 515.74 L717.21 515.74 L715.58 515.74 L713.95 515.74 L712.33 515.74 L710.70 515.74 L709.08 515.74 L707.45 515.74 L705.82 515.74 L704.20 515.74 L702.57 515.74 L700.94 515.74 L699.32 515.74 L697.69 515.74 L696.07 515.74 L694.44 515.74 L692.81 515.74 L691.19 515.74 L689.56 515.74 L687.93 515.74 L686.31 515.74 L684.68 515.74 L683.06 515.74 L681.43 515.74 L679.80 515.74 L678.18 515.74 L676.55 515.74 L674.92 515.74 L673.30 515.74 L671.67 515.74 L670.05 515.74 L668.42 515.74 L666.79 515.74 L665.17 515.74 L663.54 515.74 L661.91 515.74 L660.29 515.74 L658.66 515.74 L657.04 515.74 L655.41 515.74 L653.78 515.74 L652.16 515.74 L650.53 515.74 L648.90 515.74 L647.28 515.74 L645.65 515.74 L644.03 515.74 L642.40 515.74 L640.77 515.74 L639.15 515.74 L637.52 515.74 L635.89 515.74 L634.27 515.74 L632.64 515.74 L631.02 515.74 L629.39 515.74 L627.76 515.74 L626.14 515.74 L624.51 515.74 L622.88 515.74 L621.26 515.74 L619.63 515.74 L618.01 515.74 L616.38 515.74 L614.75 515.74 L613.13 515.74 L611.50 515.74 L609.88 515.74"/>
<path d="M1316.58 466.86 L1314.28 466.86 L1311.98 466.86 L1309.68 466.86 L1307.38 466.86 L1305.08 466.86 L1302.78 466.86 L1300.48 466.86 L1298.18 466.86 L1295.88 466.86 L1293.58 466.86 L1291.28 466.86 L1288.98 466.86 L1286.68 466.86 L1284.38 466.86 L1282.08 466.86 L1279.78 466.86 L1277.48 466.86 L1275.18 466.86 L1272.88 466.86 L1270.58 466.86 L1268.28 466.86 L1265.98 466.86 L1263.68 466.86 L1261.38 466.86 L1259.08 466.86 L1256.78 466.86 L1254.48 466.86 L1252.18 466.86 L1249.88 466.86 L1247.58 466.86 L1245.28 466.86 L1242.98 466.86 L1240.68 466.86 L1238.38 466.86 L1236.08 466.86 L1233.78 466.86 L1231.48 466.86 L1229.18 466.86 L1226.88 466.86 L1224.58 466.86 L1222.28 466.86 L1219.98 466.86 L1217.68 466.86 L1215.38 466.86 L1213.08 466.86 L1210.78 466.86 L1208.48 466.86 L1206.18 466.86 L1203.88 466.86 L1201.58 466.86 L1199.28 466.86 L1196.98 466.86 L1194.68 466.86 L1192.38 466.86 L1190.08 466.86 L1187.78 466.86 L1185.48 466.86 L1183.18 466.86 L1180.88 466.86 L1178.58 466.86 L1176.28 466.86 L1173.98 466.86 L1171.68 466.86 L1169.38 466.86 L1167.08 466.86 L1164.78 466.86 L1162.48 466.86 L1160.18 466.86 L1157.88 466.86 L1155.59 466.86 L1153.29 466.86 L1150.99 466.86 L1148.69 466.86 L1146.39 466.86 L1144.09 466.86 L1141.79 466.86 L1139.49 466.86 L1137.19 466.86 L1134.89 466.86 L1132.59 466.86 L1130.29 466.86 L1127.99 466.86 L1125.69 466.86 L1123.39 466.86 L1121.09 466.86 L1118.79 466.86 L1116.49 466.86 L1114.19 466.86 L1111.89 466.86 L1109.59 466.86 L1107.29 466.86 L1104.99 466.86 L1102.69 466.86 L1100.39 466.86 L1098.09 466.86 L1095.79 466.86 L1093.49 466.86 L1091.19 466.86 L1088.89 466.86 L1086.59 466.86 L1084.29 466.86 L1081.99 466.86 L1079.69 466.86 L1077.39 466.86 L1075.09 466.86 L1072.79 466.86 L1070.49 466.86 L1068.19 466.86 L1065.89 466.86 L1063.59 466.86 L1061.29 466.86 L1058.99 466.86 L1056.69 466.86 L1054.39 466.86 L1052.09 466.86 L1049.79 466.86 L1047.49 466.86 L1045.19 466.86 L1042.89 466.86 L1040.59 466.86 L1038.29 466.86 L1035.99 466.86 L1033.69 466.86 L1031.39 466.86 L1029.09 466.86 L1026.79 466.86 L1024.49 466.86 L1022.19 466.86 L1019.89 466.86 L1017.59 466.86 L1015.29 466.86 L1012.99 466.86 L1010.69 466.86 L1008.39 466.86 L1006.09 466.86 L1003.79 466.86 L1001.49 466.86 L999.19 466.86 L996.89 466.86 L994.59 466.86 L992.29 466.86 L989.99 466.86 L987.69 466.86 L985.40 466.86 L983.10 466.86 L980.80 466.86 L978.50 466.86 L976.20 466.86 L973.90 466.86 L971.60 466.86 L969.30 466.86 L967.00 466.86 L964.70 466.86 L962.40 466.86 L960.10 466.86 L957.80 466.86 L955.50 466.86 L953.20 466.86 L950.90 466.86 L948.60 466.86 L946.30 466.86 L944.00 466.86 L941.70 466.86 L939.40 466.86 L937.10 466.86 L934.80 466.86 L932.50 466.86 L930.20 466.86 L927.90 466.86 L925.60 466.86 L923.30 466.86 L921.00 466.86 L918.70 466.86 L916.40 466.86 L914.10 466.86 L911.80 466.86 L909.50 466.86 L907.20 466.86 L904.90 466.86 L902.60 466.86 L900.30 466.86 L898.00 466.86 L895.70 466.86 L893.40 466.86 L891.10 466.86 L888.80 466.86 L886.50 466.86 L884.20 466.86 L881.90 466.86 L879.60 466.86 L877.30 466.86 L875.00 466.86 L872.70 466.86 L870.40 466.86 L868.10 466.86 L865.80 466.86 L863.50 466.86 L861.20 466.86 L858.90 466.86 L856.60 466.86 L854.30 466.86 L852.00 466.86 L849.70 466.86 L847.40 466.86 L845.10 466.86 L842.80 466.86 L840.50 466.86 L838.20 466.86 L835.90 466.86 L833.60 466.86 L831.30 466.86 L829.00 466.86 L826.70 466.86 L824.40 466.86 L822.10 466.86 L819.80 466.86 L817.51 466.86 L815.21 466.86 L812.91 466.86 L810.61 466.86 L808.31 466.86 L806.01 466.86 L803.71 466.86 L801.41 466.86 L799.11 466.86 L796.81 466.86 L794.51 466.86 L792.21 466.86 L789.91 466.86 L787.61 466.86 L785.31 466.86 L783.01 466.86 L780.71 466.86 L778.41 466.86 L776.11 466.86 L773.81 466.86 L771.51 466.86 L769.21 466.86 L766.91 466.86 L764.61 466.86 L762.31 466.86 L760.01 466.86 L757.71 466.86 L755.41 466.86 L753.11 466.86 L750.81 466.86 L748.51 466.86 L746.21 466.86 L743.91 466.86 L741.61 466.86 L739.31 466.86 L737.01 466.86 L734.71 466.86 L732.41 466.86 L730.11 466.86 L727.81 466.86 L725.51 466.86 L723.21 466.86 L720.91 466.86 L718.61 466.86 L716.31 466.86 L714.01 466.86 L711.71 466.86 L709.41 466.86 L707.11 466.86 L704.81 466.86 L702.51 466.86 L700.21 466.86 L697.91 466.86 L695.61 466.86 L693.31 466.86 L691.01 466.86 L688.71 466.86 L686.41 466.86 L684.11 466.86 L681.81 466.86 L679.51 466.86 L677.21 466.86 L674.91 466.86 L672.61 466.86 L670.31 466.86 L668.01 466.86 L665.71 466.86 L663.41 466.86 L661.11 466.86 L658.81 466.86 L656.51 466.86 L654.21 466.86 L651.91 466.86 L649.61 466.86 L647.32 466.86 L645.02 466.86 L642.72 466.86 L640.42 466.86 L638.12 466.86 L635.82 466.86 L633.52 466.86 L631.22 466.86 L628.92 466.86 L626.62 466.86 L624.32 466.86 L622.02 466.86 L619.72 466.86 L617.42 466.86 L615.12 466.86 L612.82 466.86 L610.52 466.86 L608.22 466.86 L605.92 466.86 L603.62 466.86 L601.32 466.86 L599.02 466.86 L596.72 466.86 L594.42 466.86 L592.12 466.86 L589.82 466.86 L587.52 466.86 L585.22 466.86 L582.92 466.86 L580.62 466.86 L578.32 466.86 L576.02 466.86 L573.72 466.86 L571.42 466.86 L569.12 466.86 L566.82 466.86 L564.52 466.86 L562.22 466.86 L559.92 466.86 L557.62 466.86 L555.32 466.86 L553.02 466.86 L550.72 466.86 L548.42 466.86 L546.12 466.86 L543.82 466.86 L541.52 466.86 L539.22 466.86 L536.92 466.86 L534.62 466.86 L532.32 466.86 L530.02 466.86 L527.72 466.86 L525.42 466.86 L523.12 466.86 L520.82 466.86 L518.52 466.86 L516.22 466.86 L513.92 466.86 L511.62 466.86 L509.32 466.86 L507.02 466.86 L504.72 466.86 L502.42 466.86 L500.12 466.86 L497.82 466.86 L495.52 466.86 L493.22 466.86 L490.92 466.86 L488.62 466.86"/>
<path d="M1409.61 417.97 L1406.80 417.97 L1403.98 417.97 L1401.16 417.97 L1398.35 417.97 L1395.53 417.97 L1392.71 417.97 L1389.90 417.97 L1387.08 417.97 L1384.26 417.97 L1381.45 417.97 L1378.63 417.97 L1375.81 417.97 L1373.00 417.97 L1370.18 417.97 L1367.36 417.97 L1364.55 417.97 L1361.73 417.97 L1358.91 417.97 L1356.10 417.97 L1353.28 417.97 L1350.46 417.97 L1347.65 417.97 L1344.83 417.97 L1342.01 417.97 L1339.20 417.97 L1336.38 417.97 L1333.56 417.97 L1330.75 417.97 L1327.93 417.97 L1325.11 417.97 L1322.30 417.97 L1319.48 417.97 L1316.66 417.97 L1313.85 417.97 L1311.03 417.97 L1308.21 417.97 L1305.39 417.97 L1302.58 417.97 L1299.76 417.97 L1296.94 417.97 L1294.13 417.97 L1291.31 417.97 L1288.49 417.97 L1285.68 417.97 L1282.86 417.97 L1280.04 417.97 L1277.23 417.97 L1274.41 417.97 L1271.59 417.97 L1268.78 417.97 L1265.96 417.97 L1263.14 417.97 L1260.33 417.97 L1257.51 417.97 L1254.69 417.97 L1251.88 417.97 L1249.06 417.97 L1246.24 417.97 L1243.43 417.97 L1240.61 417.97 L1237.79 417.97 L1234.98 417.97 L1232.16 417.97 L1229.34 417.97 L1226.53 417.97 L1223.71 417.97 L1220.89 417.97 L1218.08 417.97 L1215.26 417.97 L1212.44 417.97 L1209.63 417.97 L1206.81 417.97 L1203.99 417.97 L1201.18 417.97 L1198.36 417.97 L1195.54 417.97 L1192.73 417.97 L1189.91 417.97 L1187.09 417.97 L1184.27 417.97 L1181.46 417.97 L1178.64 417.97 L1175.82 417.97 L1173.01 417.97 L1170.19 417.97 L1167.37 417.97 L1164.56 417.97 L1161.74 417.97 L1158.92 417.97 L1156.11 417.97 L1153.29 417.97 L1150.47 417.97 L1147.66 417.97 L1144.84 417.97 L1142.02 417.97 L1139.21 417.97 L1136.39 417.97 L1133.57 417.97 L1130.76 417.97 L1127.94 417.97 L1125.12 417.97 L1122.31 417.97 L1119.49 417.97 L1116.67 417.97 L1113.86 417.97 L1111.04 417.97 L1108.22 417.97 L1105.41 417.97 L1102.59 417.97 L1099.77 417.97 L1096.96 417.97 L1094.14 417.97 L1091.32 417.97 L1088.51 417.97 L1085.69 417.97 L1082.87 417.97 L1080.06 417.97 L1077.24 417.97 L1074.42 417.97 L1071.60 417.97 L1068.79 417.97 L1065.97 417.97 L1063.15 417.97 L1060.34 417.97 L1057.52 417.97 L1054.70 417.97 L1051.89 417.97 L1049.07 417.97 L1046.25 417.97 L1043.44 417.97 L1040.62 417.97 L1037.80 417.97 L1034.99 417.97 L1032.17 417.97 L1029.35 417.97 L1026.54 417.97 L1023.72 417.97 L1020.90 417.97 L1018.09 417.97 L1015.27 417.97 L1012.45 417.97 L1009.64 417.97 L1006.82 417.97 L1004.00 417.97 L1001.19 417.97 L998.37 417.97 L995.55 417.97 L992.74 417.97 L989.92 417.97 L987.10 417.97 L984.29 417.97 L981.47 417.97 L978.65 417.97 L975.84 417.97 L973.02 417.97 L970.20 417.97 L967.39 417.97 L964.57 417.97 L961.75 417.97 L958.93 417.97 L956.12 417.97 L953.30 417.97 L950.48 417.97 L947.67 417.97 L944.85 417.97 L942.03 417.97 L939.22 417.97 L936.40 417.97 L933.58 417.97 L930.77 417.97 L927.95 417.97 L925.13 417.97 L922.32 417.97 L919.50 417.97 L916.68 417.97 L913.87 417.97 L911.05 417.97 L908.23 417.97 L905.42 417.97 L902.60 417.97 L899.78 417.97 L896.97 417.97 L894.15 417.97 L891.33 417.97 L888.52 417.97 L885.70 417.97 L882.88 417.97 L880.07 417.97 L877.25 417.97 L874.43 417.97 L871.62 417.97 L868.80 417.97 L865.98 417.97 L863.17 417.97 L860.35 417.97 L857.53 417.97 L854.72 417.97 L851.90 417.97 L849.08 417.97 L846.27 417.97 L843.45 417.97 L840.63 417.97 L837.81 417.97 L835.00 417.97 L832.18 417.97 L829.36 417.97 L826.55 417.97 L823.73 417.97 L820.91 417.97 L818.10 417.97 L815.28 417.97 L812.46 417.97 L809.65 417.97 L806.83 417.97 L804.01 417.97 L801.20 417.97 L798.38 417.97 L795.56 417.97 L792.75 417.97 L789.93 417.97 L787.11 417.97 L784.30 417.97 L781.48 417.97 L778.66 417.97 L775.85 417.97 L773.03 417.97 L770.21 417.97 L767.40 417.97 L764.58 417.97 L761.76 417.97 L758.95 417.97 L756.13 417.97 L753.31 417.97 L750.50 417.97 L747.68 417.97 L744.86 417.97 L742.05 417.97 L739.23 417.97 L736.41 417.97 L733.60 417.97 L730.78 417.97 L727.96 417.97 L725.14 417.97 L722.33 417.97 L719.51 417.97 L716.69 417.97 L713.88 417.97 L711.06 417.97 L708.24 417.97 L705.43 417.97 L702.61 417.97 L699.79 417.97 L696.98 417.97 L694.16 417.97 L691.34 417.97 L688.53 417.97 L685.71 417.97 L682.89 417.97 L680.08 417.97 L677.26 417.97 L674.44 417.97 L671.63 417.97 L668.81 417.97 L665.99 417.97 L663.18 417.97 L660.36 417.97 L657.54 417.97 L654.73 417.97 L651.91 417.97 L649.09 417.97 L646.28 417.97 L643.46 417.97 L640.64 417.97 L637.83 417.97 L635.01 417.97 L632.19 417.97 L629.38 417.97 L626.56 417.97 L623.74 417.97 L620.93 417.97 L618.11 417.97 L615.29 417.97 L612.47 417.97 L609.66 417.97 L606.84 417.97 L604.02 417.97 L601.21 417.97 L598.39 417.97 L595.57 417.97 L592.76 417.97 L589.94 417.97 L587.12 417.97 L584.31 417.97 L581.49 417.97 L578.67 417.97 L575.86 417.97 L573.04 417.97 L570.22 417.97 L567.41 417.97 L564.59 417.97 L561.77 417.97 L558.96 417.97 L556.14 417.97 L553.32 417.97 L550.51 417.97 L547.69 417.97 L544.87 417.97 L542.06 417.97 L539.24 417.97 L536.42 417.97 L533.61 417.97 L530.79 417.97 L527.97 417.97 L525.16 417.97 L522.34 417.97 L519.52 417.97 L516.71 417.97 L513.89 417.97 L511.07 417.97 L508.26 417.97 L505.44 417.97 L502.62 417.97 L499.81 417.97 L496.99 417.97 L494.17 417.97 L491.35 417.97 L488.54 417.97 L485.72 417.97 L482.90 417.97 L480.09 417.97 L477.27 417.97 L474.45 417.97 L471.64 417.97 L468.82 417.97 L466.00 417.97 L463.19 417.97 L460.37 417.97 L457.55 417.97 L454.74 417.97 L451.92 417.97 L449.10 417.97 L446.29 417.97 L443.47 417.97 L440.65 417.97 L437.84 417.97 L435.02 417.97 L432.20 417.97 L429.39 417.97 L426.57 417.97 L423.75 417.97 L420.94 417.97 L418.12 417.97 L415.30 417.97 L412.49 417.97 L409.67 417.97 L406.85 417.97 L404.04 417.97 L401.22 417.97 L398.40 417.97 L395.59 417.97"/>
<path d="M1468.10 369.08 L1464.96 369.08 L1461.82 369.08 L1458.68 369.08 L1455.53 369.08 L1452.39 369.08 L1449.25 369.08 L1446.11 369.08 L1442.97 369.08 L1439.83 369.08 L1436.68 369.08 L1433.54 369.08 L1430.40 369.08 L1427.26 369.08 L1424.12 369.08 L1420.98 369.08 L1417.83 369.08 L1414.69 369.08 L1411.55 369.08 L1408.41 369.08 L1405.27 369.08 L1402.13 369.08 L1398.98 369.08 L1395.84 369.08 L1392.70 369.08 L1389.56 369.08 L1386.42 369.08 L1383.28 369.08 L1380.13 369.08 L1376.99 369.08 L1373.85 369.08 L1370.71 369.08 L1367.57 369.08 L1364.43 369.08 L1361.28 369.08 L1358.14 369.08 L1355.00 369.08 L1351.86 369.08 L1348.72 369.08 L1345.58 369.08 L1342.43 369.08 L1339.29 369.08 L1336.15 369.08 L1333.01 369.08 L1329.87 369.08 L1326.73 369.08 L1323.58 369.08 L1320.44 369.08 L1317.30 369.08 L1314.16 369.08 L1311.02 369.08 L1307.88 369.08 L1304.73 369.08 L1301.59 369.08 L1298.45 369.08 L1295.31 369.08 L1292.17 369.08 L1289.03 369.08 L1285.88 369.08 L1282.74 369.08 L1279.60 369.08 L1276.46 369.08 L1273.32 369.08 L1270.18 369.08 L1267.03 369.08 L1263.89 369.08 L1260.75 369.08 L1257.61 369.08 L1254.47 369.08 L1251.33 369.08 L1248.18 369.08 L1245.04 369.08 L1241.90 369.08 L1238.76 369.08 L1235.62 369.08 L1232.48 369.08 L1229.33 369.08 L1226.19 369.08 L1223.05 369.08 L1219.91 369.08 L1216.77 369.08 L1213.63 369.08 L1210.48 369.08 L1207.34 369.08 L1204.20 369.08 L1201.06 369.08 L1197.92 369.08 L1194.78 369.08 L1191.63 369.08 L1188.49 369.08 L1185.35 369.08 L1182.21 369.08 L1179.07 369.08 L1175.93 369.08 L1172.78 369.08 L1169.64 369.08 L1166.50 369.08 L1163.36 369.08 L1160.22 369.08 L1157.08 369.08 L1153.93 369.08 L1150.79 369.08 L1147.65 369.08 L1144.51 369.08 L1141.37 369.08 L1138.23 369.08 L1135.08 369.08 L1131.94 369.08 L1128.80 369.08 L1125.66 369.08 L1122.52 369.08 L1119.38 369.08 L1116.23 369.08 L1113.09 369.08 L1109.95 369.08 L1106.81 369.08 L1103.67 369.08 L1100.53 369.08 L1097.38 369.08 L1094.24 369.08 L1091.10 369.08 L1087.96 369.08 L1084.82 369.08 L1081.68 369.08 L1078.53 369.08 L1075.39 369.08 L1072.25 369.08 L1069.11 369.08 L1065.97 369.08 L1062.83 369.08 L1059.68 369.08 L1056.54 369.08 L1053.40 369.08 L1050.26 369.08 L1047.12 369.08 L1043.98 369.08 L1040.83 369.08 L1037.69 369.08 L1034.55 369.08 L1031.41 369.08 L1028.27 369.08 L1025.13 369.08 L1021.98 369.08 L1018.84 369.08 L1015.70 369.08 L1012.56 369.08 L1009.42 369.08 L1006.28 369.08 L1003.13 369.08 L999.99 369.08 L996.85 369.08 L993.71 369.08 L990.57 369.08 L987.43 369.08 L984.28 369.08 L981.14 369.08 L978.00 369.08 L974.86 369.08 L971.72 369.08 L968.58 369.08 L965.43 369.08 L962.29 369.08 L959.15 369.08 L956.01 369.08 L952.87 369.08 L949.73 369.08 L946.58 369.08 L943.44 369.08 L940.30 369.08 L937.16 369.08 L934.02 369.08 L930.88 369.08 L927.73 369.08 L924.59 369.08 L921.45 369.08 L918.31 369.08 L915.17 369.08 L912.03 369.08 L908.88 369.08 L905.74 369.08 L902.60 369.08 L899.46 369.08 L896.32 369.08 L893.17 369.08 L890.03 369.08 L886.89 369.08 L883.75 369.08 L880.61 369.08 L877.47 369.08 L874.32 369.08 L871.18 369.08 L868.04 369.08 L864.90 369.08 L861.76 369.08 L858.62 369.08 L855.47 369.08 L852.33 369.08 L849.19 369.08 L846.05 369.08 L842.91 369.08 L839.77 369.08 L836.62 369.08 L833.48 369.08 L830.34 369.08 L827.20 369.08 L824.06 369.08 L820.92 369.08 L817.77 369.08 L814.63 369.08 L811.49 369.08 L808.35 369.08 L805.21 369.08 L802.07 369.08 L798.92 369.08 L795.78 369.08 L792.64 369.08 L789.50 369.08 L786.36 369.08 L783.22 369.08 L780.07 369.08 L776.93 369.08 L773.79 369.08 L770.65 369.08 L767.51 369.08 L764.37 369.08 L761.22 369.08 L758.08 369.08 L754.94 369.08 L751.80 369.08 L748.66 369.08 L745.52 369.08 L742.37 369.08 L739.23 369.08 L736.09 369.08 L732.95 369.08 L729.81 369.08 L726.67 369.08 L723.52 369.08 L720.38 369.08 L717.24 369.08 L714.10 369.08 L710.96 369.08 L707.82 369.08 L704.67 369.08 L701.53 369.08 L698.39 369.08 L695.25 369.08 L692.11 369.08 L688.97 369.08 L685.82 369.08 L682.68 369.08 L679.54 369.08 L676.40 369.08 L673.26 369.08 L670.12 369.08 L666.97 369.08 L663.83 369.08 L660.69 369.08 L657.55 369.08 L654.41 369.08 L651.27 369.08 L648.12 369.08 L644.98 369.08 L641.84 369.08 L638.70 369.08 L635.56 369.08 L632.42 369.08 L629.27 369.08 L626.13 369.08 L622.99 369.08 L619.85 369.08 L616.71 369.08 L613.57 369.08 L610.42 369.08 L607.28 369.08 L604.14 369.08 L601.00 369.08 L597.86 369.08 L594.72 369.08 L591.57 369.08 L588.43 369.08 L585.29 369.08 L582.15 369.08 L579.01 369.08 L575.87 369.08 L572.72 369.08 L569.58 369.08 L566.44 369.08 L563.30 369.08 L560.16 369.08 L557.02 369.08 L553.87 369.08 L550.73 369.08 L547.59 369.08 L544.45 369.08 L541.31 369.08 L538.17 369.08 L535.02 369.08 L531.88 369.08 L528.74 369.08 L525.60 369.08 L522.46 369.08 L519.32 369.08 L516.17 369.08 L513.03 369.08 L509.89 369.08 L506.75 369.08 L503.61 369.08 L500.47 369.08 L497.32 369.08 L494.18 369.08 L491.04 369.08 L487.90 369.08 L484.76 369.08 L481.62 369.08 L478.47 369.08 L475.33 369.08 L472.19 369.08 L469.05 369.08 L465.91 369.08 L462.77 369.08 L459.62 369.08 L456.48 369.08 L453.34 369.08 L450.20 369.08 L447.06 369.08 L443.92 369.08 L440.77 369.08 L437.63 369.08 L434.49 369.08 L431.35 369.08 L428.21 369.08 L425.07 369.08 L421.92 369.08 L418.78 369.08 L415.64 369.08 L412.50 369.08 L409.36 369.08 L406.22 369.08 L403.07 369.08 L399.93 369.08 L396.79 369.08 L393.65 369.08 L390.51 369.08 L387.37 369.08 L384.22 369.08 L381.08 369.08 L377.94 369.08 L374.80 369.08 L371.66 369.08 L368.52 369.08 L365.37 369.08 L362.23 369.08 L359.09 369.08 L355.95 369.08 L352.81 369.08 L349.67 369.08 L346.52 369.08 L343.38 369.08 L340.24 369.08 L337.10 369.08"/>
<path d="M1488.05 320.20 L1484.80 320.20 L1481.55 320.20 L1478.29 320.20 L1475.04 320.20 L1471.79 320.20 L1468.53 320.20 L1465.28 320.20 L1462.03 320.20 L1458.78 320.20 L1455.53 320.20 L1452.27 320.20 L1449.02 320.20 L1445.77 320.20 L1442.51 320.20 L1439.26 320.20 L1436.01 320.20 L1432.76 320.20 L1429.51 320.20 L1426.25 320.20 L1423.00 320.20 L1419.75 320.20 L1416.49 320.20 L1413.24 320.20 L1409.99 320.20 L1406.74 320.20 L1403.49 320.20 L1400.23 320.20 L1396.98 320.20 L1393.73 320.20 L1390.47 320.20 L1387.22 320.20 L1383.97 320.20 L1380.72 320.20 L1377.47 320.20 L1374.21 320.20 L1370.96 320.20 L1367.71 320.20 L1364.45 320.20 L1361.20 320.20 L1357.95 320.20 L1354.70 320.20 L1351.44 320.20 L1348.19 320.20 L1344.94 320.20 L1341.69 320.20 L1338.43 320.20 L1335.18 320.20 L1331.93 320.20 L1328.68 320.20 L1325.42 320.20 L1322.17 320.20 L1318.92 320.20 L1315.67 320.20 L1312.41 320.20 L1309.16 320.20 L1305.91 320.20 L1302.66 320.20 L1299.40 320.20 L1296.15 320.20 L1292.90 320.20 L1289.65 320.20 L1286.39 320.20 L1283.14 320.20 L1279.89 320.20 L1276.64 320.20 L1273.38 320.20 L1270.13 320.20 L1266.88 320.20 L1263.63 320.20 L1260.38 320.20 L1257.12 320.20 L1253.87 320.20 L1250.62 320.20 L1247.37 320.20 L1244.11 320.20 L1240.86 320.20 L1237.61 320.20 L1234.36 320.20 L1231.10 320.20 L1227.85 320.20 L1224.60 320.20 L1221.35 320.20 L1218.09 320.20 L1214.84 320.20 L1211.59 320.20 L1208.34 320.20 L1205.08 320.20 L1201.83 320.20 L1198.58 320.20 L1195.33 320.20 L1192.07 320.20 L1188.82 320.20 L1185.57 320.20 L1182.32 320.20 L1179.06 320.20 L1175.81 320.20 L1172.56 320.20 L1169.31 320.20 L1166.05 320.20 L1162.80 320.20 L1159.55 320.20 L1156.30 320.20 L1153.04 320.20 L1149.79 320.20 L1146.54 320.20 L1143.29 320.20 L1140.03 320.20 L1136.78 320.20 L1133.53 320.20 L1130.28 320.20 L1127.02 320.20 L1123.77 320.20 L1120.52 320.20 L1117.27 320.20 L1114.01 320.20 L1110.76 320.20 L1107.51 320.20 L1104.26 320.20 L1101.00 320.20 L1097.75 320.20 L1094.50 320.20 L1091.25 320.20 L1087.99 320.20 L1084.74 320.20 L1081.49 320.20 L1078.24 320.20 L1074.98 320.20 L1071.73 320.20 L1068.48 320.20 L1065.22 320.20 L1061.97 320.20 L1058.72 320.20 L1055.47 320.20 L1052.22 320.20 L1048.96 320.20 L1045.71 320.20 L1042.46 320.20 L1039.20 320.20 L1035.95 320.20 L1032.70 320.20 L1029.45 320.20 L1026.19 320.20 L1022.94 320.20 L1019.69 320.20 L1016.44 320.20 L1013.19 320.20 L1009.93 320.20 L1006.68 320.20 L1003.43 320.20 L1000.18 320.20 L996.92 320.20 L993.67 320.20 L990.42 320.20 L987.16 320.20 L983.91 320.20 L980.66 320.20 L977.41 320.20 L974.15 320.20 L970.90 320.20 L967.65 320.20 L964.40 320.20 L961.14 320.20 L957.89 320.20 L954.64 320.20 L951.39 320.20 L948.13 320.20 L944.88 320.20 L941.63 320.20 L938.38 320.20 L935.12 320.20 L931.87 320.20 L928.62 320.20 L925.37 320.20 L922.12 320.20 L918.86 320.20 L915.61 320.20 L912.36 320.20 L909.11 320.20 L905.85 320.20 L902.60 320.20 L899.35 320.20 L896.10 320.20 L892.84 320.20 L889.59 320.20 L886.34 320.20 L883.09 320.20 L879.83 320.20 L876.58 320.20 L873.33 320.20 L870.08 320.20 L866.82 320.20 L863.57 320.20 L860.32 320.20 L857.07 320.20 L853.81 320.20 L850.56 320.20 L847.31 320.20 L844.06 320.20 L840.80 320.20 L837.55 320.20 L834.30 320.20 L831.05 320.20 L827.79 320.20 L824.54 320.20 L821.29 320.20 L818.04 320.20 L814.78 320.20 L811.53 320.20 L808.28 320.20 L805.02 320.20 L801.77 320.20 L798.52 320.20 L795.27 320.20 L792.01 320.20 L788.76 320.20 L785.51 320.20 L782.26 320.20 L779.00 320.20 L775.75 320.20 L772.50 320.20 L769.25 320.20 L766.00 320.20 L762.74 320.20 L759.49 320.20 L756.24 320.20 L752.99 320.20 L749.73 320.20 L746.48 320.20 L743.23 320.20 L739.98 320.20 L736.72 320.20 L733.47 320.20 L730.22 320.20 L726.97 320.20 L723.71 320.20 L720.46 320.20 L717.21 320.20 L713.96 320.20 L710.70 320.20 L707.45 320.20 L704.20 320.20 L700.95 320.20 L697.69 320.20 L694.44 320.20 L691.19 320.20 L687.94 320.20 L684.68 320.20 L681.43 320.20 L678.18 320.20 L674.93 320.20 L671.67 320.20 L668.42 320.20 L665.17 320.20 L661.91 320.20 L658.66 320.20 L655.41 320.20 L652.16 320.20 L648.90 320.20 L645.65 320.20 L642.40 320.20 L639.15 320.20 L635.89 320.20 L632.64 320.20 L629.39 320.20 L626.14 320.20 L622.88 320.20 L619.63 320.20 L616.38 320.20 L613.13 320.20 L609.88 320.20 L606.62 320.20 L603.37 320.20 L600.12 320.20 L596.87 320.20 L593.61 320.20 L590.36 320.20 L587.11 320.20 L583.86 320.20 L580.60 320.20 L577.35 320.20 L574.10 320.20 L570.85 320.20 L567.59 320.20 L564.34 320.20 L561.09 320.20 L557.84 320.20 L554.58 320.20 L551.33 320.20 L548.08 320.20 L544.83 320.20 L541.57 320.20 L538.32 320.20 L535.07 320.20 L531.82 320.20 L528.56 320.20 L525.31 320.20 L522.06 320.20 L518.81 320.20 L515.55 320.20 L512.30 320.20 L509.05 320.20 L505.80 320.20 L502.54 320.20 L499.29 320.20 L496.04 320.20 L492.79 320.20 L489.53 320.20 L486.28 320.20 L483.03 320.20 L479.78 320.20 L476.52 320.20 L473.27 320.20 L470.02 320.20 L466.77 320.20 L463.51 320.20 L460.26 320.20 L457.01 320.20 L453.76 320.20 L450.50 320.20 L447.25 320.20 L444.00 320.20 L440.75 320.20 L437.49 320.20 L434.24 320.20 L430.99 320.20 L427.74 320.20 L424.48 320.20 L421.23 320.20 L417.98 320.20 L414.73 320.20 L411.47 320.20 L408.22 320.20 L404.97 320.20 L401.72 320.20 L398.46 320.20 L395.21 320.20 L391.96 320.20 L388.71 320.20 L385.45 320.20 L382.20 320.20 L378.95 320.20 L375.70 320.20 L372.44 320.20 L369.19 320.20 L365.94 320.20 L362.69 320.20 L359.43 320.20 L356.18 320.20 L352.93 320.20 L349.68 320.20 L346.42 320.20 L343.17 320.20 L339.92 320.20 L336.67 320.20 L333.41 320.20 L330.16 320.20 L326.91 320.20 L323.66 320.20 L320.40 320.20 L317.15 320.20"/>
<path d="M1468.10 271.31 L1464.96 271.31 L1461.82 271.31 L1458.68 271.31 L1455.53 271.31 L1452.39 271.31 L1449.25 271.31 L1446.11 271.31 L1442.97 271.31 L1439.83 271.31 L1436.68 271.31 L1433.54 271.31 L1430.40 271.31 L1427.26 271.31 L1424.12 271.31 L1420.98 271.31 L1417.83 271.31 L1414.69 271.31 L1411.55 271.31 L1408.41 271.31 L1405.27 271.31 L1402.13 271.31 L1398.98 271.31 L1395.84 271.31 L1392.70 271.31 L1389.56 271.31 L1386.42 271.31 L1383.28 271.31 L1380.13 271.31 L1376.99 271.31 L1373.85 271.31 L1370.71 271.31 L1367.57 271.31 L1364.43 271.31 L1361.28 271.31 L1358.14 271.31 L1355.00 271.31 L1351.86 271.31 L1348.72 271.31 L1345.58 271.31 L1342.43 271.31 L1339.29 271.31 L1336.15 271.31 L1333.01 271.31 L1329.87 271.31 L1326.73 271.31 L1323.58 271.31 L1320.44 271.31 L1317.30 271.31 L1314.16 271.31 L1311.02 271.31 L1307.88 271.31 L1304.73 271.31 L1301.59 271.31 L1298.45 271.31 L1295.31 271.31 L1292.17 271.31 L1289.03 271.31 L1285.88 271.31 L1282.74 271.31 L1279.60 271.31 L1276.46 271.31 L1273.32 271.31 L1270.18 271.31 L1267.03 271.31 L1263.89 271.31 L1260.75 271.31 L1257.61 271.31 L1254.47 271.31 L1251.33 271.31 L1248.18 271.31 L1245.04 271.31 L1241.90 271.31 L1238.76 271.31 L1235.62 271.31 L1232.48 271.31 L1229.33 271.31 L1226.19 271.31 L1223.05 271.31 L1219.91 271.31 L1216.77 271.31 L1213.63 271.31 L1210.48 271.31 L1207.34 271.31 L1204.20 271.31 L1201.06 271.31 L1197.92 271.31 L1194.78 271.31 L1191.63 271.31 L1188.49 271.31 L1185.35 271.31 L1182.21 271.31 L1179.07 271.31 L1175.93 271.31 L1172.78 271.31 L1169.64 271.31 L1166.50 271.31 L1163.36 271.31 L1160.22 271.31 L1157.08 271.31 L1153.93 271.31 L1150.79 271.31 L1147.65 271.31 L1144.51 271.31 L1141.37 271.31 L1138.23 271.31 L1135.08 271.31 L1131.94 271.31 L1128.80 271.31 L1125.66 271.31 L1122.52 271.31 L1119.38 271.31 L1116.23 271.31 L1113.09 271.31 L1109.95 271.31 L1106.81 271.31 L1103.67 271.31 L1100.53 271.31 L1097.38 271.31 L1094.24 271.31 L1091.10 271.31 L1087.96 271.31 L1084.82 271.31 L1081.68 271.31 L1078.53 271.31 L1075.39 271.31 L1072.25 271.31 L1069.11 271.31 L1065.97 271.31 L1062.83 271.31 L1059.68 271.31 L1056.54 271.31 L1053.40 271.31 L1050.26 271.31 L1047.12 271.31 L1043.98 271.31 L1040.83 271.31 L1037.69 271.31 L1034.55 271.31 L1031.41 271.31 L1028.27 271.31 L1025.13 271.31 L1021.98 271.31 L1018.84 271.31 L1015.70 271.31 L1012.56 271.31 L1009.42 271.31 L1006.28 271.31 L1003.13 271.31 L999.99 271.31 L996.85 271.31 L993.71 271.31 L990.57 271.31 L987.43 271.31 L984.28 271.31 L981.14 271.31 L978.00 271.31 L974.86 271.31 L971.72 271.31 L968.58 271.31 L965.43 271.31 L962.29 271.31 L959.15 271.31 L956.01 271.31 L952.87 271.31 L949.73 271.31 L946.58 271.31 L943.44 271.31 L940.30 271.31 L937.16 271.31 L934.02 271.31 L930.88 271.31 L927.73 271.31 L924.59 271.31 L921.45 271.31 L918.31 271.31 L915.17 271.31 L912.03 271.31 L908.88 271.31 L905.74 271.31 L902.60 271.31 L899.46 271.31 L896.32 271.31 L893.17 271.31 L890.03 271.31 L886.89 271.31 L883.75 271.31 L880.61 271.31 L877.47 271.31 L874.32 271.31 L871.18 271.31 L868.04 271.31 L864.90 271.31 L861.76 271.31 L858.62 271.31 L855.47 271.31 L852.33 271.31 L849.19 271.31 L846.05 271.31 L842.91 271.31 L839.77 271.31 L836.62 271.31 L833.48 271.31 L830.34 271.31 L827.20 271.31 L824.06 271.31 L820.92 271.31 L817.77 271.31 L814.63 271.31 L811.49 271.31 L808.35 271.31 L805.21 271.31 L802.07 271.31 L798.92 271.31 L795.78 271.31 L792.64 271.31 L789.50 271.31 L786.36 271.31 L783.22 271.31 L780.07 271.31 L776.93 271.31 L773.79 271.31 L770.65 271.31 L767.51 271.31 L764.37 271.31 L761.22 271.31 L758.08 271.31 L754.94 271.31 L751.80 271.31 L748.66 271.31 L745.52 271.31 L742.37 271.31 L739.23 271.31 L736.09 271.31 L732.95 271.31 L729.81 271.31 L726.67 271.31 L723.52 271.31 L720.38 271.31 L717.24 271.31 L714.10 271.31 L710.96 271.31 L707.82 271.31 L704.67 271.31 L701.53 271.31 L698.39 271.31 L695.25 271.31 L692.11 271.31 L688.97 271.31 L685.82 271.31 L682.68 271.31 L679.54 271.31 L676.40 271.31 L673.26 271.31 L670.12 271.31 L666.97 271.31 L663.83 271.31 L660.69 271.31 L657.55 271.31 L654.41 271.31 L651.27 271.31 L648.12 271.31 L644.98 271.31 L641.84 271.31 L638.70 271.31 L635.56 271.31 L632.42 271.31 L629.27 271.31 L626.13 271.31 L622.99 271.31 L619.85 271.31 L616.71 271.31 L613.57 271.31 L610.42 271.31 L607.28 271.31 L604.14 271.31 L601.00 271.31 L597.86 271.31 L594.72 271.31 L591.57 271.31 L588.43 271.31 L585.29 271.31 L582.15 271.31 L579.01 271.31 L575.87 271.31 L572.72 271.31 L569.58 271.31 L566.44 271.31 L563.30 271.31 L560.16 271.31 L557.02 271.31 L553.87 271.31 L550.73 271.31 L547.59 271.31 L544.45 271.31 L541.31 271.31 L538.17 271.31 L535.02 271.31 L531.88 271.31 L528.74 271.31 L525.60 271.31 L522.46 271.31 L519.32 271.31 L516.17 271.31 L513.03 271.31 L509.89 271.31 L506.75 271.31 L503.61 271.31 L500.47 271.31 L497.32 271.31 L494.18 271.31 L491.04 271.31 L487.90 271.31 L484.76 271.31 L481.62 271.31 L478.47 271.31 L475.33 271.31 L472.19 271.31 L469.05 271.31 L465.91 271.31 L462.77 271.31 L459.62 271.31 L456.48 271.31 L453.34 271.31 L450.20 271.31 L447.06 271.31 L443.92 271.31 L440.77 271.31 L437.63 271.31 L434.49 271.31 L431.35 271.31 L428.21 271.31 L425.07 271.31 L421.92 271.31 L418.78 271.31 L415.64 271.31 L412.50 271.31 L409.36 271.31 L406.22 271.31 L403.07 271.31 L399.93 271.31 L396.79 271.31 L393.65 271.31 L390.51 271.31 L387.37 271.31 L384.22 271.31 L381.08 271.31 L377.94 271.31 L374.80 271.31 L371.66 271.31 L368.52 271.31 L365.37 271.31 L362.23 271.31 L359.09 271.31 L355.95 271.31 L352.81 271.31 L349.67 271.31 L346.52 271.31 L343.38 271.31 L340.24 271.31 L337.10 271.31"/>
<path d="M1409.61 222.43 L1406.80 222.43 L1403.98 222.43 L1401.16 222.43 L1398.35 222.43 L1395.53 222.43 L1392.71 222.43 L1389.90 222.43 L1387.08 222.43 L1384.26 222.43 L1381.45 222.43 L1378.63 222.43 L1375.81 222.43 L1373.00 222.43 L1370.18 222.43 L1367.36 222.43 L1364.55 222.43 L1361.73 222.43 L1358.91 222.43 L1356.10 222.43 L1353.28 222.43 L1350.46 222.43 L1347.65 222.43 L1344.83 222.43 L1342.01 222.43 L1339.20 222.43 L1336.38 222.43 L1333.56 222.43 L1330.75 222.43 L1327.93 222.43 L1325.11 222.43 L1322.30 222.43 L1319.48 222.43 L1316.66 222.43 L1313.85 222.43 L1311.03 222.43 L1308.21 222.43 L1305.39 222.43 L1302.58 222.43 L1299.76 222.43 L1296.94 222.43 L1294.13 222.43 L1291.31 222.43 L1288.49 222.43 L1285.68 222.43 L1282.86 222.43 L1280.04 222.43 L1277.23 222.43 L1274.41 222.43 L1271.59 222.43 L1268.78 222.43 L1265.96 222.43 L1263.14 222.43 L1260.33 222.43 L1257.51 222.43 L1254.69 222.43 L1251.88 222.43 L1249.06 222.43 L1246.24 222.43 L1243.43 222.43 L1240.61 222.43 L1237.79 222.43 L1234.98 222.43 L1232.16 222.43 L1229.34 222.43 L1226.53 222.43 L1223.71 222.43 L1220.89 222.43 L1218.08 222.43 L1215.26 222.43 L1212.44 222.43 L1209.63 222.43 L1206.81 222.43 L1203.99 222.43 L1201.18 222.43 L1198.36 222.43 L1195.54 222.43 L1192.73 222.43 L1189.91 222.43 L1187.09 222.43 L1184.27 222.43 L1181.46 222.43 L1178.64 222.43 L1175.82 222.43 L1173.01 222.43 L1170.19 222.43 L1167.37 222.43 L1164.56 222.43 L1161.74 222.43 L1158.92 222.43 L1156.11 222.43 L1153.29 222.43 L1150.47 222.43 L1147.66 222.43 L1144.84 222.43 L1142.02 222.43 L1139.21 222.43 L1136.39 222.43 L1133.57 222.43 L1130.76 222.43 L1127.94 222.43 L1125.12 222.43 L1122.31 222.43 L1119.49 222.43 L1116.67 222.43 L1113.86 222.43 L1111.04 222.43 L1108.22 222.43 L1105.41 222.43 L1102.59 222.43 L1099.77 222.43 L1096.96 222.43 L1094.14 222.43 L1091.32 222.43 L1088.51 222.43 L1085.69 222.43 L1082.87 222.43 L1080.06 222.43 L1077.24 222.43 L1074.42 222.43 L1071.60 222.43 L1068.79 222.43 L1065.97 222.43 L1063.15 222.43 L1060.34 222.43 L1057.52 222.43 L1054.70 222.43 L1051.89 222.43 L1049.07 222.43 L1046.25 222.43 L1043.44 222.43 L1040.62 222.43 L1037.80 222.43 L1034.99 222.43 L1032.17 222.43 L1029.35 222.43 L1026.54 222.43 L1023.72 222.43 L1020.90 222.43 L1018.09 222.43 L1015.27 222.43 L1012.45 222.43 L1009.64 222.43 L1006.82 222.43 L1004.00 222.43 L1001.19 222.43 L998.37 222.43 L995.55 222.43 L992.74 222.43 L989.92 222.43 L987.10 222.43 L984.29 222.43 L981.47 222.43 L978.65 222.43 L975.84 222.43 L973.02 222.43 L970.20 222.43 L967.39 222.43 L964.57 222.43 L961.75 222.43 L958.93 222.43 L956.12 222.43 L953.30 222.43 L950.48 222.43 L947.67 222.43 L944.85 222.43 L942.03 222.43 L939.22 222.43 L936.40 222.43 L933.58 222.43 L930.77 222.43 L927.95 222.43 L925.13 222.43 L922.32 222.43 L919.50 222.43 L916.68 222.43 L913.87 222.43 L911.05 222.43 L908.23 222.43 L905.42 222.43 L902.60 222.43 L899.78 222.43 L896.97 222.43 L894.15 222.43 L891.33 222.43 L888.52 222.43 L885.70 222.43 L882.88 222.43 L880.07 222.43 L877.25 222.43 L874.43 222.43 L871.62 222.43 L868.80 222.43 L865.98 222.43 L863.17 222.43 L860.35 222.43 L857.53 222.43 L854.72 222.43 L851.90 222.43 L849.08 222.43 L846.27 222.43 L843.45 222.43 L840.63 222.43 L837.81 222.43 L835.00 222.43 L832.18 222.43 L829.36 222.43 L826.55 222.43 L823.73 222.43 L820.91 222.43 L818.10 222.43 L815.28 222.43 L812.46 222.43 L809.65 222.43 L806.83 222.43 L804.01 222.43 L801.20 222.43 L798.38 222.43 L795.56 222.43 L792.75 222.43 L789.93 222.43 L787.11 222.43 L784.30 222.43 L781.48 222.43 L778.66 222.43 L775.85 222.43 L773.03 222.43 L770.21 222.43 L767.40 222.43 L764.58 222.43 L761.76 222.43 L758.95 222.43 L756.13 222.43 L753.31 222.43 L750.50 222.43 L747.68 222.43 L744.86 222.43 L742.05 222.43 L739.23 222.43 L736.41 222.43 L733.60 222.43 L730.78 222.43 L727.96 222.43 L725.14 222.43 L722.33 222.43 L719.51 222.43 L716.69 222.43 L713.88 222.43 L711.06 222.43 L708.24 222.43 L705.43 222.43 L702.61 222.43 L699.79 222.43 L696.98 222.43 L694.16 222.43 L691.34 222.43 L688.53 222.43 L685.71 222.43 L682.89 222.43 L680.08 222.43 L677.26 222.43 L674.44 222.43 L671.63 222.43 L668.81 222.43 L665.99 222.43 L663.18 222.43 L660.36 222.43 L657.54 222.43 L654.73 222.43 L651.91 222.43 L649.09 222.43 L646.28 222.43 L643.46 222.43 L640.64 222.43 L637.83 222.43 L635.01 222.43 L632.19 222.43 L629.38 222.43 L626.56 222.43 L623.74 222.43 L620.93 222.43 L618.11 222.43 L615.29 222.43 L612.47 222.43 L609.66 222.43 L606.84 222.43 L604.02 222.43 L601.21 222.43 L598.39 222.43 L595.57 222.43 L592.76 222.43 L589.94 222.43 L587.12 222.43 L584.31 222.43 L581.49 222.43 L578.67 222.43 L575.86 222.43 L573.04 222.43 L570.22 222.43 L567.41 222.43 L564.59 222.43 L561.77 222.43 L558.96 222.43 L556.14 222.43 L553.32 222.43 L550.51 222.43 L547.69 222.43 L544.87 222.43 L542.06 222.43 L539.24 222.43 L536.42 222.43 L533.61 222.43 L530.79 222.43 L527.97 222.43 L525.16 222.43 L522.34 222.43 L519.52 222.43 L516.71 222.43 L513.89 222.43 L511.07 222.43 L508.26 222.43 L505.44 222.43 L502.62 222.43 L499.81 222.43 L496.99 222.43 L494.17 222.43 L491.35 222.43 L488.54 222.43 L485.72 222.43 L482.90 222.43 L480.09 222.43 L477.27 222.43 L474.45 222.43 L471.64 222.43 L468.82 222.43 L466.00 222.43 L463.19 222.43 L460.37 222.43 L457.55 222.43 L454.74 222.43 L451.92 222.43 L449.10 222.43 L446.29 222.43 L443.47 222.43 L440.65 222.43 L437.84 222.43 L435.02 222.43 L432.20 222.43 L429.39 222.43 L426.57 222.43 L423.75 222.43 L420.94 222.43 L418.12 222.43 L415.30 222.43 L412.49 222.43 L409.67 222.43 L406.85 222.43 L404.04 222.43 L401.22 222.43 L398.40 222.43 L395.59 222.43"/>
<path d="M1316.58 173.54 L1314.28 173.54 L1311.98 173.54 L1309.68 173.54 L1307.38 173.54 L1305.08 173.54 L1302.78 173.54 L1300.48 173.54 L1298.18 173.54 L1295.88 173.54 L1293.58 173.54 L1291.28 173.54 L1288.98 173.54 L1286.68 173.54 L1284.38 173.54 L1282.08 173.54 L1279.78 173.54 L1277.48 173.54 L1275.18 173.54 L1272.88 173.54 L1270.58 173.54 L1268.28 173.54 L1265.98 173.54 L1263.68 173.54 L1261.38 173.54 L1259.08 173.54 L1256.78 173.54 L1254.48 173.54 L1252.18 173.54 L1249.88 173.54 L1247.58 173.54 L1245.28 173.54 L1242.98 173.54 L1240.68 173.54 L1238.38 173.54 L1236.08 173.54 L1233.78 173.54 L1231.48 173.54 L1229.18 173.54 L1226.88 173.54 L1224.58 173.54 L1222.28 173.54 L1219.98 173.54 L1217.68 173.54 L1215.38 173.54 L1213.08 173.54 L1210.78 173.54 L1208.48 173.54 L1206.18 173.54 L1203.88 173.54 L1201.58 173.54 L1199.28 173.54 L1196.98 173.54 L1194.68 173.54 L1192.38 173.54 L1190.08 173.54 L1187.78 173.54 L1185.48 173.54 L1183.18 173.54 L1180.88 173.54 L1178.58 173.54 L1176.28 173.54 L1173.98 173.54 L1171.68 173.54 L1169.38 173.54 L1167.08 173.54 L1164.78 173.54 L1162.48 173.54 L1160.18 173.54 L1157.88 173.54 L1155.59 173.54 L1153.29 173.54 L1150.99 173.54 L1148.69 173.54 L1146.39 173.54 L1144.09 173.54 L1141.79 173.54 L1139.49 173.54 L1137.19 173.54 L1134.89 173.54 L1132.59 173.54 L1130.29 173.54 L1127.99 173.54 L1125.69 173.54 L1123.39 173.54 L1121.09 173.54 L1118.79 173.54 L1116.49 173.54 L1114.19 173.54 L1111.89 173.54 L1109.59 173.54 L1107.29 173.54 L1104.99 173.54 L1102.69 173.54 L1100.39 173.54 L1098.09 173.54 L1095.79 173.54 L1093.49 173.54 L1091.19 173.54 L1088.89 173.54 L1086.59 173.54 L1084.29 173.54 L1081.99 173.54 L1079.69 173.54 L1077.39 173.54 L1075.09 173.54 L1072.79 173.54 L1070.49 173.54 L1068.19 173.54 L1065.89 173.54 L1063.59 173.54 L1061.29 173.54 L1058.99 173.54 L1056.69 173.54 L1054.39 173.54 L1052.09 173.54 L1049.79 173.54 L1047.49 173.54 L1045.19 173.54 L1042.89 173.54 L1040.59 173.54 L1038.29 173.54 L1035.99 173.54 L1033.69 173.54 L1031.39 173.54 L1029.09 173.54 L1026.79 173.54 L1024.49 173.54 L1022.19 173.54 L1019.89 173.54 L1017.59 173.54 L1015.29 173.54 L1012.99 173.54 L1010.69 173.54 L1008.39 173.54 L1006.09 173.54 L1003.79 173.54 L1001.49 173.54 L999.19 173.54 L996.89 173.54 L994.59 173.54 L992.29 173.54 L989.99 173.54 L987.69 173.54 L985.40 173.54 L983.10 173.54 L980.80 173.54 L978.50 173.54 L976.20 173.54 L973.90 173.54 L971.60 173.54 L969.30 173.54 L967.00 173.54 L964.70 173.54 L962.40 173.54 L960.10 173.54 L957.80 173.54 L955.50 173.54 L953.20 173.54 L950.90 173.54 L948.60 173.54 L946.30 173.54 L944.00 173.54 L941.70 173.54 L939.40 173.54 L937.10 173.54 L934.80 173.54 L932.50 173.54 L930.20 173.54 L927.90 173.54 L925.60 173.54 L923.30 173.54 L921.00 173.54 L918.70 173.54 L916.40 173.54 L914.10 173.54 L911.80 173.54 L909.50 173.54 L907.20 173.54 L904.90 173.54 L902.60 173.54 L900.30 173.54 L898.00 173.54 L895.70 173.54 L893.40 173.54 L891.10 173.54 L888.80 173.54 L886.50 173.54 L884.20 173.54 L881.90 173.54 L879.60 173.54 L877.30 173.54 L875.00 173.54 L872.70 173.54 L870.40 173.54 L868.10 173.54 L865.80 173.54 L863.50 173.54 L861.20 173.54 L858.90 173.54 L856.60 173.54 L854.30 173.54 L852.00 173.54 L849.70 173.54 L847.40 173.54 L845.10 173.54 L842.80 173.54 L840.50 173.54 L838.20 173.54 L835.90 173.54 L833.60 173.54 L831.30 173.54 L829.00 173.54 L826.70 173.54 L824.40 173.54 L822.10 173.54 L819.80 173.54 L817.51 173.54 L815.21 173.54 L812.91 173.54 L810.61 173.54 L808.31 173.54 L806.01 173.54 L803.71 173.54 L801.41 173.54 L799.11 173.54 L796.81 173.54 L794.51 173.54 L792.21 173.54 L789.91 173.54 L787.61 173.54 L785.31 173.54 L783.01 173.54 L780.71 173.54 L778.41 173.54 L776.11 173.54 L773.81 173.54 L771.51 173.54 L769.21 173.54 L766.91 173.54 L764.61 173.54 L762.31 173.54 L760.01 173.54 L757.71 173.54 L755.41 173.54 L753.11 173.54 L750.81 173.54 L748.51 173.54 L746.21 173.54 L743.91 173.54 L741.61 173.54 L739.31 173.54 L737.01 173.54 L734.71 173.54 L732.41 173.54 L730.11 173.54 L727.81 173.54 L725.51 173.54 L723.21 173.54 L720.91 173.54 L718.61 173.54 L716.31 173.54 L714.01 173.54 L711.71 173.54 L709.41 173.54 L707.11 173.54 L704.81 173.54 L702.51 173.54 L700.21 173.54 L697.91 173.54 L695.61 173.54 L693.31 173.54 L691.01 173.54 L688.71 173.54 L686.41 173.54 L684.11 173.54 L681.81 173.54 L679.51 173.54 L677.21 173.54 L674.91 173.54 L672.61 173.54 L670.31 173.54 L668.01 173.54 L665.71 173.54 L663.41 173.54 L661.11 173.54 L658.81 173.54 L656.51 173.54 L654.21 173.54 L651.91 173.54 L649.61 173.54 L647.32 173.54 L645.02 173.54 L642.72 173.54 L640.42 173.54 L638.12 173.54 L635.82 173.54 L633.52 173.54 L631.22 173.54 L628.92 173.54 L626.62 173.54 L624.32 173.54 L622.02 173.54 L619.72 173.54 L617.42 173.54 L615.12 173.54 L612.82 173.54 L610.52 173.54 L608.22 173.54 L605.92 173.54 L603.62 173.54 L601.32 173.54 L599.02 173.54 L596.72 173.54 L594.42 173.54 L592.12 173.54 L589.82 173.54 L587.52 173.54 L585.22 173.54 L582.92 173.54 L580.62 173.54 L578.32 173.54 L576.02 173.54 L573.72 173.54 L571.42 173.54 L569.12 173.54 L566.82 173.54 L564.52 173.54 L562.22 173.54 L559.92 173.54 L557.62 173.54 L555.32 173.54 L553.02 173.54 L550.72 173.54 L548.42 173.54 L546.12 173.54 L543.82 173.54 L541.52 173.54 L539.22 173.54 L536.92 173.54 L534.62 173.54 L532.32 173.54 L530.02 173.54 L527.72 173.54 L525.42 173.54 L523.12 173.54 L520.82 173.54 L518.52 173.54 L516.22 173.54 L513.92 173.54 L511.62 173.54 L509.32 173.54 L507.02 173.54 L504.72 173.54 L502.42 173.54 L500.12 173.54 L497.82 173.54 L495.52 173.54 L493.22 173.54 L490.92 173.54 L488.62 173.54"/>
<path d="M1195.33 124.66 L1193.70 124.66 L1192.07 124.66 L1190.45 124.66 L1188.82 124.66 L1187.19 124.66 L1185.57 124.66 L1183.94 124.66 L1182.32 124.66 L1180.69 124.66 L1179.06 124.66 L1177.44 124.66 L1175.81 124.66 L1174.18 124.66 L1172.56 124.66 L1170.93 124.66 L1169.31 124.66 L1167.68 124.66 L1166.05 124.66 L1164.43 124.66 L1162.80 124.66 L1161.17 124.66 L1159.55 124.66 L1157.92 124.66 L1156.30 124.66 L1154.67 124.66 L1153.04 124.66 L1151.42 124.66 L1149.79 124.66 L1148.16 124.66 L1146.54 124.66 L1144.91 124.66 L1143.29 124.66 L1141.66 124.66 L1140.03 124.66 L1138.41 124.66 L1136.78 124.66 L1135.15 124.66 L1133.53 124.66 L1131.90 124.66 L1130.28 124.66 L1128.65 124.66 L1127.02 124.66 L1125.40 124.66 L1123.77 124.66 L1122.14 124.66 L1120.52 124.66 L1118.89 124.66 L1117.27 124.66 L1115.64 124.66 L1114.01 124.66 L1112.39 124.66 L1110.76 124.66 L1109.13 124.66 L1107.51 124.66 L1105.88 124.66 L1104.26 124.66 L1102.63 124.66 L1101.00 124.66 L1099.38 124.66 L1097.75 124.66 L1096.12 124.66 L1094.50 124.66 L1092.87 124.66 L1091.25 124.66 L1089.62 124.66 L1087.99 124.66 L1086.37 124.66 L1084.74 124.66 L1083.11 124.66 L1081.49 124.66 L1079.86 124.66 L1078.24 124.66 L1076.61 124.66 L1074.98 124.66 L1073.36 124.66 L1071.73 124.66 L1070.10 124.66 L1068.48 124.66 L1066.85 124.66 L1065.23 124.66 L1063.60 124.66 L1061.97 124.66 L1060.35 124.66 L1058.72 124.66 L1057.09 124.66 L1055.47 124.66 L1053.84 124.66 L1052.22 124.66 L1050.59 124.66 L1048.96 124.66 L1047.34 124.66 L1045.71 124.66 L1044.08 124.66 L1042.46 124.66 L1040.83 124.66 L1039.20 124.66 L1037.58 124.66 L1035.95 124.66 L1034.33 124.66 L1032.70 124.66 L1031.07 124.66 L1029.45 124.66 L1027.82 124.66 L1026.20 124.66 L1024.57 124.66 L1022.94 124.66 L1021.32 124.66 L1019.69 124.66 L1018.06 124.66 L1016.44 124.66 L1014.81 124.66 L1013.19 124.66 L1011.56 124.66 L1009.93 124.66 L1008.31 124.66 L1006.68 124.66 L1005.05 124.66 L1003.43 124.66 L1001.80 124.66 L1000.18 124.66 L998.55 124.66 L996.92 124.66 L995.30 124.66 L993.67 124.66 L992.04 124.66 L990.42 124.66 L988.79 124.66 L987.17 124.66 L985.54 124.66 L983.91 124.66 L982.29 124.66 L980.66 124.66 L979.03 124.66 L977.41 124.66 L975.78 124.66 L974.15 124.66 L972.53 124.66 L970.90 124.66 L969.28 124.66 L967.65 124.66 L966.02 124.66 L964.40 124.66 L962.77 124.66 L961.14 124.66 L959.52 124.66 L957.89 124.66 L956.27 124.66 L954.64 124.66 L953.01 124.66 L951.39 124.66 L949.76 124.66 L948.13 124.66 L946.51 124.66 L944.88 124.66 L943.26 124.66 L941.63 124.66 L940.00 124.66 L938.38 124.66 L936.75 124.66 L935.12 124.66 L933.50 124.66 L931.87 124.66 L930.25 124.66 L928.62 124.66 L926.99 124.66 L925.37 124.66 L923.74 124.66 L922.12 124.66 L920.49 124.66 L918.86 124.66 L917.24 124.66 L915.61 124.66 L913.98 124.66 L912.36 124.66 L910.73 124.66 L909.11 124.66 L907.48 124.66 L905.85 124.66 L904.23 124.66 L902.60 124.66 L900.97 124.66 L899.35 124.66 L897.72 124.66 L896.10 124.66 L894.47 124.66 L892.84 124.66 L891.22 124.66 L889.59 124.66 L887.96 124.66 L886.34 124.66 L884.71 124.66 L883.09 124.66 L881.46 124.66 L879.83 124.66 L878.21 124.66 L876.58 124.66 L874.95 124.66 L873.33 124.66 L871.70 124.66 L870.08 124.66 L868.45 124.66 L866.82 124.66 L865.20 124.66 L863.57 124.66 L861.94 124.66 L860.32 124.66 L858.69 124.66 L857.07 124.66 L855.44 124.66 L853.81 124.66 L852.19 124.66 L850.56 124.66 L848.93 124.66 L847.31 124.66 L845.68 124.66 L844.06 124.66 L842.43 124.66 L840.80 124.66 L839.18 124.66 L837.55 124.66 L835.92 124.66 L834.30 124.66 L832.67 124.66 L831.05 124.66 L829.42 124.66 L827.79 124.66 L826.17 124.66 L824.54 124.66 L822.91 124.66 L821.29 124.66 L819.66 124.66 L818.03 124.66 L816.41 124.66 L814.78 124.66 L813.16 124.66 L811.53 124.66 L809.90 124.66 L808.28 124.66 L806.65 124.66 L805.02 124.66 L803.40 124.66 L801.77 124.66 L800.15 124.66 L798.52 124.66 L796.89 124.66 L795.27 124.66 L793.64 124.66 L792.01 124.66 L790.39 124.66 L788.76 124.66 L787.14 124.66 L785.51 124.66 L783.88 124.66 L782.26 124.66 L780.63 124.66 L779.00 124.66 L777.38 124.66 L775.75 124.66 L774.13 124.66 L772.50 124.66 L770.87 124.66 L769.25 124.66 L767.62 124.66 L766.00 124.66 L764.37 124.66 L762.74 124.66 L761.12 124.66 L759.49 124.66 L757.86 124.66 L756.24 124.66 L754.61 124.66 L752.99 124.66 L751.36 124.66 L749.73 124.66 L748.11 124.66 L746.48 124.66 L744.85 124.66 L743.23 124.66 L741.60 124.66 L739.98 124.66 L738.35 124.66 L736.72 124.66 L735.10 124.66 L733.47 124.66 L731.84 124.66 L730.22 124.66 L728.59 124.66 L726.97 124.66 L725.34 124.66 L723.71 124.66 L722.09 124.66 L720.46 124.66 L718.83 124.66 L717.21 124.66 L715.58 124.66 L713.95 124.66 L712.33 124.66 L710.70 124.66 L709.08 124.66 L707.45 124.66 L705.82 124.66 L704.20 124.66 L702.57 124.66 L700.94 124.66 L699.32 124.66 L697.69 124.66 L696.07 124.66 L694.44 124.66 L692.81 124.66 L691.19 124.66 L689.56 124.66 L687.93 124.66 L686.31 124.66 L684.68 124.66 L683.06 124.66 L681.43 124.66 L679.80 124.66 L678.18 124.66 L676.55 124.66 L674.92 124.66 L673.30 124.66 L671.67 124.66 L670.05 124.66 L668.42 124.66 L666.79 124.66 L665.17 124.66 L663.54 124.66 L661.91 124.66 L660.29 124.66 L658.66 124.66 L657.04 124.66 L655.41 124.66 L653.78 124.66 L652.16 124.66 L650.53 124.66 L648.90 124.66 L647.28 124.66 L645.65 124.66 L644.03 124.66 L642.40 124.66 L640.77 124.66 L639.15 124.66 L637.52 124.66 L635.89 124.66 L634.27 124.66 L632.64 124.66 L631.02 124.66 L629.39 124.66 L627.76 124.66 L626.14 124.66 L624.51 124.66 L622.88 124.66 L621.26 124.66 L619.63 124.66 L618.01 124.66 L616.38 124.66 L614.75 124.66 L613.13 124.66 L611.50 124.66 L609.88 124.66"/>
<path d="M1054.13 75.78 L1053.28 75.78 L1052.44 75.78 L1051.60 75.78 L1050.76 75.78 L1049.92 75.78 L1049.07 75.78 L1048.23 75.78 L1047.39 75.78 L1046.55 75.78 L1045.71 75.78 L1044.87 75.78 L1044.02 75.78 L1043.18 75.78 L1042.34 75.78 L1041.50 75.78 L1040.66 75.78 L1039.81 75.78 L1038.97 75.78 L1038.13 75.78 L1037.29 75.78 L1036.45 75.78 L1035.61 75.78 L1034.76 75.78 L1033.92 75.78 L1033.08 75.78 L1032.24 75.78 L1031.40 75.78 L1030.55 75.78 L1029.71 75.78 L1028.87 75.78 L1028.03 75.78 L1027.19 75.78 L1026.35 75.78 L1025.50 75.78 L1024.66 75.78 L1023.82 75.78 L1022.98 75.78 L1022.14 75.78 L1021.30 75.78 L1020.45 75.78 L1019.61 75.78 L1018.77 75.78 L1017.93 75.78 L1017.09 75.78 L1016.24 75.78 L1015.40 75.78 L1014.56 75.78 L1013.72 75.78 L1012.88 75.78 L1012.04 75.78 L1011.19 75.78 L1010.35 75.78 L1009.51 75.78 L1008.67 75.78 L1007.83 75.78 L1006.98 75.78 L1006.14 75.78 L1005.30 75.78 L1004.46 75.78 L1003.62 75.78 L1002.78 75.78 L1001.93 75.78 L1001.09 75.78 L1000.25 75.78 L999.41 75.78 L998.57 75.78 L997.72 75.78 L996.88 75.78 L996.04 75.78 L995.20 75.78 L994.36 75.78 L993.52 75.78 L992.67 75.78 L991.83 75.78 L990.99 75.78 L990.15 75.78 L989.31 75.78 L988.46 75.78 L987.62 75.78 L986.78 75.78 L985.94 75.78 L985.10 75.78 L984.26 75.78 L983.41 75.78 L982.57 75.78 L981.73 75.78 L980.89 75.78 L980.05 75.78 L979.20 75.78 L978.36 75.78 L977.52 75.78 L976.68 75.78 L975.84 75.78 L975.00 75.78 L974.15 75.78 L973.31 75.78 L972.47 75.78 L971.63 75.78 L970.79 75.78 L969.94 75.78 L969.10 75.78 L968.26 75.78 L967.42 75.78 L966.58 75.78 L965.74 75.78 L964.89 75.78 L964.05 75.78 L963.21 75.78 L962.37 75.78 L961.53 75.78 L960.68 75.78 L959.84 75.78 L959.00 75.78 L958.16 75.78 L957.32 75.78 L956.48 75.78 L955.63 75.78 L954.79 75.78 L953.95 75.78 L953.11 75.78 L952.27 75.78 L951.42 75.78 L950.58 75.78 L949.74 75.78 L948.90 75.78 L948.06 75.78 L947.22 75.78 L946.37 75.78 L945.53 75.78 L944.69 75.78 L943.85 75.78 L943.01 75.78 L942.17 75.78 L941.32 75.78 L940.48 75.78 L939.64 75.78 L938.80 75.78 L937.96 75.78 L937.11 75.78 L936.27 75.78 L935.43 75.78 L934.59 75.78 L933.75 75.78 L932.91 75.78 L932.06 75.78 L931.22 75.78 L930.38 75.78 L929.54 75.78 L928.70 75.78 L927.85 75.78 L927.01 75.78 L926.17 75.78 L925.33 75.78 L924.49 75.78 L923.65 75.78 L922.80 75.78 L921.96 75.78 L921.12 75.78 L920.28 75.78 L919.44 75.78 L918.59 75.78 L917.75 75.78 L916.91 75.78 L916.07 75.78 L915.23 75.78 L914.39 75.78 L913.54 75.78 L912.70 75.78 L911.86 75.78 L911.02 75.78 L910.18 75.78 L909.33 75.78 L908.49 75.78 L907.65 75.78 L906.81 75.78 L905.97 75.78 L905.13 75.78 L904.28 75.78 L903.44 75.78 L902.60 75.78 L901.76 75.78 L900.92 75.78 L900.07 75.78 L899.23 75.78 L898.39 75.78 L897.55 75.78 L896.71 75.78 L895.87 75.78 L895.02 75.78 L894.18 75.78 L893.34 75.78 L892.50 75.78 L891.66 75.78 L890.81 75.78 L889.97 75.78 L889.13 75.78 L888.29 75.78 L887.45 75.78 L886.61 75.78 L885.76 75.78 L884.92 75.78 L884.08 75.78 L883.24 75.78 L882.40 75.78 L881.55 75.78 L880.71 75.78 L879.87 75.78 L879.03 75.78 L878.19 75.78 L877.35 75.78 L876.50 75.78 L875.66 75.78 L874.82 75.78 L873.98 75.78 L873.14 75.78 L872.29 75.78 L871.45 75.78 L870.61 75.78 L869.77 75.78 L868.93 75.78 L868.09 75.78 L867.24 75.78 L866.40 75.78 L865.56 75.78 L864.72 75.78 L863.88 75.78 L863.03 75.78 L862.19 75.78 L861.35 75.78 L860.51 75.78 L859.67 75.78 L858.83 75.78 L857.98 75.78 L857.14 75.78 L856.30 75.78 L855.46 75.78 L854.62 75.78 L853.78 75.78 L852.93 75.78 L852.09 75.78 L851.25 75.78 L850.41 75.78 L849.57 75.78 L848.72 75.78 L847.88 75.78 L847.04 75.78 L846.20 75.78 L845.36 75.78 L844.52 75.78 L843.67 75.78 L842.83 75.78 L841.99 75.78 L841.15 75.78 L840.31 75.78 L839.46 75.78 L838.62 75.78 L837.78 75.78 L836.94 75.78 L836.10 75.78 L835.26 75.78 L834.41 75.78 L833.57 75.78 L832.73 75.78 L831.89 75.78 L831.05 75.78 L830.20 75.78 L829.36 75.78 L828.52 75.78 L827.68 75.78 L826.84 75.78 L826.00 75.78 L825.15 75.78 L824.31 75.78 L823.47 75.78 L822.63 75.78 L821.79 75.78 L820.94 75.78 L820.10 75.78 L819.26 75.78 L818.42 75.78 L817.58 75.78 L816.74 75.78 L815.89 75.78 L815.05 75.78 L814.21 75.78 L813.37 75.78 L812.53 75.78 L811.68 75.78 L810.84 75.78 L810.00 75.78 L809.16 75.78 L808.32 75.78 L807.48 75.78 L806.63 75.78 L805.79 75.78 L804.95 75.78 L804.11 75.78 L803.27 75.78 L802.42 75.78 L801.58 75.78 L800.74 75.78 L799.90 75.78 L799.06 75.78 L798.22 75.78 L797.37 75.78 L796.53 75.78 L795.69 75.78 L794.85 75.78 L794.01 75.78 L793.16 75.78 L792.32 75.78 L791.48 75.78 L790.64 75.78 L789.80 75.78 L788.96 75.78 L788.11 75.78 L787.27 75.78 L786.43 75.78 L785.59 75.78 L784.75 75.78 L783.90 75.78 L783.06 75.78 L782.22 75.78 L781.38 75.78 L780.54 75.78 L779.70 75.78 L778.85 75.78 L778.01 75.78 L777.17 75.78 L776.33 75.78 L775.49 75.78 L774.65 75.78 L773.80 75.78 L772.96 75.78 L772.12 75.78 L771.28 75.78 L770.44 75.78 L769.59 75.78 L768.75 75.78 L767.91 75.78 L767.07 75.78 L766.23 75.78 L765.39 75.78 L764.54 75.78 L763.70 75.78 L762.86 75.78 L762.02 75.78 L761.18 75.78 L760.33 75.78 L759.49 75.78 L758.65 75.78 L757.81 75.78 L756.97 75.78 L756.13 75.78 L755.28 75.78 L754.44 75.78 L753.60 75.78 L752.76 75.78 L751.92 75.78 L751.07 75.78"/>
</g>
<text x="301.54" y="329.82" font-size="11.2" fill="#8c8c8c">+180</text>
<circle cx="329.76" cy="322.80" r="1.0" fill="none" stroke="#8c8c8c" stroke-width="0.7"/>
<text x="399.11" y="329.82" font-size="11.2" fill="#8c8c8c">+150</text>
<circle cx="427.34" cy="322.80" r="1.0" fill="none" stroke="#8c8c8c" stroke-width="0.7"/>
<text x="496.69" y="329.82" font-size="11.2" fill="#8c8c8c">+120</text>
<circle cx="524.91" cy="322.80" r="1.0" fill="none" stroke="#8c8c8c" stroke-width="0.7"/>
<text x="597.38" y="329.82" font-size="11.2" fill="#8c8c8c">+90</text>
<circle cx="619.37" cy="322.80" r="1.0" fill="none" stroke="#8c8c8c" stroke-width="0.7"/>
<text x="694.95" y="329.82" font-size="11.2" fill="#8c8c8c">+60</text>
<circle cx="716.95" cy="322.80" r="1.0" fill="none" stroke="#8c8c8c" stroke-width="0.7"/>
<text x="792.53" y="329.82" font-size="11.2" fill="#8c8c8c">+30</text>
<circle cx="814.52" cy="322.80" r="1.0" fill="none" stroke="#8c8c8c" stroke-width="0.7"/>
<text x="893.22" y="329.82" font-size="11.2" fill="#8c8c8c">+0</text>
<circle cx="908.98" cy="322.80" r="1.0" fill="none" stroke="#8c8c8c" stroke-width="0.7"/>
<text x="984.56" y="329.82" font-size="11.2" fill="#8c8c8c">+330</text>
<circle cx="1012.79" cy="322.80" r="1.0" fill="none" stroke="#8c8c8c" stroke-width="0.7"/>
<text x="1082.14" y="329.82" font-size="11.2" fill="#8c8c8c">+300</text>
<circle cx="1110.36" cy="322.80" r="1.0" fill="none" stroke="#8c8c8c" stroke-width="0.7"/>
<text x="1179.71" y="329.82" font-size="11.2" fill="#8c8c8c">+270</text>
<circle cx="1207.94" cy="322.80" r="1.0" fill="none" stroke="#8c8c8c" stroke-width="0.7"/>
<text x="1277.29" y="329.82" font-size="11.2" fill="#8c8c8c">+240</text>
<circle cx="1305.51" cy="322.80" r="1.0" fill="none" stroke="#8c8c8c" stroke-width="0.7"/>
<text x="1374.86" y="329.82" font-size="11.2" fill="#8c8c8c">+210</text>
<circle cx="1403.09" cy="322.80" r="1.0" fill="none" stroke="#8c8c8c" stroke-width="0.7"/>
<text x="1472.44" y="329.82" font-size="11.2" fill="#8c8c8c">+180</text>
<circle cx="1500.66" cy="322.80" r="1.0" fill="none" stroke="#8c8c8c" stroke-width="0.7"/>
<text x="890.10" y="25.31" font-size="11.2" fill="#8c8c8c">+90</text>
<circle cx="912.10" cy="18.29" r="1.0" fill="none" stroke="#8c8c8c" stroke-width="0.7"/>
<text x="890.10" y="123.08" font-size="11.2" fill="#8c8c8c">+60</text>
<circle cx="912.10" cy="116.06" r="1.0" fill="none" stroke="#8c8c8c" stroke-width="0.7"/>
<text x="890.10" y="220.85" font-size="11.2" fill="#8c8c8c">+30</text>
<circle cx="912.10" cy="213.83" r="1.0" fill="none" stroke="#8c8c8c" stroke-width="0.7"/>
<text x="890.10" y="428.39" font-size="11.2" fill="#8c8c8c">−30</text>
<circle cx="912.10" cy="421.37" r="1.0" fill="none" stroke="#8c8c8c" stroke-width="0.7"/>
<text x="890.10" y="526.16" font-size="11.2" fill="#8c8c8c">−60</text>
<circle cx="912.10" cy="519.14" r="1.0" fill="none" stroke="#8c8c8c" stroke-width="0.7"/>
<text x="890.10" y="623.93" font-size="11.2" fill="#8c8c8c">−90</text>
<circle cx="912.10" cy="616.91" r="1.0" fill="none" stroke="#8c8c8c" stroke-width="0.7"/>
<path d="M1049.3 330 L1058.9 339.6" stroke="#8a8a8a" stroke-width="1.5" fill="none"/>
<path d="M1058.9 339.6 L1115.6 415.6 L1155.6 455.6 Q1175 468 1200 466 L1244 464.4 L1306.7 453" stroke="#5a5a5a" stroke-width="0.8" stroke-dasharray="1 1.6" fill="none"/>
<path d="M794.4 168 Q786 220 784 292" stroke="#5a5a5a" stroke-width="0.8" stroke-dasharray="1 1.6" fill="none"/>
<path d="M786.8 291.8 L789.3 307.7" stroke="#8a8a8a" stroke-width="1.5" fill="none"/>
<ellipse cx="600.4" cy="270.7" rx="29.9" ry="20.9" transform="rotate(-40 600.4 270.7)" fill="none" stroke="#2ab07f" stroke-width="2.3"/>
<path d="M602 270.6 L642 267.4 L670 266.9 L693 266.9" stroke="#2ab07f" stroke-width="1.4" stroke-dasharray="1.4 2.3" fill="none"/>
<path d="M693 266.9 L700 266.9" stroke="#2ab07f" stroke-width="1.6" fill="none"/>
<path d="M602 273 L626.25 292.9" stroke="#2ab07f" stroke-width="1.4" stroke-dasharray="1.4 2.3" fill="none"/>
<circle cx="700" cy="266.9" r="1.2" fill="#ff6040"/>
<circle cx="626.25" cy="292.9" r="1.2" fill="#ff6040"/>
<ellipse cx="767.2" cy="290.3" rx="25.0" ry="23.4" transform="rotate(-36.6 767.2 290.3)" fill="none" stroke="#4ec36b" stroke-width="2.3"/>
<path d="M757.2 289 L697.5 367" stroke="#4ec36b" stroke-width="1.4" stroke-dasharray="1.4 2.3" fill="none"/>
<path d="M697.5 367 L693 376" stroke="#4ec36b" stroke-width="1.4" fill="none"/>
<circle cx="693" cy="376" r="1.2" fill="#ff6040"/>
<path d="M598.3 272 H603.3 M600.8 269.5 V274.5" stroke="#ff0000" stroke-width="1.5"/>
<path d="M758.7 285 H764.3 M761.5 282.2 V287.8" stroke="#ff0000" stroke-width="1.5"/>
<text x="600.30" y="273.80" font-size="11.24" fill="#ffffff" text-anchor="middle" textLength="18.83" lengthAdjust="spacingAndGlyphs">ORI</text>
<text x="766.70" y="294.00" font-size="11.24" fill="#ffffff" text-anchor="middle" textLength="20.45" lengthAdjust="spacingAndGlyphs">STA</text>
<text x="316.5" y="30.10" style="font-family:&quot;Liberation Mono&quot;,monospace" font-size="14.60" fill="#ffffff" textLength="50.17" lengthAdjust="spacingAndGlyphs" xml:space="preserve">NZ0004</text>
<text x="316.5" y="43.10" style="font-family:&quot;Liberation Mono&quot;,monospace" font-size="14.60" fill="#ffffff" textLength="317.77" lengthAdjust="spacingAndGlyphs" xml:space="preserve">Beg: 20251022 08:19:02 (sol = 208.83°)</text>
<text x="316.5" y="56.10" style="font-family:&quot;Liberation Mono&quot;,monospace" font-size="14.60" fill="#ffffff" textLength="317.77" lengthAdjust="spacingAndGlyphs" xml:space="preserve">End: 20251022 13:26:05 (sol = 209.05°)</text>
<text x="316.5" y="69.10" style="font-family:&quot;Liberation Mono&quot;,monospace" font-size="14.60" fill="#ffffff" textLength="317.77" lengthAdjust="spacingAndGlyphs" xml:space="preserve">--------------------------------------</text>
<text x="316.5" y="82.10" style="font-family:&quot;Liberation Mono&quot;,monospace" font-size="14.60" fill="#ffffff" textLength="50.17" lengthAdjust="spacingAndGlyphs" xml:space="preserve">...: 2</text>
<text x="316.5" y="95.10" style="font-family:&quot;Liberation Mono&quot;,monospace" font-size="14.60" fill="#ffffff" textLength="50.17" lengthAdjust="spacingAndGlyphs" xml:space="preserve">ORI: 2</text>
<text x="316.5" y="108.10" style="font-family:&quot;Liberation Mono&quot;,monospace" font-size="14.60" fill="#ffffff" textLength="50.17" lengthAdjust="spacingAndGlyphs" xml:space="preserve">STA: 1</text>
<rect x="106" y="832" width="24" height="4" fill="#bddf26"/>
<rect x="165" y="832" width="180" height="4" fill="#bddf26"/>
<rect x="366" y="832" width="259" height="4" fill="#bddf26"/>
<rect x="636" y="832" width="151" height="4" fill="#bddf26"/>
<rect x="807" y="832" width="93" height="4" fill="#bddf26"/>
<rect x="920" y="832" width="53" height="4" fill="#bddf26"/>
<rect x="984" y="832" width="82" height="4" fill="#bddf26"/>
<rect x="1082" y="832" width="122" height="4" fill="#bddf26"/>
<rect x="1244" y="832" width="82" height="4" fill="#bddf26"/>
<rect x="1337" y="832" width="19" height="4" fill="#bddf26"/>
<rect x="1381" y="832" width="63" height="4" fill="#bddf26"/>
<rect x="1459" y="832" width="53" height="4" fill="#bddf26"/>
<rect x="1523" y="832" width="24" height="4" fill="#bddf26"/>
<rect x="1724" y="832" width="24" height="4" fill="#bddf26"/>
<rect x="1758" y="832" width="24" height="4" fill="#bddf26"/>
<rect x="165" y="816" width="24" height="4" fill="#81d34d"/>
<rect x="224" y="816" width="63" height="4" fill="#81d34d"/>
<rect x="312" y="816" width="29" height="4" fill="#81d34d"/>
<rect x="366" y="816" width="127" height="4" fill="#81d34d"/>
<rect x="508" y="816" width="146" height="4" fill="#81d34d"/>
<rect x="704" y="816" width="34" height="4" fill="#81d34d"/>
<rect x="773" y="816" width="73" height="4" fill="#81d34d"/>
<rect x="871" y="816" width="117" height="4" fill="#81d34d"/>
<rect x="1003" y="816" width="14" height="4" fill="#81d34d"/>
<rect x="1062" y="816" width="151" height="4" fill="#81d34d"/>
<rect x="1244" y="816" width="23" height="4" fill="#81d34d"/>
<rect x="1293" y="816" width="23" height="4" fill="#81d34d"/>
<rect x="1342" y="816" width="23" height="4" fill="#81d34d"/>
<rect x="1386" y="816" width="43" height="4" fill="#81d34d"/>
<rect x="1459" y="816" width="24" height="4" fill="#81d34d"/>
<rect x="1548" y="816" width="23" height="4" fill="#81d34d"/>
<rect x="165" y="800" width="24" height="4" fill="#4ec36b"/>
<rect x="258" y="800" width="230" height="4" fill="#4ec36b"/>
<rect x="508" y="800" width="107" height="4" fill="#4ec36b"/>
<rect x="626" y="800" width="92" height="4" fill="#4ec36b"/>
<rect x="729" y="800" width="97" height="4" fill="#4ec36b"/>
<rect x="949" y="800" width="201" height="4" fill="#4ec36b"/>
<rect x="1160" y="800" width="88" height="4" fill="#4ec36b"/>
<rect x="1258" y="800" width="186" height="4" fill="#4ec36b"/>
<rect x="1459" y="800" width="24" height="4" fill="#4ec36b"/>
<rect x="1553" y="800" width="23" height="4" fill="#4ec36b"/>
<rect x="194" y="783" width="24" height="4" fill="#2ab07f"/>
<rect x="322" y="783" width="184" height="4" fill="#2ab07f"/>
<rect x="518" y="783" width="24" height="4" fill="#2ab07f"/>
<rect x="557" y="783" width="127" height="4" fill="#2ab07f"/>
<rect x="807" y="783" width="24" height="4" fill="#2ab07f"/>
<rect x="954" y="783" width="19" height="4" fill="#2ab07f"/>
<rect x="989" y="783" width="136" height="4" fill="#2ab07f"/>
<rect x="1155" y="783" width="63" height="4" fill="#2ab07f"/>
<rect x="1244" y="783" width="23" height="4" fill="#2ab07f"/>
<rect x="1317" y="783" width="24" height="4" fill="#2ab07f"/>
<rect x="1396" y="783" width="23" height="4" fill="#2ab07f"/>
<rect x="1464" y="783" width="186" height="4" fill="#2ab07f"/>
<rect x="341" y="767" width="29" height="4" fill="#1e9b8a"/>
<rect x="410" y="767" width="38" height="4" fill="#1e9b8a"/>
<rect x="469" y="767" width="24" height="4" fill="#1e9b8a"/>
<rect x="528" y="767" width="18" height="4" fill="#1e9b8a"/>
<rect x="562" y="767" width="29" height="4" fill="#1e9b8a"/>
<rect x="616" y="767" width="33" height="4" fill="#1e9b8a"/>
<rect x="959" y="767" width="29" height="4" fill="#1e9b8a"/>
<rect x="1062" y="767" width="24" height="4" fill="#1e9b8a"/>
<rect x="1101" y="767" width="24" height="4" fill="#1e9b8a"/>
<rect x="1160" y="767" width="34" height="4" fill="#1e9b8a"/>
<rect x="1249" y="767" width="23" height="4" fill="#1e9b8a"/>
<rect x="1425" y="767" width="87" height="4" fill="#1e9b8a"/>
<rect x="420" y="750" width="24" height="4" fill="#25858e"/>
<rect x="533" y="750" width="23" height="4" fill="#25858e"/>
<rect x="567" y="750" width="24" height="4" fill="#25858e"/>
<rect x="621" y="750" width="122" height="4" fill="#25858e"/>
<rect x="969" y="750" width="166" height="4" fill="#25858e"/>
<rect x="1185" y="750" width="161" height="4" fill="#25858e"/>
<rect x="1469" y="750" width="24" height="4" fill="#25858e"/>
<rect x="430" y="734" width="23" height="4" fill="#2d708e"/>
<rect x="577" y="734" width="156" height="4" fill="#2d708e"/>
<rect x="994" y="734" width="111" height="4" fill="#2d708e"/>
<rect x="1116" y="734" width="107" height="4" fill="#2d708e"/>
<rect x="1263" y="734" width="29" height="4" fill="#2d708e"/>
<rect x="1489" y="734" width="23" height="4" fill="#2d708e"/>
<rect x="592" y="717" width="23" height="4" fill="#375a8c"/>
<rect x="655" y="717" width="117" height="4" fill="#375a8c"/>
<rect x="1072" y="717" width="171" height="4" fill="#375a8c"/>
<rect x="1263" y="717" width="24" height="4" fill="#375a8c"/>
<rect x="596" y="701" width="137" height="4" fill="#424086"/>
<rect x="1092" y="701" width="28" height="4" fill="#424086"/>
<rect x="1200" y="701" width="23" height="4" fill="#424086"/>
<rect x="1273" y="701" width="53" height="4" fill="#424086"/>
<rect x="1111" y="685" width="24" height="4" fill="#482475"/>
<g stroke="#ffffff" stroke-opacity="0.35" stroke-width="2.08" stroke-dasharray="2.08 3.44">
<line x1="75.00" y1="842.40" x2="75.00" y2="641.40"/>
<line x1="218.90" y1="842.40" x2="218.90" y2="641.40"/>
<line x1="364.90" y1="842.40" x2="364.90" y2="641.40"/>
<line x1="505.90" y1="842.40" x2="505.90" y2="641.40"/>
<line x1="651.00" y1="842.40" x2="651.00" y2="641.40"/>
<line x1="796.90" y1="842.40" x2="796.90" y2="641.40"/>
<line x1="939.80" y1="842.40" x2="939.80" y2="641.40"/>
<line x1="1090.90" y1="842.40" x2="1090.90" y2="641.40"/>
<line x1="1238.70" y1="842.40" x2="1238.70" y2="641.40"/>
<line x1="1394.20" y1="842.40" x2="1394.20" y2="641.40"/>
<line x1="1548.00" y1="842.40" x2="1548.00" y2="641.40"/>
<line x1="1687.00" y1="842.40" x2="1687.00" y2="641.40"/>
</g>
<path d="M114 834 H122 M118 830 V838" stroke="#ffffff" stroke-width="2"/>
<path d="M241 834 H249 M245 830 V838" stroke="#ffffff" stroke-width="2"/>
<path d="M510 834 H518 M514 830 V838" stroke="#ffffff" stroke-width="2"/>
<path d="M707 834 H715 M711 830 V838" stroke="#ffffff" stroke-width="2"/>
<path d="M834 834 H842 M838 830 V838" stroke="#ffffff" stroke-width="2"/>
<path d="M962 834 H970 M966 830 V838" stroke="#ffffff" stroke-width="2"/>
<path d="M987 834 H995 M991 830 V838" stroke="#ffffff" stroke-width="2"/>
<path d="M1117 834 H1125 M1121 830 V838" stroke="#ffffff" stroke-width="2"/>
<path d="M1296 834 H1304 M1300 830 V838" stroke="#ffffff" stroke-width="2"/>
<path d="M1342 834 H1350 M1346 830 V838" stroke="#ffffff" stroke-width="2"/>
<path d="M1413 834 H1421 M1417 830 V838" stroke="#ffffff" stroke-width="2"/>
<path d="M1482 834 H1490 M1486 830 V838" stroke="#ffffff" stroke-width="2"/>
<path d="M1531 834 H1539 M1535 830 V838" stroke="#ffffff" stroke-width="2"/>
<path d="M1732 834 H1740 M1736 830 V838" stroke="#ffffff" stroke-width="2"/>
<path d="M1766 834 H1774 M1770 830 V838" stroke="#ffffff" stroke-width="2"/>
<path d="M173 818 H181 M177 814 V822" stroke="#ffffff" stroke-width="2"/>
<path d="M256 818 H264 M260 814 V822" stroke="#ffffff" stroke-width="2"/>
<path d="M324 818 H332 M328 814 V822" stroke="#ffffff" stroke-width="2"/>
<path d="M438 818 H446 M442 814 V822" stroke="#ffffff" stroke-width="2"/>
<path d="M599 818 H607 M603 814 V822" stroke="#ffffff" stroke-width="2"/>
<path d="M717 818 H725 M721 814 V822" stroke="#ffffff" stroke-width="2"/>
<path d="M794 818 H802 M798 814 V822" stroke="#ffffff" stroke-width="2"/>
<path d="M940 818 H948 M944 814 V822" stroke="#ffffff" stroke-width="2"/>
<path d="M1006 818 H1014 M1010 814 V822" stroke="#ffffff" stroke-width="2"/>
<path d="M1153 818 H1161 M1157 814 V822" stroke="#ffffff" stroke-width="2"/>
<path d="M1251 818 H1259 M1255 814 V822" stroke="#ffffff" stroke-width="2"/>
<path d="M1300 818 H1308 M1304 814 V822" stroke="#ffffff" stroke-width="2"/>
<path d="M1350 818 H1358 M1354 814 V822" stroke="#ffffff" stroke-width="2"/>
<path d="M1403 818 H1411 M1407 814 V822" stroke="#ffffff" stroke-width="2"/>
<path d="M1467 818 H1475 M1471 814 V822" stroke="#ffffff" stroke-width="2"/>
<path d="M1555 818 H1563 M1559 814 V822" stroke="#ffffff" stroke-width="2"/>
<path d="M175 802 H183 M179 798 V806" stroke="#ffffff" stroke-width="2"/>
<path d="M379 802 H387 M383 798 V806" stroke="#ffffff" stroke-width="2"/>
<path d="M545 802 H553 M549 798 V806" stroke="#ffffff" stroke-width="2"/>
<path d="M682 802 H690 M686 798 V806" stroke="#ffffff" stroke-width="2"/>
<path d="M742 802 H750 M746 798 V806" stroke="#ffffff" stroke-width="2"/>
<path d="M1075 802 H1083 M1079 798 V806" stroke="#ffffff" stroke-width="2"/>
<path d="M1217 802 H1225 M1221 798 V806" stroke="#ffffff" stroke-width="2"/>
<path d="M1305 802 H1313 M1309 798 V806" stroke="#ffffff" stroke-width="2"/>
<path d="M1467 802 H1475 M1471 798 V806" stroke="#ffffff" stroke-width="2"/>
<path d="M1560 802 H1568 M1564 798 V806" stroke="#ffffff" stroke-width="2"/>
<path d="M202 785 H210 M206 781 V789" stroke="#ffffff" stroke-width="2"/>
<path d="M401 785 H409 M405 781 V789" stroke="#ffffff" stroke-width="2"/>
<path d="M526 785 H534 M530 781 V789" stroke="#ffffff" stroke-width="2"/>
<path d="M639 785 H647 M643 781 V789" stroke="#ffffff" stroke-width="2"/>
<path d="M815 785 H823 M819 781 V789" stroke="#ffffff" stroke-width="2"/>
<path d="M960 785 H968 M964 781 V789" stroke="#ffffff" stroke-width="2"/>
<path d="M1041 785 H1049 M1045 781 V789" stroke="#ffffff" stroke-width="2"/>
<path d="M1188 785 H1196 M1192 781 V789" stroke="#ffffff" stroke-width="2"/>
<path d="M1251 785 H1259 M1255 781 V789" stroke="#ffffff" stroke-width="2"/>
<path d="M1325 785 H1333 M1329 781 V789" stroke="#ffffff" stroke-width="2"/>
<path d="M1403 785 H1411 M1407 781 V789" stroke="#ffffff" stroke-width="2"/>
<path d="M1546 785 H1554 M1550 781 V789" stroke="#ffffff" stroke-width="2"/>
<path d="M356 769 H364 M360 765 V773" stroke="#ffffff" stroke-width="2"/>
<path d="M426 769 H434 M430 765 V773" stroke="#ffffff" stroke-width="2"/>
<path d="M477 769 H485 M481 765 V773" stroke="#ffffff" stroke-width="2"/>
<path d="M536 769 H544 M540 765 V773" stroke="#ffffff" stroke-width="2"/>
<path d="M570 769 H578 M574 765 V773" stroke="#ffffff" stroke-width="2"/>
<path d="M631 769 H639 M635 765 V773" stroke="#ffffff" stroke-width="2"/>
<path d="M974 769 H982 M978 765 V773" stroke="#ffffff" stroke-width="2"/>
<path d="M1070 769 H1078 M1074 765 V773" stroke="#ffffff" stroke-width="2"/>
<path d="M1109 769 H1117 M1113 765 V773" stroke="#ffffff" stroke-width="2"/>
<path d="M1178 769 H1186 M1182 765 V773" stroke="#ffffff" stroke-width="2"/>
<path d="M1255 769 H1263 M1259 765 V773" stroke="#ffffff" stroke-width="2"/>
<path d="M1467 769 H1475 M1471 765 V773" stroke="#ffffff" stroke-width="2"/>
<path d="M428 752 H436 M432 748 V756" stroke="#ffffff" stroke-width="2"/>
<path d="M540 752 H548 M544 748 V756" stroke="#ffffff" stroke-width="2"/>
<path d="M575 752 H583 M579 748 V756" stroke="#ffffff" stroke-width="2"/>
<path d="M704 752 H712 M708 748 V756" stroke="#ffffff" stroke-width="2"/>
<path d="M1095 752 H1103 M1099 748 V756" stroke="#ffffff" stroke-width="2"/>
<path d="M1270 752 H1278 M1274 748 V756" stroke="#ffffff" stroke-width="2"/>
<path d="M1477 752 H1485 M1481 748 V756" stroke="#ffffff" stroke-width="2"/>
<path d="M437 736 H445 M441 732 V740" stroke="#ffffff" stroke-width="2"/>
<path d="M631 736 H639 M635 732 V740" stroke="#ffffff" stroke-width="2"/>
<path d="M1039 736 H1047 M1043 732 V740" stroke="#ffffff" stroke-width="2"/>
<path d="M1168 736 H1176 M1172 732 V740" stroke="#ffffff" stroke-width="2"/>
<path d="M1274 736 H1282 M1278 732 V740" stroke="#ffffff" stroke-width="2"/>
<path d="M1497 736 H1505 M1501 732 V740" stroke="#ffffff" stroke-width="2"/>
<path d="M599 719 H607 M603 715 V723" stroke="#ffffff" stroke-width="2"/>
<path d="M727 719 H735 M731 715 V723" stroke="#ffffff" stroke-width="2"/>
<path d="M1188 719 H1196 M1192 715 V723" stroke="#ffffff" stroke-width="2"/>
<path d="M1271 719 H1279 M1275 715 V723" stroke="#ffffff" stroke-width="2"/>
<path d="M688 703 H696 M692 699 V707" stroke="#ffffff" stroke-width="2"/>
<path d="M1102 703 H1110 M1106 699 V707" stroke="#ffffff" stroke-width="2"/>
<path d="M1207 703 H1215 M1211 699 V707" stroke="#ffffff" stroke-width="2"/>
<path d="M1300 703 H1308 M1304 699 V707" stroke="#ffffff" stroke-width="2"/>
<path d="M1119 687 H1127 M1123 683 V691" stroke="#ffffff" stroke-width="2"/>
<text x="118.05" y="831.60" font-size="10.60" fill="#ffffff" text-anchor="middle" textLength="19.61" lengthAdjust="spacingAndGlyphs">KSE</text>
<text x="254.75" y="831.60" font-size="10.60" fill="#ffffff" text-anchor="middle" textLength="19.65" lengthAdjust="spacingAndGlyphs">ETA</text>
<text x="495.40" y="831.60" font-size="10.60" fill="#ffffff" text-anchor="middle" textLength="21.74" lengthAdjust="spacingAndGlyphs">NZC</text>
<text x="711.30" y="831.60" font-size="10.60" fill="#ffffff" text-anchor="middle" textLength="22.46" lengthAdjust="spacingAndGlyphs">NDA</text>
<text x="853.40" y="831.60" font-size="10.60" fill="#ffffff" text-anchor="middle" textLength="19.07" lengthAdjust="spacingAndGlyphs">SPE</text>
<text x="946.35" y="831.60" font-size="10.60" fill="#ffffff" text-anchor="middle" textLength="21.92" lengthAdjust="spacingAndGlyphs">ARD</text>
<text x="1024.85" y="831.60" font-size="10.60" fill="#ffffff" text-anchor="middle" textLength="20.79" lengthAdjust="spacingAndGlyphs">EGE</text>
<text x="1142.90" y="831.60" font-size="10.60" fill="#ffffff" text-anchor="middle" textLength="20.84" lengthAdjust="spacingAndGlyphs">NTA</text>
<text x="1284.85" y="831.60" font-size="10.60" fill="#ffffff" text-anchor="middle" textLength="24.46" lengthAdjust="spacingAndGlyphs">MON</text>
<text x="1343.75" y="831.60" font-size="10.60" fill="#ffffff" text-anchor="middle" textLength="21.03" lengthAdjust="spacingAndGlyphs">URS</text>
<text x="1412.35" y="831.60" font-size="10.60" fill="#ffffff" text-anchor="middle" textLength="20.88" lengthAdjust="spacingAndGlyphs">AHY</text>
<text x="1485.35" y="831.60" font-size="10.60" fill="#ffffff" text-anchor="middle" textLength="24.17" lengthAdjust="spacingAndGlyphs">GUM</text>
<text x="1534.85" y="831.60" font-size="10.60" fill="#ffffff" text-anchor="middle" textLength="21.93" lengthAdjust="spacingAndGlyphs">OHY</text>
<text x="1735.85" y="831.60" font-size="10.60" fill="#ffffff" text-anchor="middle" textLength="21.10" lengthAdjust="spacingAndGlyphs">XHE</text>
<text x="1769.90" y="831.60" font-size="10.60" fill="#ffffff" text-anchor="middle" textLength="16.43" lengthAdjust="spacingAndGlyphs">EVI</text>
<text x="176.95" y="815.40" font-size="10.60" fill="#ffffff" text-anchor="middle" textLength="20.95" lengthAdjust="spacingAndGlyphs">AVB</text>
<text x="255.40" y="815.40" font-size="10.60" fill="#ffffff" text-anchor="middle" textLength="18.36" lengthAdjust="spacingAndGlyphs">ELY</text>
<text x="323.85" y="815.40" font-size="10.60" fill="#ffffff" text-anchor="middle" textLength="22.90" lengthAdjust="spacingAndGlyphs">CAM</text>
<text x="431.55" y="815.40" font-size="10.60" fill="#ffffff" text-anchor="middle" textLength="20.85" lengthAdjust="spacingAndGlyphs">SSG</text>
<text x="578.50" y="815.40" font-size="10.60" fill="#ffffff" text-anchor="middle" textLength="20.25" lengthAdjust="spacingAndGlyphs">PCA</text>
<text x="720.90" y="815.40" font-size="10.60" fill="#ffffff" text-anchor="middle" textLength="22.30" lengthAdjust="spacingAndGlyphs">AUD</text>
<text x="809.40" y="815.40" font-size="10.60" fill="#ffffff" text-anchor="middle" textLength="21.53" lengthAdjust="spacingAndGlyphs">AUR</text>
<text x="931.05" y="815.40" font-size="10.60" fill="#ffffff" text-anchor="middle" textLength="21.32" lengthAdjust="spacingAndGlyphs">DSX</text>
<text x="1011.10" y="815.40" font-size="10.60" fill="#ffffff" text-anchor="middle" textLength="22.62" lengthAdjust="spacingAndGlyphs">OCU</text>
<text x="1138.30" y="815.40" font-size="10.60" fill="#ffffff" text-anchor="middle" textLength="21.56" lengthAdjust="spacingAndGlyphs">OER</text>
<text x="1255.35" y="815.40" font-size="10.60" fill="#ffffff" text-anchor="middle" textLength="22.40" lengthAdjust="spacingAndGlyphs">DKD</text>
<text x="1304.35" y="815.40" font-size="10.60" fill="#ffffff" text-anchor="middle" textLength="21.31" lengthAdjust="spacingAndGlyphs">DSV</text>
<text x="1353.50" y="815.40" font-size="10.60" fill="#ffffff" text-anchor="middle" textLength="18.89" lengthAdjust="spacingAndGlyphs">ALY</text>
<text x="1407.35" y="815.40" font-size="10.60" fill="#ffffff" text-anchor="middle" textLength="15.14" lengthAdjust="spacingAndGlyphs">JLE</text>
<text x="1470.80" y="815.40" font-size="10.60" fill="#ffffff" text-anchor="middle" textLength="20.72" lengthAdjust="spacingAndGlyphs">SCC</text>
<text x="1559.35" y="815.40" font-size="10.60" fill="#ffffff" text-anchor="middle" textLength="19.29" lengthAdjust="spacingAndGlyphs">FEV</text>
<text x="175.95" y="799.20" font-size="10.60" fill="#ffffff" text-anchor="middle" textLength="19.00" lengthAdjust="spacingAndGlyphs">LYR</text>
<text x="372.80" y="799.20" font-size="10.60" fill="#ffffff" text-anchor="middle" textLength="18.93" lengthAdjust="spacingAndGlyphs">JMC</text>
<text x="559.10" y="799.20" font-size="10.60" fill="#ffffff" text-anchor="middle" textLength="15.60" lengthAdjust="spacingAndGlyphs">JPE</text>
<text x="671.85" y="799.20" font-size="10.60" fill="#ffffff" text-anchor="middle" textLength="20.59" lengthAdjust="spacingAndGlyphs">PAU</text>
<text x="774.00" y="799.20" font-size="10.60" fill="#ffffff" text-anchor="middle" textLength="17.62" lengthAdjust="spacingAndGlyphs">NIA</text>
<text x="1050.30" y="799.20" font-size="10.60" fill="#ffffff" text-anchor="middle" textLength="19.68" lengthAdjust="spacingAndGlyphs">STA</text>
<text x="1206.50" y="799.20" font-size="10.60" fill="#ffffff" text-anchor="middle" textLength="23.69" lengthAdjust="spacingAndGlyphs">NOO</text>
<text x="1353.70" y="799.20" font-size="10.60" fill="#ffffff" text-anchor="middle" textLength="23.95" lengthAdjust="spacingAndGlyphs">COM</text>
<text x="1470.80" y="799.20" font-size="10.60" fill="#ffffff" text-anchor="middle" textLength="21.87" lengthAdjust="spacingAndGlyphs">NCC</text>
<text x="1564.25" y="799.20" font-size="10.60" fill="#ffffff" text-anchor="middle" textLength="20.17" lengthAdjust="spacingAndGlyphs">FED</text>
<text x="206.05" y="782.70" font-size="10.60" fill="#ffffff" text-anchor="middle" textLength="17.66" lengthAdjust="spacingAndGlyphs">HVI</text>
<text x="411.90" y="782.70" font-size="10.60" fill="#ffffff" text-anchor="middle" textLength="17.07" lengthAdjust="spacingAndGlyphs">ARI</text>
<text x="529.90" y="782.70" font-size="10.60" fill="#ffffff" text-anchor="middle" textLength="20.58" lengthAdjust="spacingAndGlyphs">SZC</text>
<text x="618.75" y="782.70" font-size="10.60" fill="#ffffff" text-anchor="middle" textLength="20.25" lengthAdjust="spacingAndGlyphs">CAP</text>
<text x="818.90" y="782.70" font-size="10.60" fill="#ffffff" text-anchor="middle" textLength="21.54" lengthAdjust="spacingAndGlyphs">NUE</text>
<text x="961.35" y="782.70" font-size="10.60" fill="#ffffff" text-anchor="middle" textLength="21.38" lengthAdjust="spacingAndGlyphs">OCT</text>
<text x="1059.15" y="782.70" font-size="10.60" fill="#ffffff" text-anchor="middle" textLength="18.12" lengthAdjust="spacingAndGlyphs">ORI</text>
<text x="1186.35" y="782.70" font-size="10.60" fill="#ffffff" text-anchor="middle" textLength="23.81" lengthAdjust="spacingAndGlyphs">AMO</text>
<text x="1255.35" y="782.70" font-size="10.60" fill="#ffffff" text-anchor="middle" textLength="21.13" lengthAdjust="spacingAndGlyphs">DPC</text>
<text x="1328.95" y="782.70" font-size="10.60" fill="#ffffff" text-anchor="middle" textLength="16.97" lengthAdjust="spacingAndGlyphs">XVI</text>
<text x="1407.35" y="782.70" font-size="10.60" fill="#ffffff" text-anchor="middle" textLength="22.47" lengthAdjust="spacingAndGlyphs">QUA</text>
<text x="1559.35" y="782.70" font-size="10.60" fill="#ffffff" text-anchor="middle" textLength="21.59" lengthAdjust="spacingAndGlyphs">AAN</text>
<text x="352.65" y="766.20" font-size="10.60" fill="#ffffff" text-anchor="middle" textLength="20.88" lengthAdjust="spacingAndGlyphs">TAH</text>
<text x="430.45" y="766.20" font-size="10.60" fill="#ffffff" text-anchor="middle" textLength="16.43" lengthAdjust="spacingAndGlyphs">JEA</text>
<text x="480.90" y="766.20" font-size="10.60" fill="#ffffff" text-anchor="middle" textLength="12.17" lengthAdjust="spacingAndGlyphs">JIP</text>
<text x="538.80" y="766.20" font-size="10.60" fill="#ffffff" text-anchor="middle" textLength="18.78" lengthAdjust="spacingAndGlyphs">PPS</text>
<text x="578.85" y="766.20" font-size="10.60" fill="#ffffff" text-anchor="middle" textLength="20.58" lengthAdjust="spacingAndGlyphs">ZCS</text>
<text x="632.30" y="766.20" font-size="10.60" fill="#ffffff" text-anchor="middle" textLength="22.85" lengthAdjust="spacingAndGlyphs">GDR</text>
<text x="971.15" y="766.20" font-size="10.60" fill="#ffffff" text-anchor="middle" textLength="21.92" lengthAdjust="spacingAndGlyphs">DRA</text>
<text x="1073.95" y="766.20" font-size="10.60" fill="#ffffff" text-anchor="middle" textLength="21.95" lengthAdjust="spacingAndGlyphs">LUM</text>
<text x="1112.85" y="766.20" font-size="10.60" fill="#ffffff" text-anchor="middle" textLength="20.70" lengthAdjust="spacingAndGlyphs">RPU</text>
<text x="1176.85" y="766.20" font-size="10.60" fill="#ffffff" text-anchor="middle" textLength="20.88" lengthAdjust="spacingAndGlyphs">THA</text>
<text x="1260.40" y="766.20" font-size="10.60" fill="#ffffff" text-anchor="middle" textLength="20.09" lengthAdjust="spacingAndGlyphs">PSU</text>
<text x="1470.65" y="766.20" font-size="10.60" fill="#ffffff" text-anchor="middle" textLength="21.11" lengthAdjust="spacingAndGlyphs">XCB</text>
<text x="432.00" y="749.70" font-size="10.60" fill="#ffffff" text-anchor="middle" textLength="17.22" lengthAdjust="spacingAndGlyphs">JRC</text>
<text x="544.50" y="749.70" font-size="10.60" fill="#ffffff" text-anchor="middle" textLength="21.73" lengthAdjust="spacingAndGlyphs">CAN</text>
<text x="578.90" y="749.70" font-size="10.60" fill="#ffffff" text-anchor="middle" textLength="20.47" lengthAdjust="spacingAndGlyphs">FAN</text>
<text x="681.90" y="749.70" font-size="10.60" fill="#ffffff" text-anchor="middle" textLength="19.68" lengthAdjust="spacingAndGlyphs">PER</text>
<text x="1050.25" y="749.70" font-size="10.60" fill="#ffffff" text-anchor="middle" textLength="20.33" lengthAdjust="spacingAndGlyphs">CTA</text>
<text x="1265.45" y="749.70" font-size="10.60" fill="#ffffff" text-anchor="middle" textLength="21.75" lengthAdjust="spacingAndGlyphs">HYD</text>
<text x="1480.90" y="749.70" font-size="10.60" fill="#ffffff" text-anchor="middle" textLength="23.25" lengthAdjust="spacingAndGlyphs">XUM</text>
<text x="441.45" y="733.30" font-size="10.60" fill="#ffffff" text-anchor="middle" textLength="22.24" lengthAdjust="spacingAndGlyphs">COR</text>
<text x="657.80" y="733.30" font-size="10.60" fill="#ffffff" text-anchor="middle" textLength="21.31" lengthAdjust="spacingAndGlyphs">SDA</text>
<text x="1049.40" y="733.30" font-size="10.60" fill="#ffffff" text-anchor="middle" textLength="17.49" lengthAdjust="spacingAndGlyphs">LMI</text>
<text x="1166.65" y="733.30" font-size="10.60" fill="#ffffff" text-anchor="middle" textLength="20.16" lengthAdjust="spacingAndGlyphs">LEO</text>
<text x="1274.75" y="733.30" font-size="10.60" fill="#ffffff" text-anchor="middle" textLength="20.35" lengthAdjust="spacingAndGlyphs">EHY</text>
<text x="1500.30" y="733.30" font-size="10.60" fill="#ffffff" text-anchor="middle" textLength="20.54" lengthAdjust="spacingAndGlyphs">ECV</text>
<text x="603.40" y="717.00" font-size="10.60" fill="#ffffff" text-anchor="middle" textLength="16.97" lengthAdjust="spacingAndGlyphs">JXA</text>
<text x="715.75" y="717.00" font-size="10.60" fill="#ffffff" text-anchor="middle" textLength="21.71" lengthAdjust="spacingAndGlyphs">KCG</text>
<text x="1157.50" y="717.00" font-size="10.60" fill="#ffffff" text-anchor="middle" textLength="22.46" lengthAdjust="spacingAndGlyphs">AND</text>
<text x="1274.90" y="717.00" font-size="10.60" fill="#ffffff" text-anchor="middle" textLength="22.69" lengthAdjust="spacingAndGlyphs">DAD</text>
<text x="666.60" y="700.50" font-size="10.60" fill="#ffffff" text-anchor="middle" textLength="16.54" lengthAdjust="spacingAndGlyphs">ERI</text>
<text x="1108.00" y="700.50" font-size="10.60" fill="#ffffff" text-anchor="middle" textLength="20.01" lengthAdjust="spacingAndGlyphs">SLD</text>
<text x="1211.45" y="700.50" font-size="10.60" fill="#ffffff" text-anchor="middle" textLength="21.59" lengthAdjust="spacingAndGlyphs">ORS</text>
<text x="1299.25" y="700.50" font-size="10.60" fill="#ffffff" text-anchor="middle" textLength="23.15" lengthAdjust="spacingAndGlyphs">GEM</text>
<text x="1122.95" y="684.20" font-size="10.60" fill="#ffffff" text-anchor="middle" textLength="22.95" lengthAdjust="spacingAndGlyphs">KUM</text>
<text x="149.10" y="642.90" font-size="29.60" fill="#555555" stroke="#555555" stroke-width="0.6" text-anchor="end" transform="rotate(-90 149.10 642.90)" textLength="53.90" lengthAdjust="spacingAndGlyphs">APR</text>
<text x="294.60" y="642.90" font-size="29.60" fill="#555555" stroke="#555555" stroke-width="0.6" text-anchor="end" transform="rotate(-90 294.60 642.90)" textLength="56.60" lengthAdjust="spacingAndGlyphs">MAY</text>
<text x="436.40" y="642.90" font-size="29.60" fill="#555555" stroke="#555555" stroke-width="0.6" text-anchor="end" transform="rotate(-90 436.40 642.90)" textLength="47.10" lengthAdjust="spacingAndGlyphs">JUN</text>
<text x="577.10" y="642.90" font-size="29.60" fill="#555555" stroke="#555555" stroke-width="0.6" text-anchor="end" transform="rotate(-90 577.10 642.90)" textLength="42.60" lengthAdjust="spacingAndGlyphs">JUL</text>
<text x="723.60" y="642.90" font-size="29.60" fill="#555555" stroke="#555555" stroke-width="0.6" text-anchor="end" transform="rotate(-90 723.60 642.90)" textLength="56.60" lengthAdjust="spacingAndGlyphs">AUG</text>
<text x="872.10" y="642.90" font-size="29.60" fill="#555555" stroke="#555555" stroke-width="0.6" text-anchor="end" transform="rotate(-90 872.10 642.90)" textLength="50.30" lengthAdjust="spacingAndGlyphs">SEP</text>
<text x="1016.60" y="642.90" font-size="29.60" fill="#555555" stroke="#555555" stroke-width="0.6" text-anchor="end" transform="rotate(-90 1016.60 642.90)" textLength="56.60" lengthAdjust="spacingAndGlyphs">OCT</text>
<text x="1170.30" y="642.90" font-size="29.60" fill="#555555" stroke="#555555" stroke-width="0.6" text-anchor="end" transform="rotate(-90 1170.30 642.90)" textLength="59.60" lengthAdjust="spacingAndGlyphs">NOV</text>
<text x="1318.90" y="642.90" font-size="29.60" fill="#555555" stroke="#555555" stroke-width="0.6" text-anchor="end" transform="rotate(-90 1318.90 642.90)" textLength="54.90" lengthAdjust="spacingAndGlyphs">DEC</text>
<text x="1469.60" y="642.90" font-size="29.60" fill="#555555" stroke="#555555" stroke-width="0.6" text-anchor="end" transform="rotate(-90 1469.60 642.90)" textLength="46.10" lengthAdjust="spacingAndGlyphs">JAN</text>
<text x="1628.40" y="642.90" font-size="29.60" fill="#555555" stroke="#555555" stroke-width="0.6" text-anchor="end" transform="rotate(-90 1628.40 642.90)" textLength="51.10" lengthAdjust="spacingAndGlyphs">FEB</text>
<text x="1766.50" y="642.90" font-size="29.60" fill="#555555" stroke="#555555" stroke-width="0.6" text-anchor="end" transform="rotate(-90 1766.50 642.90)" textLength="60.50" lengthAdjust="spacingAndGlyphs">MAR</text>
<line x1="1045" y1="641.40" x2="1045" y2="842.40" stroke="#ff0000" stroke-width="2.3" stroke-dasharray="5.2 2.2" stroke-dashoffset="2.6"/>
<rect x="20.40" y="641.40" width="1764.90" height="201.00" fill="none" stroke="#ffffff" stroke-width="1.1"/>
<line x1="20.40" y1="842.40" x2="20.40" y2="847.30" stroke="#ffffff" stroke-width="1.1"/>
<text x="20.40" y="862.00" font-size="14.30" fill="#ffffff" text-anchor="middle" textLength="8.22" lengthAdjust="spacingAndGlyphs">0</text>
<line x1="265.52" y1="842.40" x2="265.52" y2="847.30" stroke="#ffffff" stroke-width="1.1"/>
<text x="265.52" y="862.00" font-size="14.30" fill="#ffffff" text-anchor="middle" textLength="16.44" lengthAdjust="spacingAndGlyphs">50</text>
<line x1="510.65" y1="842.40" x2="510.65" y2="847.30" stroke="#ffffff" stroke-width="1.1"/>
<text x="510.65" y="862.00" font-size="14.30" fill="#ffffff" text-anchor="middle" textLength="24.66" lengthAdjust="spacingAndGlyphs">100</text>
<line x1="755.77" y1="842.40" x2="755.77" y2="847.30" stroke="#ffffff" stroke-width="1.1"/>
<text x="755.77" y="862.00" font-size="14.30" fill="#ffffff" text-anchor="middle" textLength="24.66" lengthAdjust="spacingAndGlyphs">150</text>
<line x1="1000.90" y1="842.40" x2="1000.90" y2="847.30" stroke="#ffffff" stroke-width="1.1"/>
<text x="1000.90" y="862.00" font-size="14.30" fill="#ffffff" text-anchor="middle" textLength="24.66" lengthAdjust="spacingAndGlyphs">200</text>
<line x1="1246.02" y1="842.40" x2="1246.02" y2="847.30" stroke="#ffffff" stroke-width="1.1"/>
<text x="1246.02" y="862.00" font-size="14.30" fill="#ffffff" text-anchor="middle" textLength="24.66" lengthAdjust="spacingAndGlyphs">250</text>
<line x1="1491.15" y1="842.40" x2="1491.15" y2="847.30" stroke="#ffffff" stroke-width="1.1"/>
<text x="1491.15" y="862.00" font-size="14.30" fill="#ffffff" text-anchor="middle" textLength="24.66" lengthAdjust="spacingAndGlyphs">300</text>
<line x1="1736.28" y1="842.40" x2="1736.28" y2="847.30" stroke="#ffffff" stroke-width="1.1"/>
<text x="1736.28" y="862.00" font-size="14.30" fill="#ffffff" text-anchor="middle" textLength="24.66" lengthAdjust="spacingAndGlyphs">350</text>
<text x="902.30" y="881.80" font-size="14.40" fill="#ffffff" text-anchor="middle" textLength="146.69" lengthAdjust="spacingAndGlyphs">Solar longitude (deg)</text>
</svg></body></html>
